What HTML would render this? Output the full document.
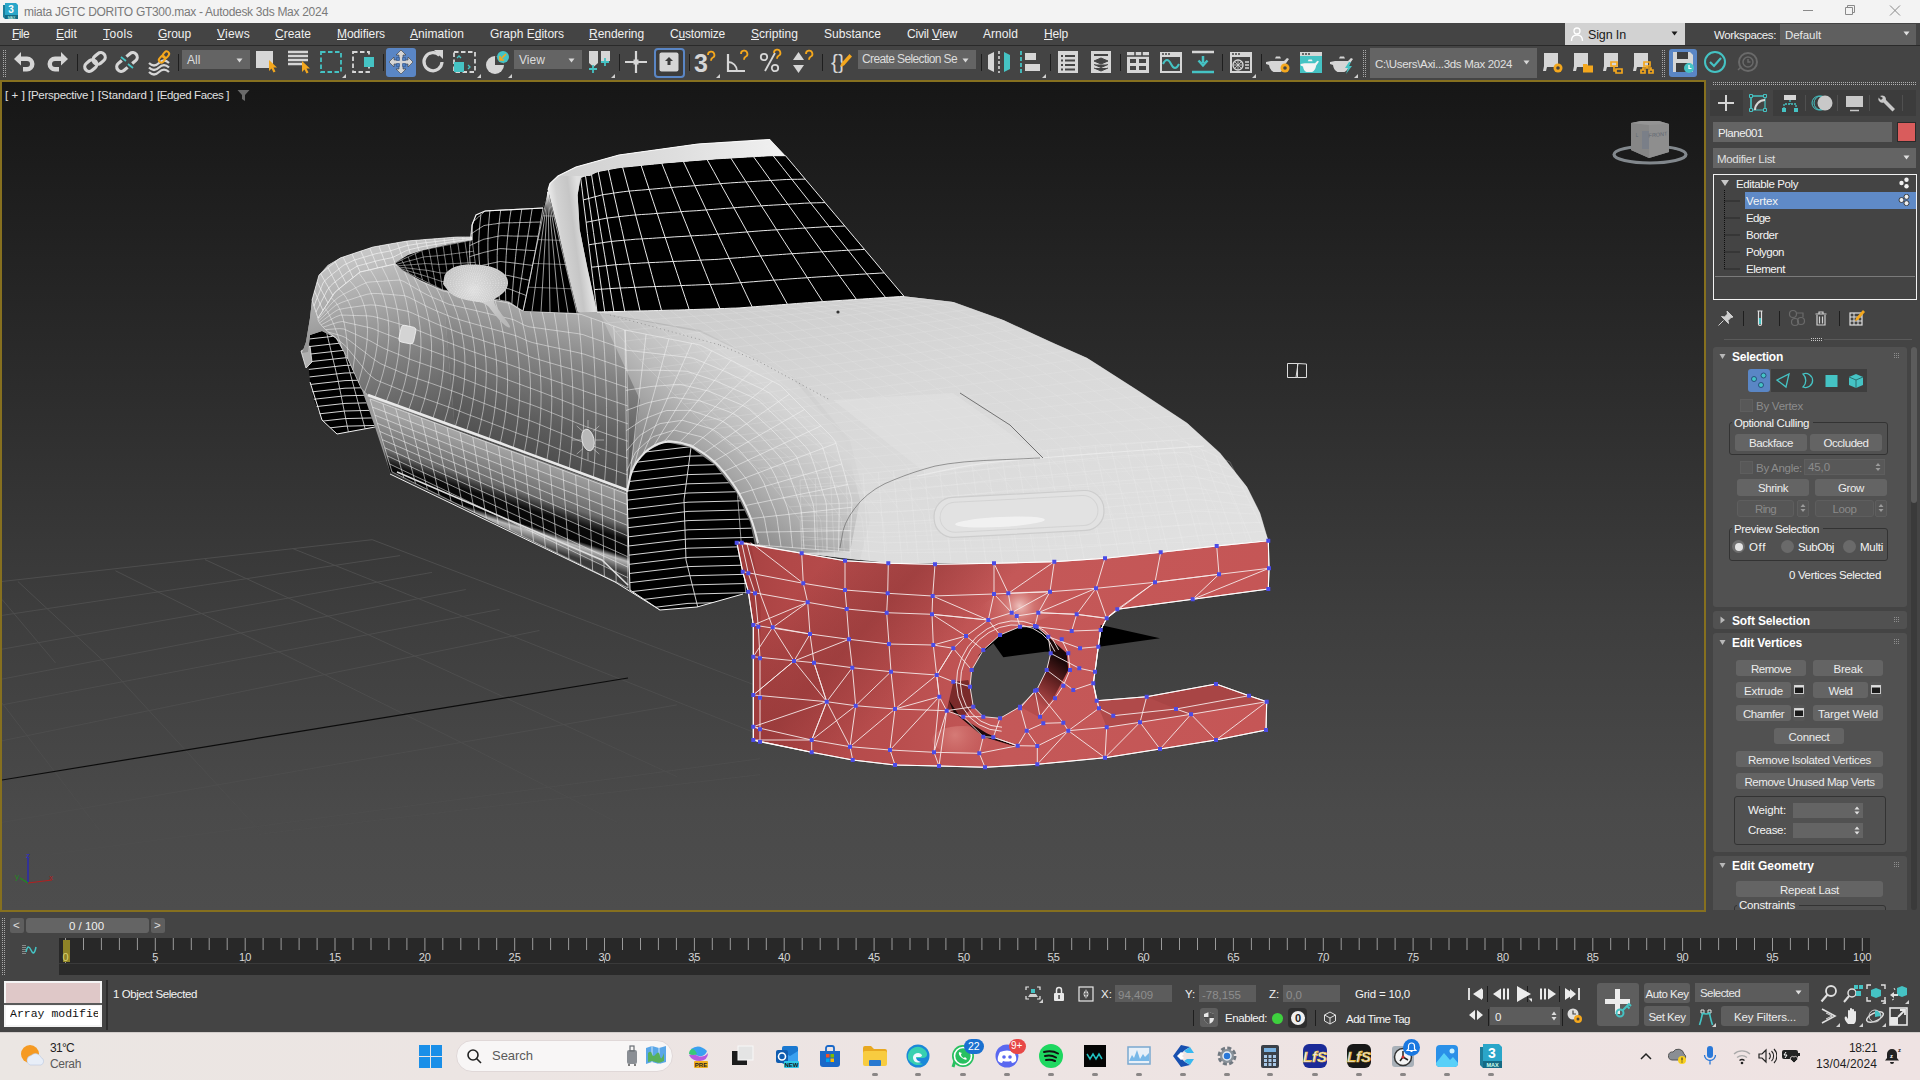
<!DOCTYPE html>
<html><head><meta charset="utf-8"><title>3ds Max</title>
<style>
html,body{margin:0;padding:0;}
body{width:1920px;height:1080px;overflow:hidden;position:relative;background:#444444;font-family:"Liberation Sans",sans-serif;font-size:12px;color:#e6e6e6;}
.abs{position:absolute;}
.t{position:absolute;white-space:nowrap;line-height:14px;}
#title{left:0;top:0;width:1920px;height:23px;background:#f3f3f3;}
#menubar{left:0;top:23px;width:1920px;height:22px;background:#444444;border-bottom:1px solid #2a2a2a;}
#toolbar{left:0;top:46px;width:1920px;height:34px;background:#444444;}
#vp{left:0;top:80px;width:1702px;height:828px;border:2px solid #86701f;background:linear-gradient(#161616 0%,#1f1f1f 15%,#2e2e2e 40%,#3e3e3e 65%,#4a4a4a 88%,#4d4d4d 100%);overflow:hidden;}
#panel{left:1706px;top:80px;width:214px;height:832px;background:#444444;}
#bottom{left:0;top:912px;width:1920px;height:120px;background:#444444;}
#taskbar{left:0;top:1032px;width:1920px;height:47px;border-top:1px solid #d2cdcb;background:linear-gradient(90deg,#ebe6e3,#ede4e3 50%,#efe3e3);}
u{text-decoration:underline;text-underline-offset:1px;}
</style>
</head>
<body>
<div id="title" class="abs"><svg class="abs" style="left:2px;top:3px" width="17" height="17" viewBox="0 0 17 17"><path d="M3 0h11l2 2v11H3z" fill="#2aa6c9"/><path d="M1 2h2v11h13v3H3l-2-2z" fill="#1d7d9a"/><rect x="3" y="12" width="13" height="4" fill="#156a84"/><text x="9" y="10" font-family="Liberation Sans" font-weight="bold" font-size="10" fill="#fff" text-anchor="middle">3</text><text x="9.5" y="15.5" font-family="Liberation Sans" font-size="3.5" fill="#cfe" text-anchor="middle">MAX</text></svg>
<span class="t" style="left:24px;top:5px;font-size:12px;color:#7a7a7a;letter-spacing:-0.29px;">miata JGTC DORITO GT300.max - Autodesk 3ds Max 2024</span>
<svg class="abs" style="left:1795px;top:0px" width="120" height="23" viewBox="0 0 120 23"><path d="M8 10.5h10" stroke="#8a8a8a" stroke-width="1"/><path d="M50.5 7.5h7v7h-7z M52.5 7.5v-2h7v7h-2" fill="none" stroke="#8a8a8a" stroke-width="1"/><path d="M95 5.5l10 10M105 5.5l-10 10" stroke="#8a8a8a" stroke-width="1"/></svg></div>
<div id="menubar" class="abs"><span class="t" style="left:12px;top:4px;font-size:12px;color:#f0f0f0;letter-spacing:-0.58px;"><u>F</u>ile</span>
<span class="t" style="left:56px;top:4px;font-size:12px;color:#f0f0f0;letter-spacing:0.08px;"><u>E</u>dit</span>
<span class="t" style="left:103px;top:4px;font-size:12px;color:#f0f0f0;letter-spacing:0.40px;"><u>T</u>ools</span>
<span class="t" style="left:158px;top:4px;font-size:12px;color:#f0f0f0;letter-spacing:-0.07px;"><u>G</u>roup</span>
<span class="t" style="left:217px;top:4px;font-size:12px;color:#f0f0f0;letter-spacing:0.24px;"><u>V</u>iews</span>
<span class="t" style="left:275px;top:4px;font-size:12px;color:#f0f0f0;letter-spacing:-0.00px;"><u>C</u>reate</span>
<span class="t" style="left:337px;top:4px;font-size:12px;color:#f0f0f0;letter-spacing:-0.08px;"><u>M</u>odifiers</span>
<span class="t" style="left:410px;top:4px;font-size:12px;color:#f0f0f0;letter-spacing:0.07px;"><u>A</u>nimation</span>
<span class="t" style="left:490px;top:4px;font-size:12px;color:#f0f0f0;letter-spacing:-0.00px;">Graph E<u>d</u>itors</span>
<span class="t" style="left:589px;top:4px;font-size:12px;color:#f0f0f0;letter-spacing:-0.04px;"><u>R</u>endering</span>
<span class="t" style="left:670px;top:4px;font-size:12px;color:#f0f0f0;letter-spacing:-0.19px;">C<u>u</u>stomize</span>
<span class="t" style="left:751px;top:4px;font-size:12px;color:#f0f0f0;letter-spacing:0.03px;"><u>S</u>cripting</span>
<span class="t" style="left:824px;top:4px;font-size:12px;color:#f0f0f0;letter-spacing:0.03px;">Substance</span>
<span class="t" style="left:907px;top:4px;font-size:12px;color:#f0f0f0;letter-spacing:-0.18px;">Civil <u>V</u>iew</span>
<span class="t" style="left:983px;top:4px;font-size:12px;color:#f0f0f0;letter-spacing:0.05px;">Arnold</span>
<span class="t" style="left:1044px;top:4px;font-size:12px;color:#f0f0f0;letter-spacing:-0.17px;"><u>H</u>elp</span>
<div class="abs" style="left:1565px;top:0px;width:120px;height:22px;background:#d2d2d2;"></div>
<svg class="abs" style="left:1569px;top:2px" width="16" height="18" viewBox="0 0 16 18"><circle cx="8" cy="6" r="3" fill="none" stroke="#fff" stroke-width="1.3"/><path d="M2.5 16c0-4 2.5-6 5.500-6s5.500 2 5.500 6" fill="none" stroke="#fff" stroke-width="1.3"/></svg>
<span class="t" style="left:1588px;top:5px;font-size:12.5px;color:#1a1a1a;letter-spacing:-0.13px;">Sign In</span>
<svg class="abs" style="left:1671px;top:8px" width="8" height="6" viewBox="0 0 8 6"><path d="M0.500 0.500h6l-3 4z" fill="#1a1a1a"/></svg>
<span class="t" style="left:1714px;top:5px;font-size:11.5px;color:#f0f0f0;letter-spacing:-0.39px;">Workspaces:</span>
<div class="abs" style="left:1780px;top:1px;width:136px;height:21px;background:#5f5f5f;"></div>
<span class="t" style="left:1785px;top:5px;font-size:11.5px;color:#e8e8e8;letter-spacing:-0.06px;">Default</span>
<svg class="abs" style="left:1903px;top:8px" width="8" height="6" viewBox="0 0 8 6"><path d="M0.500 0.500h6l-3 4z" fill="#e0e0e0"/></svg></div>
<div id="toolbar" class="abs"><svg class="abs" style="left:3px;top:4px" width="4" height="27" viewBox="0 0 4 27"><defs><pattern id="gp3" width="2" height="2" patternUnits="userSpaceOnUse"><rect width="1" height="1" fill="#a8a8a8"/></pattern></defs><rect width="4" height="27" fill="url(#gp3)"/></svg>
<svg class="abs" style="left:11.0px;top:2.0px" width="28" height="28" viewBox="-14.0 -14.0 28 28"><path d="M-11 -3l7-7v4.500h6a7.500 7.500 0 0 1 0 15h-4v-4.500h4a3 3 0 0 0 0-6h-6v4.500z" fill="#d6d6d6"/></svg>
<svg class="abs" style="left:43.0px;top:2.0px" width="28" height="28" viewBox="-14.0 -14.0 28 28"><path d="M11 -3l-7-7v4.500h-6a7.500 7.500 0 0 0 0 15h4v-4.500h-4a3 3 0 0 1 0-6h6v4.500z" fill="#d6d6d6"/></svg>
<div class="abs" style="left:77px;top:8px;width:1px;height:17px;background:#1e1e1e;"></div>
<svg class="abs" style="left:81.0px;top:2.0px" width="28" height="28" viewBox="-14.0 -14.0 28 28"><g transform="rotate(-40)" fill="none" stroke="#d6d6d6" stroke-width="3.2"><rect x="-12" y="-4.500" width="13" height="9" rx="4.500"/><rect x="-1" y="-4.500" width="13" height="9" rx="4.500"/></g></svg>
<svg class="abs" style="left:113.0px;top:2.0px" width="28" height="28" viewBox="-14.0 -14.0 28 28"><g transform="rotate(-40)" fill="none" stroke="#d6d6d6" stroke-width="3.2"><path d="M-3 -4.500h-4.500a4.500 4.500 0 0 0 0 9h4.500M3 -4.500h4.500a4.500 4.500 0 0 1 0 9h-4.500"/></g><path d="M-6 -5l5 4M1 2l5 4" stroke="#45c3c4" stroke-width="1.8"/></svg>
<svg class="abs" style="left:145.0px;top:2.0px" width="28" height="28" viewBox="-14.0 -14.0 28 28"><path d="M-10 1q5 5 10 0t10 0M-10 5.500q5 5 10 0t10 0M-10 10q5 5 10 0t10 0" fill="none" stroke="#d6d6d6" stroke-width="2.2"/><g transform="translate(5,-5) rotate(-50)" fill="none" stroke="#f4a71d" stroke-width="2"><rect x="-6.500" y="-2.500" width="7" height="5" rx="2.500"/><rect x="-0.500" y="-2.500" width="7" height="5" rx="2.500"/></g></svg>
<div class="abs" style="left:178px;top:8px;width:1px;height:17px;background:#1e1e1e;"></div>
<div class="abs" style="left:182px;top:4px;width:68px;height:19px;background:#646464;"></div>
<span class="t" style="left:187px;top:7px;font-size:12px;color:#dcdcdc;">All</span>
<svg class="abs" style="left:236px;top:12px" width="8" height="6" viewBox="0 0 8 6"><path d="M0.500 0.500h6l-3 4z" fill="#d8d8d8"/></svg>
<svg class="abs" style="left:252.0px;top:2.0px" width="28" height="28" viewBox="-14.0 -14.0 28 28"><rect x="-10" y="-11" width="17" height="17" fill="#d6d6d6"/><path d="M3 -2l0 11 2.500-2.500 2 4 2-1-2-4 3.500 0z" fill="#f4a71d"/></svg>
<svg class="abs" style="left:284.0px;top:2.0px" width="28" height="28" viewBox="-14.0 -14.0 28 28"><path d="M-10 -10h20M-10 -6h20M-10 -2h20M-10 2h14" stroke="#d6d6d6" stroke-width="2.400"/><path d="M4 -1l0 11 2.500-2.500 2 4 2-1-2-4 3.500 0z" fill="#f4a71d"/></svg>
<svg class="abs" style="left:317.0px;top:2.0px" width="28" height="28" viewBox="-14.0 -14.0 28 28"><rect x="-10" y="-10" width="20" height="20" fill="none" stroke="#45c3c4" stroke-width="1.800" stroke-dasharray="4.500 2.500"/></svg>
<svg class="abs" style="left:342px;top:28px" width="4" height="4" viewBox="0 0 4 4"><path d="M4 0v4h-4z" fill="#d0d0d0"/></svg>
<svg class="abs" style="left:349.0px;top:2.0px" width="28" height="28" viewBox="-14.0 -14.0 28 28"><rect x="-10" y="-10" width="16" height="20" fill="none" stroke="#d6d6d6" stroke-width="1.800" stroke-dasharray="4.500 2.500"/><rect x="1" y="-5" width="10" height="10" fill="#45c3c4"/></svg>
<div class="abs" style="left:383px;top:8px;width:1px;height:17px;background:#1e1e1e;"></div>
<div class="abs" style="left:386px;top:2px;width:30px;height:29px;background:#5a86c5;border-radius:3px;"></div>
<svg class="abs" style="left:387.0px;top:2.0px" width="28" height="28" viewBox="-14.0 -14.0 28 28"><path d="M0 -12l5 5h-3v5h5v-3l5 5-5 5v-3h-5v5h3l-5 5-5-5h3v-5h-5v3l-5-5 5-5v3h5v-5h-3z" fill="#d6d6d6" stroke="#3a3a3a" stroke-width="0.600"/><path d="M-4.500-4.500h3v3h-3zM1.500-4.500h3v3h-3zM-4.500 1.500h3v3h-3zM1.500 1.500h3v3h-3z" fill="#4f7fbf" stroke="#2d4f86" stroke-width="0.500"/></svg>
<svg class="abs" style="left:419.0px;top:2.0px" width="28" height="28" viewBox="-14.0 -14.0 28 28"><path d="M6.500 -6.500a9 9 0 1 0 2.500 6.500" fill="none" stroke="#d6d6d6" stroke-width="3.200"/><path d="M1 -12l9 0 0 9z" fill="#d6d6d6"/></svg>
<svg class="abs" style="left:451.0px;top:2.0px" width="28" height="28" viewBox="-14.0 -14.0 28 28"><rect x="-11" y="-10" width="21" height="20" fill="none" stroke="#d6d6d6" stroke-width="1.800" stroke-dasharray="4.500 2.500"/><rect x="-11" y="0" width="10" height="10" fill="#45c3c4"/><path d="M-8 -4l2-2 2 2M3 3l2 2-2 2" fill="none" stroke="#45c3c4" stroke-width="1.300"/></svg>
<svg class="abs" style="left:477px;top:28px" width="4" height="4" viewBox="0 0 4 4"><path d="M4 0v4h-4z" fill="#d0d0d0"/></svg>
<svg class="abs" style="left:483.0px;top:2.0px" width="28" height="28" viewBox="-14.0 -14.0 28 28"><circle cx="-2" cy="3" r="9" fill="#d6d6d6"/><path d="M-2 3l0-9a9 9 0 0 1 9 9z" fill="#444"/><circle cx="6" cy="-5" r="6" fill="#45c3c4"/><path d="M9 -8l-6 6m0-4v4h4" stroke="#f4a71d" stroke-width="1.600" fill="none"/></svg>
<svg class="abs" style="left:508px;top:28px" width="4" height="4" viewBox="0 0 4 4"><path d="M4 0v4h-4z" fill="#d0d0d0"/></svg>
<div class="abs" style="left:514px;top:4px;width:68px;height:19px;background:#646464;"></div>
<span class="t" style="left:519px;top:7px;font-size:12px;color:#dcdcdc;letter-spacing:0.05px;">View</span>
<svg class="abs" style="left:568px;top:12px" width="8" height="6" viewBox="0 0 8 6"><path d="M0.500 0.500h6l-3 4z" fill="#d8d8d8"/></svg>
<svg class="abs" style="left:586.0px;top:2.0px" width="28" height="28" viewBox="-14.0 -14.0 28 28"><path d="M-11 -11h9v12l-4.500 4-4.500-4z" fill="#d6d6d6"/><path d="M1 -11h9v10h-9z" fill="#d6d6d6"/><path d="M-7 3v8m-4-4h8M5 -4v8m-4-4h8" stroke="#45c3c4" stroke-width="1.800"/></svg>
<svg class="abs" style="left:611px;top:28px" width="4" height="4" viewBox="0 0 4 4"><path d="M4 0v4h-4z" fill="#d0d0d0"/></svg>
<div class="abs" style="left:619px;top:8px;width:1px;height:17px;background:#1e1e1e;"></div>
<svg class="abs" style="left:622.0px;top:2.0px" width="28" height="28" viewBox="-14.0 -14.0 28 28"><path d="M0 -11v22M-11 0h22" stroke="#d6d6d6" stroke-width="2.200"/><rect x="-2.500" y="-2.500" width="5" height="5" fill="#d6d6d6"/></svg>
<div class="abs" style="left:654px;top:2px;width:27px;height:26px;background:#3c3c3c;border:2px solid #5a86c5;border-radius:4px;"></div>
<svg class="abs" style="left:655.0px;top:2.0px" width="28" height="28" viewBox="-14.0 -14.0 28 28"><rect x="-9.500" y="-9.500" width="19" height="19" rx="2" fill="#d6d6d6"/><path d="M0 -5l4 4h-2.500v4h-3v-4h-2.500z" fill="#3a3a3a"/></svg>
<div class="abs" style="left:689px;top:8px;width:1px;height:17px;background:#1e1e1e;"></div>
<svg class="abs" style="left:691.0px;top:2.0px" width="28" height="28" viewBox="-14.0 -14.0 28 28"><text x="-4" y="9.500" font-family="Liberation Sans" font-weight="bold" font-size="25" fill="#d6d6d6" text-anchor="middle">3</text><path d="M3 -7a3.200 3.200 0 1 1 4.500 2.800q-1.500 1-1.500 3" fill="none" stroke="#f4a71d" stroke-width="1.800"/></svg>
<svg class="abs" style="left:716px;top:28px" width="4" height="4" viewBox="0 0 4 4"><path d="M4 0v4h-4z" fill="#d0d0d0"/></svg>
<svg class="abs" style="left:724.0px;top:2.0px" width="28" height="28" viewBox="-14.0 -14.0 28 28"><path d="M-10 -8v17h17" fill="none" stroke="#d6d6d6" stroke-width="2.200"/><path d="M-10 0a9 9 0 0 1 9 9" fill="none" stroke="#d6d6d6" stroke-width="1.800"/><path d="M3 -8a3.200 3.200 0 1 1 4.500 2.800q-1.500 1-1.500 3" fill="none" stroke="#f4a71d" stroke-width="1.800"/></svg>
<svg class="abs" style="left:757.0px;top:2.0px" width="28" height="28" viewBox="-14.0 -14.0 28 28"><circle cx="-7" cy="-5" r="3.200" fill="none" stroke="#d6d6d6" stroke-width="1.800"/><circle cx="4" cy="6" r="3.200" fill="none" stroke="#d6d6d6" stroke-width="1.800"/><path d="M4 -9l-10 18" stroke="#d6d6d6" stroke-width="1.800"/><path d="M3 -9a3.200 3.200 0 1 1 4.500 2.800q-1.500 1-1.500 3" fill="none" stroke="#f4a71d" stroke-width="1.800"/></svg>
<svg class="abs" style="left:789.0px;top:2.0px" width="28" height="28" viewBox="-14.0 -14.0 28 28"><path d="M-10 -2l5.500-8 5.500 8zM-10 3l5.500 8 5.500-8z" fill="#d6d6d6"/><path d="M3 -8a3.200 3.200 0 1 1 4.500 2.800q-1.500 1-1.500 3" fill="none" stroke="#f4a71d" stroke-width="1.800"/></svg>
<div class="abs" style="left:822px;top:8px;width:1px;height:17px;background:#1e1e1e;"></div>
<svg class="abs" style="left:827.0px;top:2.0px" width="28" height="28" viewBox="-14.0 -14.0 28 28"><text x="-3" y="7" font-family="Liberation Sans" font-size="21" fill="#d6d6d6" text-anchor="middle">{}</text><path d="M-1 5l1.500-4 8-9 2.500 2.500-8 9z" fill="#f4a71d"/></svg>
<div class="abs" style="left:858px;top:4px;width:118px;height:19px;background:#646464;"></div>
<span class="t" style="left:862px;top:6px;font-size:12px;color:#dcdcdc;letter-spacing:-0.62px;">Create Selection Se</span>
<svg class="abs" style="left:962px;top:12px" width="8" height="6" viewBox="0 0 8 6"><path d="M0.500 0.500h6l-3 4z" fill="#d8d8d8"/></svg>
<div class="abs" style="left:981px;top:8px;width:1px;height:17px;background:#1e1e1e;"></div>
<svg class="abs" style="left:985.0px;top:2.0px" width="28" height="28" viewBox="-14.0 -14.0 28 28"><path d="M-11 -7l6-3v20l-6-3z" fill="#d6d6d6"/><path d="M11 -7l-6-3v20l6-3z" fill="#45c3c4"/><path d="M0 -11v22" stroke="#d6d6d6" stroke-width="1.600" stroke-dasharray="3 2"/></svg>
<svg class="abs" style="left:1016.0px;top:2.0px" width="28" height="28" viewBox="-14.0 -14.0 28 28"><path d="M-9 -11v22" stroke="#45c3c4" stroke-width="1.800" stroke-dasharray="4 2"/><rect x="-5" y="-9" width="11" height="7" fill="#d6d6d6"/><rect x="-5" y="2" width="15" height="7" fill="#d6d6d6"/></svg>
<svg class="abs" style="left:1042px;top:28px" width="4" height="4" viewBox="0 0 4 4"><path d="M4 0v4h-4z" fill="#d0d0d0"/></svg>
<div class="abs" style="left:1050px;top:8px;width:1px;height:17px;background:#1e1e1e;"></div>
<svg class="abs" style="left:1054.0px;top:2.0px" width="28" height="28" viewBox="-14.0 -14.0 28 28"><rect x="-10" y="-11" width="20" height="22" fill="#d6d6d6"/><path d="M-7 -6h2M-3 -6h10M-7 -1.500h2M-3 -1.500h10M-7 3h2M-3 3h10M-7 7.500h2M-3 7.500h10" stroke="#444" stroke-width="2"/></svg>
<svg class="abs" style="left:1087.0px;top:2.0px" width="28" height="28" viewBox="-14.0 -14.0 28 28"><rect x="-10" y="-11" width="20" height="22" fill="#d6d6d6"/><path d="M-7 -7h14" stroke="#444" stroke-width="2"/><path d="M0 -4l7 3-7 3-7-3zM-7 2.500l7 3 7-3M-7 6l7 3 7-3" fill="#444" stroke="#444" stroke-width="1"/></svg>
<div class="abs" style="left:1120px;top:8px;width:1px;height:17px;background:#1e1e1e;"></div>
<svg class="abs" style="left:1124.0px;top:2.0px" width="28" height="28" viewBox="-14.0 -14.0 28 28"><rect x="-11" y="-10" width="22" height="21" fill="#d6d6d6"/><path d="M-11 -6h22M-3 -10v4M4 -10v4" stroke="#444" stroke-width="1.500"/><rect x="-8" y="-3" width="6" height="4" fill="#444"/><rect x="1" y="-3" width="7" height="4" fill="#444"/><rect x="-8" y="4" width="6" height="4" fill="#444"/><rect x="1" y="4" width="7" height="4" fill="#444"/></svg>
<svg class="abs" style="left:1157.0px;top:2.0px" width="28" height="28" viewBox="-14.0 -14.0 28 28"><rect x="-11" y="-10" width="22" height="21" fill="#d6d6d6"/><path d="M-9 -8h2m1 0h2m1 0h2" stroke="#444" stroke-width="1.600"/><rect x="-9" y="-5" width="18" height="14" fill="#444"/><path d="M-8 2q4-8 8 0t8 0" fill="none" stroke="#45c3c4" stroke-width="2"/></svg>
<svg class="abs" style="left:1189.0px;top:2.0px" width="28" height="28" viewBox="-14.0 -14.0 28 28"><path d="M-11 -10h22" stroke="#d6d6d6" stroke-width="2.500"/><path d="M-11 10h22" stroke="#45c3c4" stroke-width="2.500"/><path d="M0 -6v7m-4.500-2.500l4.500 5 4.500-5" stroke="#45c3c4" stroke-width="2.500" fill="none"/></svg>
<div class="abs" style="left:1222px;top:8px;width:1px;height:17px;background:#1e1e1e;"></div>
<svg class="abs" style="left:1227.0px;top:2.0px" width="28" height="28" viewBox="-14.0 -14.0 28 28"><rect x="-11" y="-10" width="22" height="21" fill="#d6d6d6"/><path d="M-9 -8h2m1 0h2m1 0h2" stroke="#444" stroke-width="1.600"/><rect x="-9" y="-5" width="18" height="14" fill="#444"/><circle cx="-3" cy="3" r="5" fill="none" stroke="#d6d6d6" stroke-width="1.400"/><path d="M-7 3h8M-3 -1v8M-6 0l6 6M0 0l-6 6" stroke="#d6d6d6" stroke-width="0.800"/><path d="M4 0h4M4 3h4M4 6h4" stroke="#d6d6d6" stroke-width="1.300"/></svg>
<svg class="abs" style="left:1252px;top:28px" width="4" height="4" viewBox="0 0 4 4"><path d="M4 0v4h-4z" fill="#d0d0d0"/></svg>
<div class="abs" style="left:1261px;top:8px;width:1px;height:17px;background:#1e1e1e;"></div>
<svg class="abs" style="left:1265.0px;top:2.0px" width="28" height="28" viewBox="-14.0 -14.0 28 28"><path d="M-8 -1h13l3-3 2 1-3.500 5q-1 6-5 8h-7q-4-2-4.500-7l-3-1 0-2z" fill="#d6d6d6"/><path d="M-4 -3.500h6l-1-2h-4z" fill="#d6d6d6"/><circle cx="6" cy="6" r="4.500" fill="#f4a71d"/><circle cx="6" cy="6" r="1.800" fill="#444"/></svg>
<svg class="abs" style="left:1297.0px;top:2.0px" width="28" height="28" viewBox="-14.0 -14.0 28 28"><rect x="-11" y="-10" width="22" height="21" fill="#45c3c4"/><rect x="-11" y="-10" width="22" height="4" fill="#d6d6d6"/><path d="M-9 -8h2m1 0h2m1 0h2" stroke="#444" stroke-width="1.600"/><g transform="translate(0,2) scale(0.800)"><path d="M-8 -1h13l3-3 2 1-3.500 5q-1 6-5 8h-7q-4-2-4.500-7l-3-1 0-2z" fill="#f4f4f4"/><path d="M-4 -3.500h6l-1-2h-4z" fill="#f4f4f4"/></g></svg>
<svg class="abs" style="left:1329.0px;top:2.0px" width="28" height="28" viewBox="-14.0 -14.0 28 28"><path d="M-8 -1h13l3-3 2 1-3.500 5q-1 6-5 8h-7q-4-2-4.500-7l-3-1 0-2z" fill="#d6d6d6"/><path d="M-4 -3.500h6l-1-2h-4z" fill="#d6d6d6"/><path d="M6 0l-4 6h3l-2 6 6-8h-3l2-4z" fill="#45c3c4"/></svg>
<svg class="abs" style="left:1354px;top:28px" width="4" height="4" viewBox="0 0 4 4"><path d="M4 0v4h-4z" fill="#d0d0d0"/></svg>
<svg class="abs" style="left:1363px;top:4px" width="4" height="27" viewBox="0 0 4 27"><defs><pattern id="gp1363" width="2" height="2" patternUnits="userSpaceOnUse"><rect width="1" height="1" fill="#a8a8a8"/></pattern></defs><rect width="4" height="27" fill="url(#gp1363)"/></svg>
<div class="abs" style="left:1370px;top:2px;width:167px;height:30px;background:#646464;"></div>
<span class="t" style="left:1375px;top:11px;font-size:11.5px;color:#e0e0e0;letter-spacing:-0.32px;">C:\Users\Axi...3ds Max 2024</span>
<svg class="abs" style="left:1523px;top:14px" width="8" height="6" viewBox="0 0 8 6"><path d="M0.500 0.500h6l-3 4z" fill="#d8d8d8"/></svg>
<svg class="abs" style="left:1539.0px;top:2.0px" width="28" height="28" viewBox="-14.0 -14.0 28 28"><path d="M-9 -9h14v14h-11l-1 4h-3l1-5h0z" fill="#d6d6d6"/><circle cx="5" cy="6" r="4.500" fill="#f4a71d"/><circle cx="5" cy="6" r="1.800" fill="#444"/></svg>
<svg class="abs" style="left:1569.0px;top:2.0px" width="28" height="28" viewBox="-14.0 -14.0 28 28"><path d="M-9 -9h14v14h-11l-1 4h-3l1-5h0z" fill="#d6d6d6"/><path d="M0 2h4l1 1.500h5v7h-10z" fill="#f4a71d"/></svg>
<svg class="abs" style="left:1599.0px;top:2.0px" width="28" height="28" viewBox="-14.0 -14.0 28 28"><path d="M-9 -9h14v14h-11l-1 4h-3l1-5h0z" fill="#d6d6d6"/><path d="M-2 0h6v4h-6zM3 7h6v4h-6zM1 4v5h2" fill="none" stroke="#f4a71d" stroke-width="1.700"/></svg>
<svg class="abs" style="left:1629.0px;top:2.0px" width="28" height="28" viewBox="-14.0 -14.0 28 28"><path d="M-9 -9h14v14h-11l-1 4h-3l1-5h0z" fill="#d6d6d6"/><path d="M1 0h6v4h-6zM-2 8h4v3h-4zM6 8h4v3h-4zM4 4v2m-4 2v-2h8v2" fill="none" stroke="#f4a71d" stroke-width="1.700"/></svg>
<svg class="abs" style="left:1662px;top:4px" width="4" height="27" viewBox="0 0 4 27"><defs><pattern id="gp1662" width="2" height="2" patternUnits="userSpaceOnUse"><rect width="1" height="1" fill="#a8a8a8"/></pattern></defs><rect width="4" height="27" fill="url(#gp1662)"/></svg>
<div class="abs" style="left:1669px;top:3px;width:28px;height:28px;background:#5a86c5;border-radius:3px;"></div>
<svg class="abs" style="left:1669.0px;top:2.0px" width="28" height="28" viewBox="-14.0 -14.0 28 28"><path d="M-10 -10h17l3 3v17h-20z" fill="#d6d6d6"/><rect x="-6" y="-10" width="11" height="7" fill="#3e3e3e"/><rect x="-7" y="1" width="14" height="9" fill="#3e3e3e"/><circle cx="6" cy="6" r="5" fill="#45c3c4"/><path d="M6 3v3.500h2.500" stroke="#fff" stroke-width="1.200" fill="none"/></svg>
<svg class="abs" style="left:1701.0px;top:2.0px" width="28" height="28" viewBox="-14.0 -14.0 28 28"><circle cx="0" cy="0" r="10" fill="none" stroke="#45c3c4" stroke-width="2"/><path d="M-5 0l4 4 7-8" fill="none" stroke="#45c3c4" stroke-width="2.200"/></svg>
<svg class="abs" style="left:1733.0px;top:2.0px" width="28" height="28" viewBox="-14.0 -14.0 28 28"><circle cx="1" cy="0" r="9" fill="none" stroke="#6a6a6a" stroke-width="2"/><circle cx="1" cy="0" r="5" fill="none" stroke="#6a6a6a" stroke-width="1.500"/><path d="M1 -3v3h2.500M-9 8l3-3" stroke="#6a6a6a" stroke-width="1.500" fill="none"/></svg></div>
<div id="vp" class="abs"><svg class="abs" style="left:0;top:0" width="1702" height="828" viewBox="2 82 1702 828">
<defs>
<linearGradient id="gSide" x1="0" y1="0" x2="0.35" y2="1"><stop offset="0" stop-color="#d2d2d2"/><stop offset="0.35" stop-color="#b4b4b4"/><stop offset="0.7" stop-color="#868686"/><stop offset="1" stop-color="#5a5a5a"/></linearGradient>
<linearGradient id="gHood" x1="0" y1="0" x2="1" y2="1"><stop offset="0" stop-color="#c9c9c9"/><stop offset="0.4" stop-color="#d8d8d8"/><stop offset="1" stop-color="#e2e2e2"/></linearGradient>
<linearGradient id="gFender" x1="0" y1="0" x2="1" y2="0"><stop offset="0" stop-color="#8c8c8c"/><stop offset="0.55" stop-color="#c4c4c4"/><stop offset="1" stop-color="#d8d8d8"/></linearGradient>
<linearGradient id="gRed" x1="0" y1="0" x2="1" y2="0"><stop offset="0" stop-color="#a84444"/><stop offset="0.18" stop-color="#b54a4a"/><stop offset="0.45" stop-color="#c25555"/><stop offset="1" stop-color="#c45656"/></linearGradient>
<radialGradient id="gMirror" cx="0.45" cy="0.4" r="0.7"><stop offset="0" stop-color="#dedede"/><stop offset="1" stop-color="#b8b8b8"/></radialGradient>
<linearGradient id="gPillar" x1="0" y1="0" x2="1" y2="0"><stop offset="0" stop-color="#c4c4c4"/><stop offset="0.5" stop-color="#e4e4e4"/><stop offset="1" stop-color="#cfcfcf"/></linearGradient>
</defs>
<g id="grid">
<line x1="2.0" y1="581.5" x2="372.2" y2="539.7" stroke="#4d4d4d" stroke-width="1" opacity="1"/>
<line x1="2.0" y1="615.4" x2="400.1" y2="555.6" stroke="#4d4d4d" stroke-width="1" opacity="1"/>
<line x1="2.0" y1="649.2" x2="432.0" y2="572.4" stroke="#4d4d4d" stroke-width="1" opacity="1"/>
<line x1="2.0" y1="679.1" x2="465.8" y2="589.5" stroke="#4d4d4d" stroke-width="1" opacity="1"/>
<line x1="2.0" y1="704.9" x2="499.6" y2="609.4" stroke="#4d4d4d" stroke-width="1" opacity="1"/>
<line x1="2.0" y1="740.8" x2="539.4" y2="630.5" stroke="#4d4d4d" stroke-width="1" opacity="1"/>
<line x1="2.0" y1="822.4" x2="676.8" y2="704.9" stroke="#4d4d4d" stroke-width="1" opacity="1"/>
<line x1="51.8" y1="854.2" x2="760.0" y2="758.7" stroke="#4d4d4d" stroke-width="1" opacity="1"/>
<line x1="258.8" y1="834.3" x2="760.0" y2="774.6" stroke="#4d4d4d" stroke-width="1" opacity="1"/>
<line x1="17.9" y1="581.5" x2="103.5" y2="661.1" stroke="#4d4d4d" stroke-width="1" opacity="1"/>
<line x1="115.5" y1="570.8" x2="461.8" y2="742.8" stroke="#4d4d4d" stroke-width="1" opacity="1"/>
<line x1="205.0" y1="559.6" x2="676.8" y2="776.6" stroke="#4d4d4d" stroke-width="1" opacity="1"/>
<line x1="292.6" y1="548.5" x2="760.0" y2="734.8" stroke="#4d4d4d" stroke-width="1" opacity="1"/>
<line x1="372.2" y1="539.7" x2="760.0" y2="687.0" stroke="#4d4d4d" stroke-width="1" opacity="1"/>
<line x1="2.0" y1="599.4" x2="55.7" y2="663.1" stroke="#4d4d4d" stroke-width="1" opacity="1"/>
<line x1="2.0" y1="702.9" x2="99.5" y2="830.3" stroke="#4d4d4d" stroke-width="1" opacity="1"/>
<line x1="103.5" y1="661.1" x2="262.8" y2="834.3" stroke="#4d4d4d" stroke-width="1" opacity="1"/>
<line x1="461.8" y1="742.8" x2="617.1" y2="822.4" stroke="#4d4d4d" stroke-width="1" opacity="1"/>
</g>
<line x1="2.0" y1="780.0" x2="628.0" y2="678.0" stroke="#0c0c0c" stroke-width="1.2" opacity="1"/>
<polygon points="310.0,335.0 322.0,331.0 336.0,338.0 347.0,357.0 362.0,390.0 375.0,427.0 337.0,434.0 322.0,420.0 314.0,400.0 310.0,382.0 308.0,360.0" fill="#000" />
<clipPath id="cRW"><polygon points="310.0,335.0 322.0,331.0 336.0,338.0 347.0,357.0 362.0,390.0 375.0,427.0 337.0,434.0 322.0,420.0 314.0,400.0 310.0,382.0 308.0,360.0"/></clipPath>
<g clip-path="url(#cRW)">
<polyline points="300.0,340.0 345.0,335.0 385.0,334.0" fill="none" stroke="#ececec" stroke-width="0.9" />
<polyline points="300.0,347.6 345.0,342.6 385.0,341.6" fill="none" stroke="#ececec" stroke-width="0.9" />
<polyline points="300.0,355.2 345.0,350.2 385.0,349.2" fill="none" stroke="#ececec" stroke-width="0.9" />
<polyline points="300.0,362.8 345.0,357.8 385.0,356.8" fill="none" stroke="#ececec" stroke-width="0.9" />
<polyline points="300.0,370.4 345.0,365.4 385.0,364.4" fill="none" stroke="#ececec" stroke-width="0.9" />
<polyline points="300.0,378.0 345.0,373.0 385.0,372.0" fill="none" stroke="#ececec" stroke-width="0.9" />
<polyline points="300.0,385.6 345.0,380.6 385.0,379.6" fill="none" stroke="#ececec" stroke-width="0.9" />
<polyline points="300.0,393.2 345.0,388.2 385.0,387.2" fill="none" stroke="#ececec" stroke-width="0.9" />
<polyline points="300.0,400.8 345.0,395.8 385.0,394.8" fill="none" stroke="#ececec" stroke-width="0.9" />
<polyline points="300.0,408.4 345.0,403.4 385.0,402.4" fill="none" stroke="#ececec" stroke-width="0.9" />
<polyline points="300.0,416.0 345.0,411.0 385.0,410.0" fill="none" stroke="#ececec" stroke-width="0.9" />
<polyline points="300.0,423.6 345.0,418.6 385.0,417.6" fill="none" stroke="#ececec" stroke-width="0.9" />
<polyline points="300.0,431.2 345.0,426.2 385.0,425.2" fill="none" stroke="#ececec" stroke-width="0.9" />
<polyline points="300.0,438.8 345.0,433.8 385.0,432.8" fill="none" stroke="#ececec" stroke-width="0.9" />
<polyline points="326.0,330.0 338.0,380.0 350.0,440.0" fill="none" stroke="#e0e0e0" stroke-width="0.8" />
<polyline points="340.0,336.0 352.0,380.0 366.0,432.0" fill="none" stroke="#e0e0e0" stroke-width="0.8" />
</g>
<polyline points="310.0,382.0 322.0,420.0 337.0,434.0 375.0,427.0" fill="none" stroke="#f2f2f2" stroke-width="1" />
<polygon points="301.0,351.0 310.0,346.0 312.0,362.0 306.0,368.0" fill="#b0b0b0" stroke="#eee" stroke-width="0.8"/>
<polygon points="302.0,353.0 306.0,342.0 310.0,318.0 312.0,300.0 319.0,275.0 328.0,265.0 340.0,258.0 373.0,247.0 407.0,241.0 457.0,237.0 472.0,237.0 472.0,225.0 476.0,215.0 485.0,211.0 543.0,208.0 548.0,190.0 550.0,183.5 558.0,176.0 576.0,167.0 619.0,155.0 698.0,144.0 770.0,139.5 785.5,156.0 904.0,296.3 953.0,302.0 1003.0,320.0 1053.0,343.0 1087.0,358.0 1137.0,390.0 1187.0,423.0 1220.0,453.0 1247.0,487.0 1260.0,513.0 1268.0,540.0 1217.0,546.0 1160.0,552.0 1105.0,558.0 1053.0,562.0 993.0,563.0 888.0,563.0 802.0,553.0 737.0,543.0 747.0,593.0 743.0,594.0 697.0,607.0 660.0,610.0 630.0,590.0 615.0,580.0 390.0,472.0 375.0,427.0 362.0,390.0 347.0,357.0 336.0,338.0 322.0,331.0 310.0,335.0 308.0,352.0" fill="url(#gSide)" />
<polygon points="597.0,312.0 678.6,310.0 738.0,308.0 817.0,302.0 904.0,296.3 953.0,302.0 1003.0,320.0 1053.0,343.0 1087.0,358.0 1137.0,390.0 1187.0,423.0 1220.0,453.0 1247.0,487.0 1260.0,513.0 1268.0,540.0 1217.0,546.0 1160.0,552.0 1105.0,558.0 1053.0,562.0 993.0,563.0 888.0,563.0 802.0,553.0 760.0,546.0 752.0,520.0 738.0,490.0 715.0,462.0 690.0,445.0 665.0,437.0 640.0,440.0 620.0,400.0 590.0,350.0" fill="url(#gHood)" />
<polygon points="523.0,311.0 600.0,313.0 700.0,330.0 800.0,380.0 850.0,440.0 870.0,520.0 860.0,560.0 802.0,553.0 760.0,546.0 752.0,520.0 738.0,490.0 715.0,462.0 690.0,445.0 665.0,437.0 640.0,442.0 627.0,470.0 600.0,440.0 560.0,380.0" fill="url(#gFender)" opacity="0.9"/>
<defs><linearGradient id="gQ" gradientUnits="userSpaceOnUse" x1="380" y1="250" x2="420" y2="420"><stop offset="0" stop-color="#c6c6c6"/><stop offset="0.3" stop-color="#a6a6a6"/><stop offset="0.65" stop-color="#7c7c7c"/><stop offset="1" stop-color="#5c5c5c"/></linearGradient><linearGradient id="gDoor" gradientUnits="userSpaceOnUse" x1="540" y1="300" x2="500" y2="450"><stop offset="0" stop-color="#b0b0b0"/><stop offset="0.35" stop-color="#848484"/><stop offset="0.75" stop-color="#5e5e5e"/><stop offset="1" stop-color="#4e4e4e"/></linearGradient><linearGradient id="gFen" gradientUnits="userSpaceOnUse" x1="760" y1="380" x2="680" y2="470"><stop offset="0" stop-color="#d6d6d6"/><stop offset="0.5" stop-color="#bcbcbc"/><stop offset="1" stop-color="#8e8e8e"/></linearGradient></defs>
<polygon points="302.0,353.0 306.0,342.0 310.0,318.0 312.0,300.0 319.0,275.0 328.0,265.0 340.0,258.0 373.0,247.0 407.0,241.0 457.0,237.0 472.0,237.0 472.0,262.0 443.0,291.0 455.0,430.0 370.0,397.0 362.0,390.0 347.0,357.0 336.0,338.0 322.0,331.0 310.0,335.0 308.0,352.0" fill="url(#gQ)" />
<polygon points="443.0,291.0 509.0,303.0 523.0,311.0 600.0,313.0 640.0,330.0 660.0,400.0 640.0,442.0 627.0,492.0 455.0,430.0" fill="url(#gDoor)" />
<polygon points="600.0,313.0 700.0,332.0 790.0,375.0 845.0,440.0 860.0,500.0 850.0,552.0 802.0,553.0 760.0,546.0 752.0,520.0 738.0,490.0 717.0,463.0 692.0,445.0 666.0,440.0 646.0,450.0 632.0,468.0 627.0,492.0 640.0,400.0" fill="url(#gFen)" />
<path d="M312.0 300.0 L312.8 297.3 L313.8 293.7 L314.5 291.0 L315.3 288.3 L316.3 284.7 L317.1 281.9 L317.8 279.2 L318.8 275.6 L320.7 273.6 L322.9 271.9 L325.8 269.5 L328.0 267.7 L330.1 266.0 L333.1 263.6 L335.2 261.8 L337.4 260.1 L340.4 257.9 L343.1 257.0 L345.8 256.1 L349.3 254.9 L352.0 254.0 L354.6 253.1 L358.2 251.9 L360.9 251.0 L363.5 250.2 L367.1 249.0 L369.8 248.1 L372.4 247.2 L376.1 246.5 L378.9 246.0 L381.6 245.5 L385.3 244.8 L388.1 244.3 L390.9 243.8 L394.6 243.2 L397.3 242.7 L400.1 242.2 L403.8 241.6 L406.6 241.1 L409.4 240.8 L413.1 240.5 L415.9 240.3 L418.7 240.1 L422.4 239.8 L425.2 239.5 L428.0 239.3 L431.8 239.0 L434.6 238.8 L437.4 238.6 L441.1 238.3 L443.9 238.0 L446.7 237.8 L450.5 237.5 L453.3 237.3 L456.1 237.1 L459.8 237.0 L462.6 237.0 L465.4 237.0 L469.2 237.0 L472.0 237.0 M314.0 306.0 L315.0 303.4 L316.3 300.0 L317.3 297.5 L318.3 294.9 L319.7 291.5 L320.7 288.9 L321.7 286.4 L323.0 283.0 L324.7 280.9 L326.7 278.9 L329.5 276.5 L331.6 274.8 L333.8 273.0 L336.7 270.7 L338.8 269.0 L341.0 267.2 L343.9 265.0 L346.4 263.8 L348.9 262.7 L352.2 261.1 L354.7 260.0 L357.4 259.2 L360.9 258.1 L363.6 257.3 L366.2 256.6 L369.8 255.5 L372.4 254.7 L375.1 253.9 L378.7 253.1 L381.4 252.6 L384.2 252.1 L387.8 251.4 L390.5 250.8 L393.1 250.0 L396.5 248.9 L399.1 248.0 L401.7 247.2 L405.2 246.1 L407.9 245.4 L410.6 245.0 L414.2 244.4 L416.9 244.0 L419.7 243.5 L423.3 243.0 L426.1 242.7 L428.8 242.4 L432.5 241.9 L435.3 241.6 L438.0 241.3 L441.7 240.8 L444.4 240.5 L447.2 240.2 L450.9 239.7 L453.6 239.4 L456.4 239.1 L460.0 238.8 L462.8 238.6 L465.6 238.4 L469.2 238.2 L472.0 238.0 M316.0 312.0 L317.2 309.6 L318.9 306.4 L320.1 304.0 L321.4 301.5 L323.0 298.3 L324.3 295.9 L325.5 293.5 L327.2 290.3 L328.8 288.1 L330.5 286.0 L333.1 283.5 L335.3 281.8 L337.4 280.1 L340.3 277.8 L342.4 276.1 L344.6 274.4 L347.4 272.1 L349.7 270.7 L352.0 269.3 L355.1 267.4 L357.4 266.0 L360.1 265.3 L363.6 264.4 L366.2 263.7 L368.9 263.0 L372.4 262.0 L375.1 261.3 L377.7 260.6 L381.3 259.8 L384.0 259.3 L386.7 258.7 L390.2 258.0 L392.9 257.3 L395.3 256.1 L398.5 254.5 L400.9 253.3 L403.3 252.1 L406.5 250.6 L409.2 249.8 L411.8 249.1 L415.3 248.3 L418.0 247.6 L420.6 247.0 L424.2 246.3 L426.9 245.9 L429.6 245.4 L433.2 244.8 L435.9 244.4 L438.6 244.0 L442.2 243.4 L444.9 243.0 L447.6 242.5 L451.3 241.9 L454.0 241.5 L456.7 241.1 L460.3 240.6 L463.0 240.2 L465.7 239.8 L469.3 239.4 L472.0 239.0 M318.0 318.0 L319.5 315.7 L321.5 312.7 L322.9 310.4 L324.4 308.2 L326.4 305.2 L327.9 302.9 L329.4 300.6 L331.3 297.6 L332.8 295.3 L334.3 293.1 L336.8 290.5 L339.0 288.8 L341.1 287.1 L343.9 284.9 L346.0 283.2 L348.1 281.5 L350.9 279.2 L353.1 277.6 L355.2 275.9 L358.0 273.6 L360.1 272.0 L362.8 271.4 L366.3 270.6 L368.9 270.0 L371.6 269.4 L375.1 268.5 L377.7 267.9 L380.4 267.3 L383.9 266.5 L386.5 265.9 L389.2 265.3 L392.7 264.5 L395.3 263.8 L397.5 262.3 L400.5 260.2 L402.7 258.7 L404.9 257.1 L407.9 255.1 L410.5 254.2 L413.0 253.3 L416.5 252.2 L419.0 251.3 L421.6 250.5 L425.1 249.6 L427.8 249.0 L430.4 248.5 L434.0 247.8 L436.6 247.2 L439.3 246.7 L442.8 246.0 L445.5 245.4 L448.1 244.9 L451.6 244.2 L454.3 243.6 L457.0 243.1 L460.5 242.3 L463.2 241.8 L465.8 241.3 L469.3 240.5 L472.0 240.0 M312.0 300.0 L312.5 301.5 L313.0 303.0 L313.5 304.5 L314.0 306.0 L314.5 307.5 L315.0 309.0 L315.5 310.5 L316.0 312.0 L316.5 313.5 L317.0 315.0 L317.5 316.5 L318.0 318.0 M314.5 291.0 L315.2 292.6 L315.9 294.2 L316.6 295.8 L317.3 297.5 L318.0 299.1 L318.7 300.7 L319.4 302.3 L320.1 304.0 L320.8 305.6 L321.5 307.2 L322.2 308.8 L322.9 310.4 M317.1 281.9 L318.0 283.7 L318.9 285.4 L319.8 287.2 L320.7 288.9 L321.6 290.7 L322.5 292.4 L323.4 294.2 L324.3 295.9 L325.2 297.6 L326.1 299.4 L327.0 301.1 L327.9 302.9 M320.7 273.6 L321.7 275.5 L322.7 277.3 L323.7 279.1 L324.7 280.9 L325.7 282.7 L326.8 284.5 L327.8 286.3 L328.8 288.1 L329.8 289.9 L330.8 291.7 L331.8 293.5 L332.8 295.3 M328.0 267.7 L328.9 269.5 L329.8 271.3 L330.7 273.0 L331.6 274.8 L332.5 276.5 L333.5 278.3 L334.4 280.1 L335.3 281.8 L336.2 283.6 L337.1 285.3 L338.0 287.1 L339.0 288.8 M335.2 261.8 L336.1 263.6 L337.0 265.4 L337.9 267.2 L338.8 269.0 L339.7 270.7 L340.6 272.5 L341.5 274.3 L342.4 276.1 L343.3 277.9 L344.2 279.6 L345.1 281.4 L346.0 283.2 M343.1 257.0 L343.9 258.7 L344.7 260.4 L345.6 262.1 L346.4 263.8 L347.2 265.5 L348.1 267.3 L348.9 269.0 L349.7 270.7 L350.6 272.4 L351.4 274.1 L352.2 275.8 L353.1 277.6 M352.0 254.0 L352.7 255.5 L353.3 257.0 L354.0 258.5 L354.7 260.0 L355.4 261.5 L356.1 263.0 L356.7 264.5 L357.4 266.0 L358.1 267.5 L358.8 269.0 L359.5 270.5 L360.1 272.0 M360.9 251.0 L361.5 252.6 L362.2 254.2 L362.9 255.8 L363.6 257.3 L364.2 258.9 L364.9 260.5 L365.6 262.1 L366.2 263.7 L366.9 265.2 L367.6 266.8 L368.3 268.4 L368.9 270.0 M369.8 248.1 L370.4 249.7 L371.1 251.4 L371.8 253.0 L372.4 254.7 L373.1 256.4 L373.8 258.0 L374.4 259.7 L375.1 261.3 L375.7 263.0 L376.4 264.6 L377.1 266.3 L377.7 267.9 M378.9 246.0 L379.5 247.6 L380.1 249.3 L380.8 251.0 L381.4 252.6 L382.1 254.3 L382.7 255.9 L383.3 257.6 L384.0 259.3 L384.6 260.9 L385.3 262.6 L385.9 264.3 L386.5 265.9 M388.1 244.3 L388.7 246.0 L389.3 247.6 L389.9 249.2 L390.5 250.8 L391.1 252.4 L391.7 254.1 L392.3 255.7 L392.9 257.3 L393.5 258.9 L394.1 260.6 L394.7 262.2 L395.3 263.8 M397.3 242.7 L397.8 244.0 L398.2 245.4 L398.7 246.7 L399.1 248.0 L399.6 249.4 L400.0 250.7 L400.5 252.0 L400.9 253.3 L401.4 254.7 L401.8 256.0 L402.3 257.3 L402.7 258.7 M406.6 241.1 L406.9 242.2 L407.2 243.3 L407.5 244.4 L407.9 245.4 L408.2 246.5 L408.5 247.6 L408.8 248.7 L409.2 249.8 L409.5 250.9 L409.8 252.0 L410.1 253.1 L410.5 254.2 M415.9 240.3 L416.2 241.2 L416.4 242.1 L416.7 243.0 L416.9 244.0 L417.2 244.9 L417.5 245.8 L417.7 246.7 L418.0 247.6 L418.3 248.6 L418.5 249.5 L418.8 250.4 L419.0 251.3 M425.2 239.5 L425.4 240.3 L425.7 241.1 L425.9 241.9 L426.1 242.7 L426.3 243.5 L426.5 244.3 L426.7 245.1 L426.9 245.9 L427.1 246.7 L427.3 247.4 L427.5 248.2 L427.8 249.0 M434.6 238.8 L434.8 239.5 L434.9 240.2 L435.1 240.9 L435.3 241.6 L435.4 242.3 L435.6 243.0 L435.8 243.7 L435.9 244.4 L436.1 245.1 L436.3 245.8 L436.4 246.5 L436.6 247.2 M443.9 238.0 L444.1 238.7 L444.2 239.3 L444.3 239.9 L444.4 240.5 L444.6 241.1 L444.7 241.7 L444.8 242.3 L444.9 243.0 L445.1 243.6 L445.2 244.2 L445.3 244.8 L445.5 245.4 M453.3 237.3 L453.4 237.8 L453.4 238.4 L453.5 238.9 L453.6 239.4 L453.7 239.9 L453.8 240.5 L453.9 241.0 L454.0 241.5 L454.0 242.0 L454.1 242.6 L454.2 243.1 L454.3 243.6 M462.6 237.0 L462.7 237.4 L462.7 237.8 L462.8 238.2 L462.8 238.6 L462.8 239.0 L462.9 239.4 L462.9 239.8 L463.0 240.2 L463.0 240.6 L463.1 241.0 L463.1 241.4 L463.2 241.8 M472.0 237.0 L472.0 237.2 L472.0 237.5 L472.0 237.8 L472.0 238.0 L472.0 238.2 L472.0 238.5 L472.0 238.8 L472.0 239.0 L472.0 239.2 L472.0 239.5 L472.0 239.8 L472.0 240.0" fill="none" stroke="#f4f4f4" stroke-width="0.7" opacity="1"/>
<path d="M318.0 318.0 L320.8 313.7 L324.6 308.0 L327.4 303.7 L330.2 299.4 L333.9 293.6 L337.5 290.0 L341.5 286.8 L346.8 282.5 L350.8 279.3 L354.9 276.1 L360.2 271.9 L365.3 270.8 L370.3 269.7 L376.9 268.1 L381.9 267.0 L386.9 265.8 L393.6 264.3 L398.1 266.1 L402.3 269.0 L408.0 272.8 L412.2 275.7 L416.5 278.6 L422.4 282.0 L427.1 284.1 L431.8 286.1 L438.1 288.9 L442.8 290.9 L447.8 291.9 L454.6 293.1 L459.6 294.0 L464.7 294.9 L471.4 296.2 L476.4 297.1 L481.5 298.0 L488.2 299.2 L493.3 300.1 L498.3 301.1 L505.1 302.3 L510.0 303.6 L514.5 306.1 L520.4 309.5 L525.1 311.1 L530.3 311.4 L537.1 311.7 L542.2 312.0 L547.4 312.3 L554.2 312.6 L559.3 312.9 L564.4 313.2 L571.3 313.5 L576.4 313.8 L581.5 314.5 L587.9 316.8 L592.7 318.5 L597.6 320.3 L604.0 322.5 L608.9 324.3 L613.7 326.0 L620.2 328.3 L625.0 330.0 M318.0 319.4 L321.5 315.3 L326.1 309.8 L329.6 305.6 L333.1 301.8 L338.0 297.6 L342.2 294.9 L346.7 292.6 L352.7 289.4 L357.2 287.0 L361.7 284.7 L367.4 282.3 L372.4 281.8 L377.2 281.5 L383.7 281.0 L388.6 280.7 L393.4 280.4 L399.9 280.0 L404.4 281.7 L408.7 284.3 L414.4 287.7 L418.7 290.2 L423.1 292.7 L429.0 295.8 L433.6 297.8 L438.2 299.7 L444.4 302.3 L449.0 304.3 L453.9 305.5 L460.4 307.0 L465.3 308.2 L470.2 309.3 L476.7 310.8 L481.6 312.0 L486.4 313.1 L492.9 314.7 L497.8 315.8 L502.7 317.0 L509.2 318.5 L514.0 319.9 L518.5 322.1 L524.4 325.2 L529.1 326.8 L534.0 327.5 L540.6 328.4 L545.5 329.1 L550.5 329.8 L557.0 330.7 L562.0 331.4 L566.9 332.1 L573.5 333.0 L578.4 333.7 L583.3 334.7 L589.6 337.0 L594.4 338.6 L599.1 340.3 L605.4 342.5 L610.2 344.1 L614.9 345.8 L621.3 348.0 L626.0 349.7 M318.5 321.1 L322.5 317.3 L327.8 312.3 L331.8 308.5 L335.8 305.2 L341.5 302.5 L346.2 300.8 L351.0 299.3 L357.4 297.2 L362.2 295.7 L366.9 294.3 L372.9 293.4 L377.8 293.5 L382.6 293.9 L388.9 294.4 L393.7 294.8 L398.4 295.2 L404.7 295.7 L409.2 297.4 L413.6 299.7 L419.4 302.6 L423.8 304.9 L428.2 307.1 L434.1 309.9 L438.7 311.8 L443.3 313.7 L449.4 316.2 L454.0 318.0 L458.7 319.4 L465.0 321.3 L469.7 322.6 L474.5 324.0 L480.8 325.7 L485.5 327.1 L490.3 328.4 L496.6 330.2 L501.4 331.5 L506.1 332.9 L512.4 334.7 L517.1 336.2 L521.6 338.2 L527.6 340.9 L532.2 342.5 L537.0 343.6 L543.4 345.0 L548.1 346.1 L552.9 347.1 L559.3 348.5 L564.1 349.6 L568.8 350.6 L575.2 352.0 L580.0 353.1 L584.7 354.3 L591.0 356.5 L595.6 358.1 L600.3 359.8 L606.6 361.9 L611.2 363.5 L615.9 365.1 L622.1 367.3 L626.8 368.9 M319.6 322.9 L323.8 319.7 L329.6 315.4 L333.9 312.2 L338.2 309.6 L344.5 308.4 L349.3 307.6 L354.3 306.9 L360.9 306.0 L365.8 305.3 L370.7 304.9 L376.8 305.3 L381.6 306.0 L386.3 307.0 L392.5 308.2 L397.2 309.2 L401.9 310.1 L408.1 311.4 L412.6 313.2 L417.0 315.2 L422.9 317.8 L427.4 319.8 L431.8 321.8 L437.8 324.4 L442.3 326.2 L446.9 328.0 L453.0 330.4 L457.5 332.2 L462.1 333.8 L468.3 335.9 L472.9 337.4 L477.6 338.9 L483.8 340.9 L488.4 342.4 L493.1 343.9 L499.3 345.8 L503.9 347.3 L508.6 348.8 L514.8 350.8 L519.4 352.4 L523.9 354.3 L529.9 356.7 L534.5 358.4 L539.2 359.7 L545.4 361.5 L550.0 362.9 L554.7 364.2 L560.9 366.0 L565.6 367.4 L570.3 368.7 L576.5 370.5 L581.1 371.9 L585.8 373.3 L591.9 375.5 L596.6 377.1 L601.2 378.7 L607.4 380.8 L612.0 382.4 L616.6 384.0 L622.8 386.1 L627.4 387.7 M321.1 324.9 L325.5 322.5 L331.4 319.2 L335.9 316.8 L340.4 315.1 L346.8 315.2 L351.7 315.4 L356.6 315.5 L363.2 315.7 L368.1 315.9 L372.9 316.4 L379.1 318.0 L383.8 319.3 L388.4 320.7 L394.5 322.5 L399.2 323.9 L403.8 325.3 L409.9 327.2 L414.5 329.0 L419.0 330.8 L425.0 333.2 L429.5 335.0 L434.0 336.8 L440.0 339.2 L444.6 341.0 L449.1 342.7 L455.2 345.1 L459.7 346.8 L464.3 348.5 L470.3 350.8 L474.9 352.4 L479.5 354.0 L485.6 356.2 L490.2 357.8 L494.8 359.4 L500.9 361.6 L505.5 363.2 L510.1 364.8 L516.2 367.0 L520.8 368.6 L525.3 370.4 L531.4 372.7 L535.9 374.3 L540.5 375.9 L546.7 378.0 L551.2 379.6 L555.8 381.2 L562.0 383.3 L566.5 384.9 L571.1 386.5 L577.3 388.6 L581.8 390.2 L586.4 391.8 L592.5 393.9 L597.2 395.5 L601.8 397.1 L607.9 399.2 L612.5 400.8 L617.1 402.3 L623.3 404.4 L627.9 406.0 M323.1 327.1 L327.5 325.7 L333.4 323.7 L337.8 322.3 L342.3 321.5 L348.6 323.0 L353.4 324.0 L358.1 325.1 L364.3 326.5 L369.0 327.5 L373.7 328.9 L379.7 331.5 L384.3 333.3 L388.9 335.0 L395.0 337.3 L399.6 339.0 L404.2 340.7 L410.3 343.0 L414.9 344.8 L419.5 346.5 L425.6 348.7 L430.1 350.4 L434.7 352.1 L440.8 354.3 L445.3 356.1 L449.9 357.8 L456.0 360.1 L460.5 361.8 L465.1 363.6 L471.1 366.0 L475.7 367.7 L480.2 369.4 L486.3 371.7 L490.9 373.4 L495.4 375.1 L501.5 377.4 L506.1 379.1 L510.6 380.9 L516.7 383.1 L521.3 384.8 L525.9 386.5 L532.0 388.7 L536.6 390.4 L541.1 392.1 L547.2 394.4 L551.7 396.2 L556.3 397.9 L562.4 400.3 L566.9 402.0 L571.5 403.8 L577.6 406.1 L582.1 407.9 L586.7 409.6 L592.8 411.8 L597.4 413.4 L602.0 414.9 L608.1 417.0 L612.7 418.6 L617.3 420.2 L623.5 422.3 L628.1 423.9 M325.6 329.6 L329.8 329.3 L335.4 328.9 L339.6 328.6 L343.9 329.0 L349.8 331.7 L354.2 333.7 L358.5 335.6 L364.3 338.2 L368.6 340.1 L372.8 342.3 L378.7 345.7 L383.1 348.0 L387.7 350.0 L393.9 352.5 L398.5 354.4 L403.1 356.3 L409.2 358.9 L413.8 360.6 L418.5 362.3 L424.7 364.4 L429.3 366.0 L433.9 367.6 L440.1 369.8 L444.7 371.6 L449.3 373.3 L455.4 375.5 L460.0 377.3 L464.5 379.1 L470.6 381.5 L475.2 383.3 L479.8 385.1 L485.8 387.4 L490.4 389.2 L495.0 391.0 L501.1 393.3 L505.7 395.1 L510.2 396.9 L516.3 399.3 L520.9 401.0 L525.5 402.6 L531.7 404.8 L536.3 406.5 L540.9 408.3 L547.0 410.8 L551.5 412.7 L556.1 414.5 L562.2 417.0 L566.7 418.8 L571.3 420.7 L577.4 423.2 L581.9 425.0 L586.5 426.8 L592.7 429.0 L597.3 430.6 L601.9 432.2 L608.1 434.4 L612.7 436.0 L617.3 437.6 L623.5 439.7 L628.1 441.3 M328.5 332.2 L332.4 333.3 L337.5 334.7 L341.3 335.8 L345.2 337.4 L350.5 341.3 L354.3 344.2 L358.0 347.1 L363.0 350.8 L366.8 353.7 L370.5 356.7 L376.1 360.8 L380.3 363.5 L384.9 365.6 L391.1 368.2 L395.8 370.2 L400.4 372.2 L406.6 374.8 L411.3 376.6 L416.0 378.2 L422.3 380.3 L427.0 381.9 L431.7 383.5 L437.9 385.7 L442.6 387.4 L447.2 389.1 L453.4 391.4 L458.1 393.1 L462.7 394.9 L468.8 397.4 L473.5 399.2 L478.1 401.0 L484.2 403.4 L488.9 405.2 L493.5 407.0 L499.6 409.4 L504.3 411.2 L508.9 413.0 L515.0 415.4 L519.7 417.2 L524.4 418.8 L530.6 420.9 L535.3 422.7 L539.9 424.6 L546.0 427.1 L550.6 429.0 L555.2 430.9 L561.4 433.4 L566.0 435.3 L570.6 437.2 L576.7 439.7 L581.3 441.6 L586.0 443.5 L592.2 445.7 L596.8 447.4 L601.5 449.0 L607.7 451.2 L612.4 452.8 L617.0 454.5 L623.3 456.7 L627.9 458.3 M332.0 335.0 L335.3 337.7 L339.7 341.2 L343.0 343.9 L346.3 346.8 L350.5 352.0 L353.6 355.7 L356.6 359.5 L360.6 364.5 L363.7 368.2 L366.7 372.1 L371.8 376.7 L375.9 379.8 L380.5 381.8 L386.8 384.3 L391.6 386.3 L396.3 388.2 L402.6 390.8 L407.3 392.5 L412.1 394.2 L418.5 396.4 L423.2 398.0 L428.0 399.7 L434.3 401.9 L439.1 403.6 L443.8 405.3 L450.1 407.6 L454.8 409.3 L459.5 411.1 L465.8 413.6 L470.5 415.4 L475.2 417.1 L481.5 419.5 L486.2 421.3 L490.9 423.1 L497.2 425.5 L501.9 427.3 L506.6 429.1 L512.9 431.5 L517.6 433.3 L522.3 435.0 L528.6 437.2 L533.4 439.0 L538.1 440.8 L544.3 443.3 L549.0 445.2 L553.7 447.1 L560.0 449.6 L564.7 451.4 L569.3 453.3 L575.6 455.8 L580.3 457.7 L585.0 459.5 L591.3 461.8 L596.0 463.5 L600.8 465.2 L607.1 467.5 L611.8 469.2 L616.5 470.9 L622.8 473.2 L627.6 474.9 M336.0 338.0 L338.6 342.4 L342.0 348.4 L344.6 352.8 L347.1 357.3 L350.0 363.5 L352.1 368.2 L354.2 372.9 L357.0 379.1 L359.2 383.8 L361.3 388.5 L365.9 393.4 L369.7 396.8 L374.5 398.6 L381.0 401.0 L385.8 402.7 L390.6 404.5 L397.1 406.8 L401.9 408.5 L406.7 410.3 L413.2 412.6 L418.0 414.4 L422.8 416.1 L429.3 418.4 L434.1 420.2 L438.9 421.9 L445.4 424.3 L450.2 426.0 L455.0 427.7 L461.5 430.1 L466.3 431.8 L471.1 433.6 L477.6 435.9 L482.4 437.6 L487.2 439.4 L493.7 441.7 L498.5 443.5 L503.3 445.2 L509.8 447.6 L514.6 449.4 L519.4 451.2 L525.8 453.6 L530.6 455.3 L535.5 457.1 L541.9 459.5 L546.7 461.3 L551.5 463.1 L557.9 465.4 L562.8 467.2 L567.6 469.0 L574.0 471.4 L578.8 473.2 L583.6 475.0 L590.1 477.3 L594.9 479.1 L599.7 480.9 L606.1 483.3 L610.9 485.1 L615.8 486.8 L622.2 489.2 L627.0 491.0 M318.0 318.0 L318.0 319.1 L318.2 320.2 L318.8 321.5 L319.6 322.9 L320.6 324.4 L322.0 326.0 L323.6 327.7 L325.6 329.6 L327.8 331.5 L330.2 333.6 L333.0 335.7 L336.0 338.0 M324.6 308.0 L325.7 309.3 L327.0 310.9 L328.2 313.0 L329.6 315.4 L330.9 318.2 L332.4 321.4 L333.9 324.9 L335.4 328.9 L337.0 333.2 L338.6 337.9 L340.3 342.9 L342.0 348.4 M331.1 297.9 L333.6 300.0 L335.8 302.5 L337.9 305.7 L339.8 309.3 L341.5 313.6 L343.0 318.4 L344.3 323.7 L345.4 329.6 L346.3 336.1 L347.0 343.1 L347.5 350.7 L347.8 358.8 M338.8 289.0 L342.6 292.8 L345.8 297.1 L348.6 302.0 L351.0 307.4 L352.8 313.3 L354.2 319.8 L355.2 326.8 L355.6 334.3 L355.6 342.4 L355.2 351.0 L354.2 360.1 L352.8 369.8 M349.5 280.4 L354.3 285.9 L358.3 291.9 L361.6 298.4 L364.2 305.5 L366.0 313.2 L367.1 321.4 L367.5 330.2 L367.2 339.5 L366.1 349.3 L364.3 359.7 L361.7 370.7 L358.5 382.2 M358.9 272.9 L364.3 280.3 L368.9 288.1 L372.6 296.4 L375.3 305.1 L377.2 314.4 L378.1 324.1 L378.1 334.3 L377.2 344.9 L375.4 356.0 L372.7 367.6 L369.1 379.7 L364.6 392.3 M370.3 269.7 L375.6 278.5 L380.1 287.6 L383.7 297.1 L386.3 307.0 L388.0 317.2 L388.8 327.8 L388.7 338.7 L387.7 350.0 L385.8 361.6 L382.9 373.6 L379.2 385.9 L374.5 398.6 M381.9 267.0 L387.1 277.3 L391.3 287.7 L394.7 298.4 L397.2 309.2 L398.8 320.2 L399.6 331.4 L399.5 342.8 L398.5 354.4 L396.6 366.2 L393.9 378.2 L390.3 390.4 L385.8 402.7 M393.6 264.3 L398.5 276.1 L402.5 287.8 L405.7 299.6 L408.1 311.4 L409.6 323.3 L410.3 335.1 L410.2 347.0 L409.2 358.9 L407.4 370.8 L404.8 382.8 L401.3 394.8 L397.1 406.8 M403.7 269.9 L408.7 281.3 L412.8 292.8 L416.0 304.3 L418.5 315.8 L420.1 327.5 L420.9 339.2 L420.9 351.0 L420.0 362.8 L418.3 374.7 L415.8 386.7 L412.5 398.7 L408.3 410.9 M413.6 276.7 L418.7 287.4 L422.9 298.3 L426.3 309.3 L428.9 320.5 L430.6 331.8 L431.5 343.2 L431.6 354.8 L430.8 366.6 L429.3 378.4 L426.9 390.5 L423.7 402.6 L419.6 414.9 M425.5 283.4 L430.6 293.6 L434.8 304.1 L438.2 314.7 L440.8 325.6 L442.6 336.6 L443.6 347.9 L443.8 359.3 L443.2 371.0 L441.7 382.8 L439.4 394.9 L436.4 407.1 L432.5 419.6 M436.5 288.2 L441.4 298.3 L445.5 308.6 L448.9 319.1 L451.4 329.8 L453.2 340.8 L454.2 352.0 L454.4 363.4 L453.9 375.0 L452.5 386.8 L450.4 398.9 L447.5 411.2 L443.8 423.7 M447.8 291.9 L452.5 302.0 L456.5 312.4 L459.7 323.0 L462.1 333.8 L463.8 344.8 L464.8 356.0 L465.0 367.4 L464.5 379.1 L463.3 390.9 L461.3 403.0 L458.5 415.3 L455.0 427.7 M459.6 294.0 L464.0 304.6 L467.7 315.4 L470.6 326.3 L472.9 337.4 L474.5 348.6 L475.4 360.0 L475.7 371.6 L475.2 383.3 L474.0 395.2 L472.1 407.2 L469.6 419.4 L466.3 431.8 M471.4 296.2 L475.5 307.2 L478.9 318.3 L481.7 329.5 L483.8 340.9 L485.3 352.3 L486.1 363.9 L486.3 375.6 L485.8 387.4 L484.7 399.4 L483.0 411.4 L480.6 423.6 L477.6 435.9 M483.2 298.3 L486.9 309.7 L490.1 321.2 L492.7 332.7 L494.6 344.4 L496.0 356.0 L496.8 367.8 L496.9 379.7 L496.5 391.6 L495.5 403.6 L493.9 415.6 L491.7 427.8 L488.9 440.0 M495.0 300.4 L498.4 312.3 L501.3 324.1 L503.7 336.0 L505.5 347.8 L506.7 359.8 L507.4 371.7 L507.6 383.7 L507.2 395.7 L506.2 407.8 L504.8 419.8 L502.7 431.9 L500.1 444.0 M508.4 302.9 L511.5 315.2 L514.1 327.4 L516.2 339.6 L517.9 351.8 L519.0 364.0 L519.6 376.2 L519.7 388.3 L519.4 400.5 L518.5 412.6 L517.2 424.7 L515.3 436.7 L513.0 448.8 M518.9 308.7 L522.0 320.5 L524.6 332.3 L526.8 344.2 L528.4 356.1 L529.6 368.1 L530.3 380.1 L530.5 392.1 L530.2 404.2 L529.4 416.4 L528.2 428.5 L526.4 440.7 L524.2 453.0 M530.3 311.4 L533.2 323.5 L535.6 335.5 L537.6 347.6 L539.2 359.7 L540.3 371.9 L540.9 384.0 L541.1 396.2 L540.9 408.3 L540.2 420.5 L539.1 432.7 L537.5 444.9 L535.5 457.1 M542.2 312.0 L544.8 324.8 L546.9 337.6 L548.7 350.3 L550.0 362.9 L551.0 375.4 L551.6 387.9 L551.8 400.3 L551.5 412.7 L550.9 424.9 L549.9 437.1 L548.5 449.2 L546.7 461.3 M554.2 312.6 L556.4 326.2 L558.2 339.7 L559.8 352.9 L560.9 366.0 L561.8 379.0 L562.2 391.8 L562.4 404.5 L562.2 417.0 L561.6 429.3 L560.7 441.5 L559.5 453.6 L557.9 465.4 M566.2 313.3 L568.0 327.6 L569.6 341.7 L570.8 355.6 L571.8 369.2 L572.5 382.6 L572.9 395.7 L573.0 408.6 L572.8 421.3 L572.3 433.7 L571.6 445.9 L570.5 457.9 L569.2 469.6 M578.1 313.9 L579.6 329.0 L580.9 343.8 L581.9 358.2 L582.7 372.3 L583.2 386.2 L583.6 399.6 L583.6 412.8 L583.5 425.6 L583.1 438.2 L582.4 450.3 L581.5 462.2 L580.4 473.8 M591.1 318.0 L592.4 333.1 L593.5 347.9 L594.3 362.4 L595.0 376.6 L595.5 390.4 L595.8 404.0 L595.9 417.2 L595.7 430.1 L595.4 442.7 L594.9 454.9 L594.2 466.9 L593.3 478.5 M602.4 322.0 L603.5 337.0 L604.5 351.7 L605.2 366.1 L605.8 380.3 L606.3 394.1 L606.5 407.7 L606.6 420.9 L606.5 433.8 L606.3 446.5 L605.9 458.9 L605.3 470.9 L604.5 482.7 M613.7 326.0 L614.7 340.9 L615.5 355.5 L616.1 369.9 L616.6 384.0 L617.0 397.8 L617.3 411.3 L617.4 424.6 L617.3 437.6 L617.1 450.3 L616.8 462.8 L616.4 474.9 L615.8 486.8 M625.0 330.0 L625.8 344.8 L626.4 359.3 L627.0 373.6 L627.4 387.7 L627.8 401.5 L628.0 415.0 L628.1 428.3 L628.1 441.3 L628.0 454.1 L627.8 466.7 L627.4 479.0 L627.0 491.0" fill="none" stroke="#f2f2f2" stroke-width="0.6" opacity="0.85"/>
<path d="M625.0 330.0 L630.3 331.1 L637.3 332.5 L642.6 333.5 L647.8 334.6 L654.8 336.0 L660.1 337.0 L665.4 338.1 L672.4 339.5 L677.7 340.5 L682.9 341.6 L690.0 343.0 L695.2 344.0 L700.5 345.2 L706.9 348.4 L711.7 350.8 L716.5 353.2 L722.9 356.4 L727.7 358.8 L732.5 361.2 L738.9 364.4 L743.7 366.8 L748.5 369.3 L754.9 372.5 L759.7 374.9 L764.5 377.3 L770.9 380.5 L775.7 382.9 L780.4 385.4 L785.5 390.5 L789.3 394.3 L793.1 398.1 L798.1 403.1 L801.9 406.9 L805.7 410.7 L810.8 415.8 L814.6 419.6 L818.4 423.4 L823.5 428.5 L827.3 432.3 L831.1 436.1 L835.4 441.5 L836.9 446.7 L838.4 451.9 L840.3 458.8 L841.8 463.9 L843.2 469.1 L845.2 476.0 L846.7 481.2 L848.1 486.3 L850.1 493.2 L851.5 498.4 L851.9 503.7 L851.6 510.8 L851.4 516.2 L851.2 521.6 L850.9 528.7 L850.7 534.1 L850.5 539.5 L850.2 546.6 L850.0 552.0 M625.2 350.1 L629.9 350.6 L636.2 351.3 L640.9 351.9 L645.6 352.4 L651.9 353.1 L656.6 353.6 L661.3 354.2 L667.8 355.0 L672.7 355.5 L677.5 356.1 L684.0 356.9 L688.9 357.5 L693.7 358.3 L699.8 360.8 L704.4 362.8 L709.0 364.7 L715.1 367.2 L719.6 369.2 L724.2 371.1 L730.4 374.0 L735.0 376.2 L739.6 378.4 L745.7 381.3 L750.3 383.4 L754.9 385.6 L761.1 388.5 L765.6 390.9 L770.0 393.4 L774.9 398.1 L778.6 401.7 L782.2 405.2 L787.1 410.0 L790.8 413.5 L794.4 417.1 L799.2 421.9 L802.8 425.6 L806.4 429.2 L811.2 434.1 L814.7 437.7 L818.3 441.4 L822.5 446.6 L824.0 451.4 L825.5 456.3 L827.6 462.8 L829.0 467.6 L830.5 472.5 L832.4 479.1 L833.9 484.0 L835.3 488.9 L837.3 495.4 L838.7 500.3 L839.2 505.3 L839.2 512.1 L839.1 517.2 L839.0 522.2 L838.9 529.0 L838.8 534.1 L838.7 539.2 L838.6 546.0 L838.5 551.1 M625.5 370.2 L629.6 370.2 L635.1 370.2 L639.2 370.2 L643.4 370.2 L648.9 370.2 L653.0 370.2 L657.3 370.2 L663.2 370.4 L667.7 370.6 L672.1 370.7 L678.1 370.9 L682.5 371.0 L687.0 371.3 L692.8 373.2 L697.1 374.7 L701.5 376.1 L707.3 378.0 L711.6 379.5 L715.9 380.9 L721.8 383.6 L726.2 385.5 L730.6 387.5 L736.5 390.1 L740.9 392.0 L745.3 394.0 L751.2 396.6 L755.5 398.9 L759.7 401.3 L764.4 405.7 L767.9 409.1 L771.4 412.4 L776.1 416.8 L779.6 420.1 L783.1 423.5 L787.7 428.0 L791.0 431.5 L794.4 435.0 L798.9 439.7 L802.2 443.2 L805.6 446.7 L809.5 451.6 L811.1 456.2 L812.7 460.7 L814.8 466.7 L816.3 471.4 L817.7 476.0 L819.6 482.1 L821.1 486.8 L822.5 491.4 L824.5 497.6 L825.9 502.2 L826.5 506.9 L826.7 513.3 L826.8 518.1 L826.8 522.9 L826.8 529.3 L826.9 534.2 L826.9 539.0 L827.0 545.4 L827.0 550.2 M625.8 390.4 L629.3 389.8 L634.0 389.1 L637.6 388.6 L641.1 388.0 L645.9 387.3 L649.4 386.7 L653.2 386.3 L658.6 385.9 L662.7 385.6 L666.7 385.3 L672.1 384.8 L676.2 384.5 L680.3 384.4 L685.8 385.7 L689.9 386.6 L694.0 387.6 L699.4 388.8 L703.5 389.8 L707.7 390.8 L713.3 393.1 L717.5 394.8 L721.7 396.6 L727.3 398.9 L731.5 400.6 L735.7 402.4 L741.4 404.7 L745.4 406.9 L749.3 409.2 L753.8 413.3 L757.2 416.4 L760.5 419.5 L765.0 423.7 L768.4 426.8 L771.8 429.8 L776.1 434.1 L779.3 437.5 L782.4 440.8 L786.6 445.3 L789.7 448.6 L792.8 452.0 L796.6 456.7 L798.2 460.9 L799.9 465.1 L802.1 470.7 L803.5 475.1 L804.9 479.4 L806.9 485.2 L808.3 489.6 L809.7 493.9 L811.6 499.7 L813.1 504.1 L813.8 508.5 L814.3 514.5 L814.4 519.0 L814.6 523.6 L814.8 529.6 L815.0 534.2 L815.1 538.8 L815.3 544.8 L815.5 549.4 M626.0 410.5 L629.0 409.4 L633.0 408.0 L635.9 406.9 L638.9 405.8 L642.9 404.4 L645.9 403.3 L649.2 402.4 L654.1 401.4 L657.7 400.6 L661.3 399.8 L666.2 398.8 L669.8 398.0 L673.6 397.4 L678.7 398.1 L682.6 398.5 L686.5 399.0 L691.6 399.6 L695.5 400.1 L699.4 400.6 L704.7 402.7 L708.8 404.2 L712.8 405.7 L718.1 407.7 L722.1 409.2 L726.2 410.7 L731.5 412.8 L735.2 414.9 L738.9 417.2 L743.2 421.0 L746.5 423.8 L749.7 426.7 L754.0 430.5 L757.2 433.4 L760.5 436.2 L764.6 440.2 L767.5 443.4 L770.4 446.6 L774.3 450.9 L777.2 454.1 L780.1 457.3 L783.6 461.8 L785.3 465.6 L787.1 469.5 L789.3 474.7 L790.7 478.8 L792.2 482.9 L794.1 488.3 L795.5 492.4 L796.9 496.5 L798.8 501.9 L800.3 506.0 L801.1 510.1 L801.9 515.7 L802.1 520.0 L802.4 524.2 L802.8 529.9 L803.1 534.2 L803.3 538.5 L803.7 544.2 L804.0 548.5 M626.2 430.6 L628.7 429.0 L631.9 426.9 L634.3 425.3 L636.7 423.6 L639.9 421.5 L642.3 419.9 L645.2 418.5 L649.5 416.8 L652.7 415.6 L655.9 414.4 L660.3 412.7 L663.5 411.5 L666.8 410.5 L671.7 410.5 L675.3 410.5 L679.0 410.4 L683.8 410.4 L687.5 410.4 L691.1 410.5 L696.2 412.2 L700.0 413.5 L703.8 414.8 L708.9 416.5 L712.7 417.8 L716.6 419.1 L721.6 420.8 L725.1 422.9 L728.5 425.1 L732.7 428.6 L735.7 431.2 L738.8 433.8 L743.0 437.3 L746.0 440.0 L749.1 442.6 L753.0 446.4 L755.7 449.4 L758.4 452.4 L761.9 456.5 L764.6 459.6 L767.3 462.6 L770.6 466.8 L772.4 470.4 L774.3 473.9 L776.6 478.7 L778.0 482.5 L779.4 486.3 L781.3 491.4 L782.7 495.2 L784.1 499.0 L786.0 504.1 L787.4 507.9 L788.4 511.7 L789.4 516.9 L789.8 520.9 L790.2 524.9 L790.8 530.3 L791.2 534.3 L791.6 538.3 L792.1 543.6 L792.5 547.6 M626.5 450.8 L628.3 448.6 L630.8 445.7 L632.6 443.6 L634.5 441.5 L636.9 438.6 L638.8 436.5 L641.1 434.5 L644.9 432.3 L647.7 430.6 L650.5 428.9 L654.3 426.7 L657.1 425.0 L660.1 423.6 L664.7 422.9 L668.1 422.4 L671.5 421.9 L676.0 421.2 L679.4 420.7 L682.8 420.4 L687.7 421.8 L691.3 422.8 L694.9 423.9 L699.7 425.3 L703.3 426.4 L707.0 427.5 L711.8 428.9 L715.0 430.9 L718.2 433.0 L722.1 436.2 L725.0 438.6 L728.0 441.0 L731.9 444.2 L734.9 446.6 L737.8 449.0 L741.4 452.5 L743.9 455.4 L746.4 458.3 L749.6 462.1 L752.1 465.0 L754.6 467.9 L757.7 471.9 L759.6 475.1 L761.4 478.3 L763.8 482.7 L765.2 486.2 L766.6 489.8 L768.5 494.5 L769.9 498.0 L771.3 501.5 L773.2 506.2 L774.6 509.7 L775.7 513.3 L777.0 518.1 L777.5 521.8 L778.0 525.6 L778.7 530.6 L779.3 534.3 L779.8 538.0 L780.5 543.0 L781.0 546.8 M626.8 470.9 L628.0 468.2 L629.7 464.6 L631.0 462.0 L632.2 459.3 L633.9 455.7 L635.2 453.0 L637.1 450.6 L640.3 447.8 L642.7 445.6 L645.1 443.5 L648.4 440.6 L650.8 438.5 L653.4 436.6 L657.6 435.3 L660.8 434.3 L664.0 433.3 L668.2 432.0 L671.4 431.0 L674.6 430.2 L679.1 431.3 L682.5 432.2 L686.0 433.0 L690.5 434.1 L694.0 435.0 L697.4 435.8 L701.9 437.0 L704.9 439.0 L707.8 441.0 L711.5 443.8 L714.3 446.0 L717.1 448.1 L720.9 451.0 L723.7 453.2 L726.5 455.3 L729.9 458.6 L732.1 461.3 L734.4 464.1 L737.3 467.7 L739.6 470.5 L741.8 473.2 L744.7 476.9 L746.7 479.8 L748.6 482.7 L751.1 486.7 L752.5 490.0 L753.9 493.2 L755.7 497.5 L757.1 500.8 L758.5 504.1 L760.4 508.4 L761.8 511.6 L763.1 514.9 L764.6 519.3 L765.2 522.8 L765.8 526.2 L766.7 530.9 L767.3 534.3 L768.0 537.8 L768.9 542.4 L769.5 545.9 M627.0 491.0 L627.7 487.8 L628.6 483.5 L629.3 480.3 L630.0 477.1 L631.0 472.8 L631.7 469.6 L633.0 466.7 L635.7 463.2 L637.7 460.6 L639.7 458.1 L642.4 454.6 L644.4 452.0 L646.7 449.7 L650.6 447.7 L653.5 446.2 L656.5 444.8 L660.4 442.8 L663.3 441.3 L666.3 440.1 L670.6 440.9 L673.8 441.5 L677.0 442.1 L681.3 442.9 L684.6 443.6 L687.8 444.2 L692.1 445.1 L694.7 447.0 L697.4 448.9 L701.0 451.5 L703.6 453.4 L706.3 455.3 L709.8 457.8 L712.5 459.8 L715.2 461.7 L718.3 464.7 L720.3 467.3 L722.3 469.9 L725.0 473.3 L727.0 475.9 L729.1 478.5 L731.8 482.0 L733.8 484.6 L735.8 487.2 L738.3 490.7 L739.7 493.7 L741.1 496.7 L743.0 500.6 L744.3 503.6 L745.7 506.6 L747.6 510.6 L749.0 513.5 L750.4 516.5 L752.1 520.5 L752.9 523.7 L753.7 526.9 L754.7 531.2 L755.4 534.4 L756.2 537.5 L757.2 541.8 L758.0 545.0 M625.0 330.0 L625.2 343.4 L625.3 356.8 L625.5 370.2 L625.7 383.7 L625.8 397.1 L626.0 410.5 L626.2 423.9 L626.3 437.3 L626.5 450.8 L626.7 464.2 L626.8 477.6 L627.0 491.0 M646.1 334.2 L644.7 346.2 L643.4 358.2 L642.0 370.2 L640.6 382.2 L639.3 394.2 L637.9 406.2 L636.6 418.2 L635.2 430.2 L633.9 442.2 L632.5 454.2 L631.1 466.2 L629.8 478.2 M668.9 338.8 L666.0 349.3 L663.1 359.8 L660.3 370.3 L657.4 380.8 L654.5 391.4 L651.6 401.9 L648.7 412.4 L645.9 422.9 L643.0 433.4 L640.1 443.9 L637.2 454.5 L634.4 465.0 M691.7 343.3 L687.7 352.5 L683.6 361.7 L679.6 370.9 L675.5 380.1 L671.5 389.3 L667.4 398.5 L663.4 407.7 L659.3 416.9 L655.3 426.1 L651.2 435.3 L647.1 444.5 L643.1 453.7 M711.7 350.8 L706.8 358.8 L702.0 366.7 L697.1 374.7 L692.3 382.6 L687.4 390.6 L682.6 398.5 L677.7 406.5 L672.9 414.4 L668.1 422.4 L663.2 430.3 L658.4 438.3 L653.5 446.2 M730.9 360.4 L725.4 367.1 L719.9 373.8 L714.5 380.4 L709.0 387.1 L703.5 393.7 L698.1 400.4 L692.6 407.1 L687.1 413.7 L681.7 420.4 L676.2 427.0 L670.7 433.7 L665.3 440.4 M751.7 370.9 L745.7 376.8 L739.6 382.8 L733.6 388.8 L727.5 394.7 L721.5 400.7 L715.4 406.7 L709.4 412.7 L703.4 418.6 L697.3 424.6 L691.3 430.6 L685.2 436.6 L679.2 442.5 M772.5 381.3 L765.9 386.6 L759.3 392.0 L752.6 397.4 L746.0 402.7 L739.4 408.1 L732.7 413.5 L726.1 418.8 L719.5 424.2 L712.9 429.6 L706.2 435.0 L699.6 440.3 L693.0 445.7 M789.3 394.3 L782.1 399.2 L775.0 404.1 L767.9 409.1 L760.7 414.0 L753.6 418.9 L746.5 423.8 L739.3 428.8 L732.2 433.7 L725.0 438.6 L717.9 443.5 L710.8 448.4 L703.6 453.4 M804.5 409.5 L797.0 413.8 L789.4 418.1 L781.9 422.4 L774.4 426.7 L766.9 431.0 L759.4 435.3 L751.9 439.6 L744.4 443.9 L736.8 448.2 L729.3 452.5 L721.8 456.8 L714.3 461.0 M820.9 425.9 L812.8 429.7 L804.7 433.5 L796.6 437.4 L788.5 441.2 L780.4 445.0 L772.3 448.8 L764.2 452.6 L756.1 456.4 L748.0 460.2 L739.9 464.0 L731.8 467.8 L723.7 471.6 M835.9 443.3 L827.3 446.6 L818.7 449.9 L810.0 453.2 L801.4 456.5 L792.8 459.7 L784.2 463.0 L775.6 466.3 L766.9 469.6 L758.3 472.9 L749.7 476.2 L741.1 479.5 L732.4 482.8 M841.8 463.9 L833.3 466.4 L824.8 468.9 L816.3 471.4 L807.8 473.8 L799.3 476.3 L790.7 478.8 L782.2 481.3 L773.7 483.8 L765.2 486.2 L756.7 488.7 L748.2 491.2 L739.7 493.7 M847.6 484.6 L839.1 486.4 L830.6 488.1 L822.0 489.9 L813.5 491.6 L805.0 493.3 L796.5 495.1 L787.9 496.8 L779.4 498.6 L770.9 500.3 L762.3 502.1 L753.8 503.8 L745.3 505.6 M851.7 507.3 L843.4 508.2 L835.0 509.1 L826.6 510.1 L818.2 511.0 L809.9 511.9 L801.5 512.9 L793.1 513.8 L784.8 514.8 L776.4 515.7 L768.0 516.6 L759.7 517.6 L751.3 518.5 M850.8 530.5 L842.8 530.7 L834.8 530.8 L826.9 531.0 L818.9 531.1 L810.9 531.2 L802.9 531.4 L794.9 531.5 L786.9 531.7 L778.9 531.8 L770.9 531.9 L762.9 532.1 L754.9 532.2 M850.0 552.0 L842.3 551.4 L834.7 550.8 L827.0 550.2 L819.3 549.7 L811.7 549.1 L804.0 548.5 L796.3 547.9 L788.7 547.3 L781.0 546.8 L773.3 546.2 L765.7 545.6 L758.0 545.0" fill="none" stroke="#f4f4f4" stroke-width="0.65" opacity="0.85"/>
<polyline points="368.0,395.0 500.0,443.0 627.0,490.0" fill="none" stroke="#e9e9e9" stroke-width="2.4" />
<polyline points="369.0,399.0 500.0,447.0 627.0,494.0" fill="none" stroke="#9a9a9a" stroke-width="1" />
<polygon points="370.0,399.0 627.0,494.0 630.0,590.0 615.0,580.0 390.0,472.0" fill="url(#gLower)" />
<defs><linearGradient id="gLower" gradientUnits="userSpaceOnUse" x1="480" y1="440" x2="455" y2="520"><stop offset="0" stop-color="#a6a6a6"/><stop offset="0.45" stop-color="#6a6a6a"/><stop offset="0.62" stop-color="#0a0a0a"/><stop offset="0.8" stop-color="#050505"/><stop offset="0.86" stop-color="#b8b8b8"/><stop offset="1" stop-color="#3a3a3a"/></linearGradient></defs>
<path d="M370.0 399.0 L373.9 400.4 L379.0 402.3 L382.9 403.7 L386.7 405.2 L391.8 407.1 L395.7 408.5 L399.6 409.9 L404.7 411.8 L408.6 413.2 L412.4 414.7 L417.6 416.6 L421.4 418.0 L425.3 419.4 L430.4 421.3 L434.3 422.7 L438.1 424.1 L443.3 426.0 L447.1 427.5 L451.0 428.9 L456.1 430.8 L460.0 432.2 L463.8 433.6 L469.0 435.5 L472.8 437.0 L476.7 438.4 L481.8 440.3 L485.7 441.7 L489.5 443.1 L494.7 445.0 L498.5 446.5 L502.4 447.9 L507.5 449.8 L511.4 451.2 L515.2 452.6 L520.4 454.5 L524.2 456.0 L528.1 457.4 L533.2 459.3 L537.1 460.7 L540.9 462.1 L546.1 464.0 L549.9 465.5 L553.8 466.9 L558.9 468.8 L562.8 470.2 L566.6 471.7 L571.8 473.6 L575.6 475.0 L579.5 476.4 L584.6 478.3 L588.5 479.7 L592.3 481.2 L597.4 483.1 L601.3 484.5 L605.2 485.9 L610.3 487.8 L614.2 489.2 L618.0 490.7 L623.1 492.6 L627.0 494.0 M372.4 407.1 L376.3 408.6 L381.4 410.5 L385.2 412.0 L389.0 413.4 L394.1 415.4 L397.9 416.8 L401.7 418.3 L406.8 420.2 L410.6 421.7 L414.5 423.2 L419.6 425.1 L423.4 426.6 L427.2 428.0 L432.3 430.0 L436.1 431.4 L439.9 432.9 L445.0 434.8 L448.9 436.3 L452.7 437.7 L457.8 439.7 L461.6 441.1 L465.4 442.6 L470.5 444.6 L474.3 446.0 L478.1 447.5 L483.2 449.4 L487.1 450.9 L490.9 452.3 L496.0 454.3 L499.8 455.7 L503.6 457.2 L508.7 459.1 L512.5 460.6 L516.3 462.1 L521.4 464.0 L525.3 465.5 L529.1 466.9 L534.2 468.9 L538.0 470.3 L541.8 471.8 L546.9 473.8 L550.7 475.2 L554.5 476.7 L559.6 478.6 L563.5 480.1 L567.3 481.6 L572.4 483.5 L576.2 485.0 L580.0 486.4 L585.1 488.4 L588.9 489.8 L592.7 491.3 L597.8 493.2 L601.6 494.7 L605.5 496.2 L610.6 498.1 L614.4 499.6 L618.2 501.0 L623.3 503.0 L627.1 504.4 M374.9 415.2 L378.7 416.7 L383.7 418.7 L387.5 420.2 L391.3 421.7 L396.3 423.7 L400.1 425.2 L403.9 426.7 L409.0 428.7 L412.7 430.2 L416.5 431.7 L421.6 433.6 L425.4 435.1 L429.1 436.6 L434.2 438.6 L438.0 440.1 L441.8 441.6 L446.8 443.6 L450.6 445.1 L454.4 446.6 L459.4 448.6 L463.2 450.1 L467.0 451.6 L472.0 453.6 L475.8 455.1 L479.6 456.6 L484.7 458.5 L488.5 460.0 L492.2 461.5 L497.3 463.5 L501.1 465.0 L504.9 466.5 L509.9 468.5 L513.7 470.0 L517.5 471.5 L522.5 473.5 L526.3 475.0 L530.1 476.5 L535.1 478.5 L538.9 480.0 L542.7 481.5 L547.7 483.5 L551.5 485.0 L555.3 486.5 L560.4 488.5 L564.1 490.0 L567.9 491.4 L573.0 493.4 L576.8 494.9 L580.5 496.4 L585.6 498.4 L589.4 499.9 L593.2 501.4 L598.2 503.4 L602.0 504.9 L605.8 506.4 L610.8 508.4 L614.6 509.9 L618.4 511.4 L623.4 513.4 L627.2 514.9 M377.3 423.3 L381.1 424.9 L386.1 426.9 L389.8 428.4 L393.6 430.0 L398.6 432.0 L402.3 433.5 L406.1 435.1 L411.1 437.1 L414.8 438.6 L418.6 440.2 L423.6 442.2 L427.3 443.7 L431.1 445.2 L436.1 447.3 L439.8 448.8 L443.6 450.3 L448.6 452.4 L452.3 453.9 L456.1 455.4 L461.1 457.5 L464.8 459.0 L468.6 460.5 L473.6 462.6 L477.3 464.1 L481.1 465.6 L486.1 467.7 L489.8 469.2 L493.6 470.7 L498.6 472.8 L502.3 474.3 L506.1 475.8 L511.1 477.9 L514.8 479.4 L518.6 480.9 L523.6 483.0 L527.3 484.5 L531.1 486.0 L536.1 488.1 L539.8 489.6 L543.6 491.1 L548.6 493.2 L552.3 494.7 L556.1 496.2 L561.1 498.3 L564.8 499.8 L568.6 501.3 L573.6 503.4 L577.3 504.9 L581.1 506.5 L586.1 508.5 L589.8 510.0 L593.6 511.6 L598.6 513.6 L602.3 515.1 L606.1 516.7 L611.1 518.7 L614.8 520.2 L618.6 521.8 L623.6 523.8 L627.3 525.3 M379.8 431.4 L383.5 433.0 L388.4 435.1 L392.2 436.7 L395.9 438.2 L400.8 440.3 L404.5 441.9 L408.3 443.4 L413.2 445.5 L416.9 447.1 L420.6 448.7 L425.6 450.7 L429.3 452.3 L433.0 453.9 L438.0 456.0 L441.7 457.5 L445.4 459.1 L450.4 461.2 L454.1 462.7 L457.8 464.3 L462.8 466.4 L466.5 467.9 L470.2 469.5 L475.1 471.6 L478.9 473.2 L482.6 474.7 L487.5 476.8 L491.2 478.4 L495.0 479.9 L499.9 482.0 L503.6 483.6 L507.3 485.1 L512.3 487.2 L516.0 488.8 L519.7 490.4 L524.7 492.5 L528.4 494.0 L532.1 495.6 L537.1 497.7 L540.8 499.2 L544.5 500.8 L549.4 502.9 L553.2 504.5 L556.9 506.0 L561.8 508.1 L565.5 509.7 L569.2 511.2 L574.2 513.3 L577.9 514.9 L581.6 516.5 L586.6 518.6 L590.3 520.1 L594.0 521.7 L599.0 523.8 L602.7 525.3 L606.4 526.9 L611.3 529.0 L615.1 530.6 L618.8 532.1 L623.7 534.2 L627.4 535.8 M382.2 439.6 L385.9 441.2 L390.8 443.3 L394.5 444.9 L398.2 446.5 L403.1 448.6 L406.8 450.2 L410.4 451.8 L415.3 453.9 L419.0 455.5 L422.7 457.1 L427.6 459.3 L431.3 460.9 L435.0 462.5 L439.9 464.6 L443.6 466.2 L447.2 467.8 L452.1 469.9 L455.8 471.5 L459.5 473.1 L464.4 475.3 L468.1 476.9 L471.8 478.5 L476.7 480.6 L480.4 482.2 L484.0 483.8 L488.9 485.9 L492.6 487.5 L496.3 489.1 L501.2 491.3 L504.9 492.9 L508.6 494.5 L513.5 496.6 L517.2 498.2 L520.8 499.8 L525.7 501.9 L529.4 503.5 L533.1 505.1 L538.0 507.3 L541.7 508.9 L545.4 510.5 L550.3 512.6 L554.0 514.2 L557.6 515.8 L562.5 517.9 L566.2 519.5 L569.9 521.1 L574.8 523.3 L578.5 524.9 L582.2 526.5 L587.1 528.6 L590.8 530.2 L594.4 531.8 L599.3 534.0 L603.0 535.6 L606.7 537.2 L611.6 539.3 L615.3 540.9 L619.0 542.5 L623.9 544.6 L627.6 546.2 M384.7 447.7 L388.3 449.3 L393.2 451.5 L396.8 453.1 L400.5 454.7 L405.3 456.9 L409.0 458.6 L412.6 460.2 L417.5 462.4 L421.1 464.0 L424.8 465.6 L429.6 467.8 L433.3 469.5 L436.9 471.1 L441.8 473.3 L445.4 474.9 L449.1 476.5 L453.9 478.7 L457.6 480.4 L461.2 482.0 L466.1 484.2 L469.7 485.8 L473.4 487.4 L478.2 489.6 L481.9 491.3 L485.5 492.9 L490.4 495.1 L494.0 496.7 L497.7 498.3 L502.5 500.5 L506.2 502.2 L509.8 503.8 L514.7 506.0 L518.3 507.6 L522.0 509.2 L526.8 511.4 L530.5 513.1 L534.1 514.7 L539.0 516.9 L542.6 518.5 L546.3 520.1 L551.1 522.3 L554.8 524.0 L558.4 525.6 L563.3 527.8 L566.9 529.4 L570.6 531.0 L575.4 533.2 L579.1 534.9 L582.7 536.5 L587.6 538.7 L591.2 540.3 L594.9 541.9 L599.7 544.1 L603.4 545.8 L607.0 547.4 L611.9 549.6 L615.5 551.2 L619.2 552.9 L624.0 555.0 L627.7 556.7 M387.1 455.8 L390.7 457.4 L395.5 459.7 L399.1 461.3 L402.8 463.0 L407.6 465.2 L411.2 466.9 L414.8 468.6 L419.6 470.8 L423.2 472.5 L426.8 474.1 L431.6 476.4 L435.2 478.0 L438.9 479.7 L443.7 481.9 L447.3 483.6 L450.9 485.3 L455.7 487.5 L459.3 489.2 L462.9 490.8 L467.7 493.1 L471.3 494.7 L475.0 496.4 L479.8 498.6 L483.4 500.3 L487.0 502.0 L491.8 504.2 L495.4 505.9 L499.0 507.5 L503.8 509.8 L507.4 511.4 L511.1 513.1 L515.9 515.3 L519.5 517.0 L523.1 518.7 L527.9 520.9 L531.5 522.6 L535.1 524.2 L539.9 526.5 L543.5 528.1 L547.2 529.8 L552.0 532.0 L555.6 533.7 L559.2 535.4 L564.0 537.6 L567.6 539.3 L571.2 540.9 L576.0 543.2 L579.6 544.8 L583.3 546.5 L588.1 548.7 L591.7 550.4 L595.3 552.1 L600.1 554.3 L603.7 556.0 L607.3 557.6 L612.1 559.9 L615.7 561.5 L619.4 563.2 L624.2 565.4 L627.8 567.1 M389.6 463.9 L393.1 465.6 L397.9 467.9 L401.5 469.6 L405.0 471.3 L409.8 473.5 L413.4 475.3 L417.0 477.0 L421.7 479.2 L425.3 480.9 L428.9 482.6 L433.6 484.9 L437.2 486.6 L440.8 488.3 L445.6 490.6 L449.1 492.3 L452.7 494.0 L457.5 496.3 L461.1 498.0 L464.6 499.7 L469.4 502.0 L473.0 503.7 L476.5 505.4 L481.3 507.6 L484.9 509.4 L488.5 511.1 L493.2 513.3 L496.8 515.0 L500.4 516.7 L505.1 519.0 L508.7 520.7 L512.3 522.4 L517.1 524.7 L520.6 526.4 L524.2 528.1 L529.0 530.4 L532.6 532.1 L536.1 533.8 L540.9 536.1 L544.5 537.8 L548.0 539.5 L552.8 541.7 L556.4 543.5 L560.0 545.2 L564.7 547.4 L568.3 549.1 L571.9 550.8 L576.6 553.1 L580.2 554.8 L583.8 556.5 L588.6 558.8 L592.1 560.5 L595.7 562.2 L600.5 564.5 L604.1 566.2 L607.6 567.9 L612.4 570.2 L616.0 571.9 L619.5 573.6 L624.3 575.9 L627.9 577.6 M392.0 472.0 L395.5 473.7 L400.3 476.1 L403.8 477.8 L407.3 479.5 L412.1 481.9 L415.6 483.6 L419.1 485.3 L423.9 487.7 L427.4 489.4 L430.9 491.1 L435.7 493.5 L439.2 495.2 L442.7 496.9 L447.5 499.3 L451.0 501.0 L454.5 502.7 L459.3 505.1 L462.8 506.8 L466.3 508.5 L471.1 510.9 L474.6 512.6 L478.1 514.3 L482.9 516.7 L486.4 518.4 L489.9 520.1 L494.7 522.5 L498.2 524.2 L501.7 525.9 L506.5 528.3 L510.0 530.0 L513.5 531.7 L518.3 534.1 L521.8 535.8 L525.3 537.5 L530.1 539.9 L533.6 541.6 L537.1 543.3 L541.9 545.7 L545.4 547.4 L548.9 549.1 L553.7 551.5 L557.2 553.2 L560.7 554.9 L565.5 557.3 L569.0 559.0 L572.5 560.7 L577.3 563.1 L580.8 564.8 L584.3 566.5 L589.1 568.9 L592.6 570.6 L596.1 572.3 L600.9 574.7 L604.4 576.4 L607.9 578.1 L612.7 580.5 L616.2 582.2 L619.7 583.9 L624.5 586.3 L628.0 588.0 M370.0 399.0 L371.8 405.1 L373.7 411.2 L375.5 417.2 L377.3 423.3 L379.2 429.4 L381.0 435.5 L382.8 441.6 L384.7 447.7 L386.5 453.8 L388.3 459.8 L390.2 465.9 L392.0 472.0 M382.9 403.7 L384.6 409.9 L386.3 416.1 L388.1 422.3 L389.8 428.4 L391.6 434.6 L393.3 440.8 L395.1 446.9 L396.8 453.1 L398.6 459.3 L400.3 465.5 L402.1 471.6 L403.8 477.8 M395.7 408.5 L397.4 414.7 L399.0 421.0 L400.7 427.3 L402.3 433.5 L404.0 439.8 L405.7 446.0 L407.3 452.3 L409.0 458.6 L410.6 464.8 L412.3 471.1 L413.9 477.3 L415.6 483.6 M408.6 413.2 L410.1 419.6 L411.7 425.9 L413.3 432.3 L414.8 438.6 L416.4 445.0 L418.0 451.3 L419.5 457.7 L421.1 464.0 L422.7 470.4 L424.3 476.7 L425.8 483.1 L427.4 489.4 M421.4 418.0 L422.9 424.4 L424.4 430.9 L425.9 437.3 L427.3 443.7 L428.8 450.2 L430.3 456.6 L431.8 463.0 L433.3 469.5 L434.8 475.9 L436.2 482.3 L437.7 488.8 L439.2 495.2 M434.3 422.7 L435.7 429.2 L437.0 435.8 L438.4 442.3 L439.8 448.8 L441.2 455.3 L442.6 461.9 L444.0 468.4 L445.4 474.9 L446.8 481.4 L448.2 488.0 L449.6 494.5 L451.0 501.0 M447.1 427.5 L448.4 434.1 L449.7 440.7 L451.0 447.3 L452.3 453.9 L453.6 460.5 L455.0 467.1 L456.3 473.7 L457.6 480.4 L458.9 487.0 L460.2 493.6 L461.5 500.2 L462.8 506.8 M460.0 432.2 L461.2 438.9 L462.4 445.6 L463.6 452.3 L464.8 459.0 L466.1 465.7 L467.3 472.4 L468.5 479.1 L469.7 485.8 L470.9 492.5 L472.2 499.2 L473.4 505.9 L474.6 512.6 M472.8 437.0 L473.9 443.7 L475.1 450.5 L476.2 457.3 L477.3 464.1 L478.5 470.9 L479.6 477.7 L480.7 484.5 L481.9 491.3 L483.0 498.0 L484.1 504.8 L485.3 511.6 L486.4 518.4 M485.7 441.7 L486.7 448.6 L487.8 455.5 L488.8 462.3 L489.8 469.2 L490.9 476.1 L491.9 483.0 L493.0 489.8 L494.0 496.7 L495.1 503.6 L496.1 510.5 L497.2 517.3 L498.2 524.2 M498.5 446.5 L499.5 453.4 L500.4 460.4 L501.4 467.3 L502.3 474.3 L503.3 481.3 L504.3 488.2 L505.2 495.2 L506.2 502.2 L507.1 509.1 L508.1 516.1 L509.0 523.0 L510.0 530.0 M511.4 451.2 L512.2 458.3 L513.1 465.3 L514.0 472.4 L514.8 479.4 L515.7 486.5 L516.6 493.5 L517.5 500.6 L518.3 507.6 L519.2 514.7 L520.1 521.7 L520.9 528.8 L521.8 535.8 M524.2 456.0 L525.0 463.1 L525.8 470.2 L526.6 477.4 L527.3 484.5 L528.1 491.6 L528.9 498.8 L529.7 505.9 L530.5 513.1 L531.3 520.2 L532.0 527.3 L532.8 534.5 L533.6 541.6 M537.1 460.7 L537.8 467.9 L538.5 475.2 L539.1 482.4 L539.8 489.6 L540.5 496.8 L541.2 504.1 L541.9 511.3 L542.6 518.5 L543.3 525.7 L544.0 533.0 L544.7 540.2 L545.4 547.4 M549.9 465.5 L550.5 472.8 L551.1 480.1 L551.7 487.4 L552.3 494.7 L552.9 502.0 L553.6 509.3 L554.2 516.6 L554.8 524.0 L555.4 531.3 L556.0 538.6 L556.6 545.9 L557.2 553.2 M562.8 470.2 L563.3 477.6 L563.8 485.0 L564.3 492.4 L564.8 499.8 L565.4 507.2 L565.9 514.6 L566.4 522.0 L566.9 529.4 L567.4 536.8 L568.0 544.2 L568.5 551.6 L569.0 559.0 M575.6 475.0 L576.0 482.5 L576.5 490.0 L576.9 497.4 L577.3 504.9 L577.8 512.4 L578.2 519.9 L578.6 527.4 L579.1 534.9 L579.5 542.3 L579.9 549.8 L580.4 557.3 L580.8 564.8 M588.5 479.7 L588.8 487.3 L589.1 494.9 L589.5 502.5 L589.8 510.0 L590.2 517.6 L590.5 525.2 L590.9 532.7 L591.2 540.3 L591.6 547.9 L591.9 555.5 L592.3 563.0 L592.6 570.6 M601.3 484.5 L601.6 492.1 L601.8 499.8 L602.1 507.5 L602.3 515.1 L602.6 522.8 L602.9 530.4 L603.1 538.1 L603.4 545.8 L603.6 553.4 L603.9 561.1 L604.1 568.7 L604.4 576.4 M614.2 489.2 L614.3 497.0 L614.5 504.7 L614.7 512.5 L614.8 520.2 L615.0 528.0 L615.2 535.7 L615.3 543.5 L615.5 551.2 L615.7 559.0 L615.9 566.7 L616.0 574.5 L616.2 582.2 M627.0 494.0 L627.1 501.8 L627.2 509.7 L627.2 517.5 L627.3 525.3 L627.4 533.2 L627.5 541.0 L627.6 548.8 L627.7 556.7 L627.8 564.5 L627.8 572.3 L627.9 580.2 L628.0 588.0" fill="none" stroke="#ececec" stroke-width="0.6" opacity="1"/>
<polyline points="397.0,472.0 602.0,560.0 628.0,585.0" fill="none" stroke="#dcdcdc" stroke-width="1.6" />
<polyline points="390.0,474.0 615.0,582.0 660.0,610.0" fill="none" stroke="#f0f0f0" stroke-width="1" />
<polygon points="395.0,263.0 408.0,255.0 423.0,250.0 450.0,244.0 472.0,240.0 472.0,225.0 476.0,215.0 485.0,211.0 543.0,208.0 547.0,192.0 556.0,200.0 580.0,312.0 577.0,313.0 523.0,311.0 509.0,302.0 470.0,296.0 443.0,290.0 420.0,280.0 402.0,270.0" fill="#000" />
<path d="M395.0 263.0 L396.1 262.5 L397.6 261.8 L398.7 261.3 L399.8 260.8 L401.2 260.1 L402.3 259.6 L403.4 259.1 L404.9 258.4 L406.0 257.9 L407.1 257.4 L408.6 256.7 L409.7 256.2 L410.8 255.7 L412.2 255.0 L413.3 254.5 L414.4 254.0 L415.9 253.3 L417.0 252.8 L418.1 252.3 L419.6 251.6 L420.7 251.1 L421.8 250.6 L423.3 249.9 L424.5 249.7 L425.6 249.5 L427.2 249.1 L428.4 248.9 L429.6 248.7 L431.2 248.3 L432.4 248.1 L433.6 247.8 L435.2 247.5 L436.3 247.3 L437.5 247.0 L439.1 246.7 L440.3 246.5 L441.5 246.2 L443.1 245.9 L444.3 245.7 L445.5 245.4 L447.0 245.1 L448.2 244.9 L449.4 244.6 L451.0 244.3 L452.2 244.0 L453.4 243.8 L455.0 243.5 L456.2 243.2 L457.3 243.0 L458.9 242.7 L460.1 242.4 L461.3 242.2 L462.9 241.9 L464.1 241.6 L465.3 241.4 L466.8 241.1 L468.0 240.8 L469.2 240.6 L470.8 240.2 L472.0 240.0 M396.4 264.4 L397.5 264.1 L399.0 263.7 L400.1 263.4 L401.2 263.1 L402.7 262.7 L403.8 262.4 L404.9 262.1 L406.3 261.7 L407.4 261.4 L408.5 261.1 L410.0 260.7 L411.1 260.4 L412.2 260.1 L413.7 259.7 L414.8 259.4 L415.9 259.1 L417.4 258.7 L418.5 258.4 L419.6 258.1 L421.1 257.7 L422.2 257.4 L423.3 257.1 L424.8 256.8 L425.9 256.7 L427.1 256.6 L428.7 256.5 L429.9 256.4 L431.0 256.3 L432.6 256.2 L433.8 256.1 L434.9 256.0 L436.5 255.9 L437.7 255.8 L438.9 255.7 L440.5 255.5 L441.7 255.3 L442.9 255.2 L444.5 255.0 L445.7 254.8 L446.9 254.6 L448.5 254.4 L449.7 254.3 L450.9 254.1 L452.5 253.9 L453.6 253.8 L454.8 253.6 L456.4 253.4 L457.6 253.3 L458.8 253.1 L460.4 252.9 L461.6 252.7 L462.8 252.6 L464.4 252.4 L465.6 252.2 L466.8 252.1 L468.4 251.9 L469.6 251.7 L470.8 251.6 L472.4 251.4 L473.6 251.2 M397.8 265.8 L398.9 265.7 L400.4 265.6 L401.5 265.5 L402.6 265.4 L404.1 265.3 L405.2 265.2 L406.3 265.1 L407.8 265.0 L408.9 264.9 L410.0 264.8 L411.5 264.7 L412.6 264.6 L413.7 264.5 L415.2 264.4 L416.3 264.3 L417.4 264.2 L418.9 264.1 L420.0 264.0 L421.1 264.0 L422.6 263.8 L423.7 263.7 L424.8 263.7 L426.3 263.6 L427.4 263.7 L428.6 263.7 L430.1 263.8 L431.3 263.9 L432.5 264.0 L434.0 264.1 L435.2 264.1 L436.3 264.2 L437.9 264.3 L439.0 264.4 L440.2 264.3 L441.9 264.2 L443.1 264.2 L444.3 264.1 L445.9 264.0 L447.1 263.9 L448.3 263.9 L449.9 263.8 L451.1 263.7 L452.3 263.6 L453.9 263.6 L455.1 263.5 L456.3 263.4 L457.9 263.3 L459.1 263.3 L460.3 263.2 L461.9 263.1 L463.1 263.1 L464.4 263.0 L466.0 262.9 L467.2 262.8 L468.4 262.8 L470.0 262.7 L471.2 262.6 L472.4 262.6 L474.0 262.5 L475.2 262.4 M399.2 267.2 L400.3 267.3 L401.8 267.5 L402.9 267.6 L404.0 267.7 L405.5 267.9 L406.6 268.0 L407.7 268.1 L409.2 268.3 L410.3 268.4 L411.4 268.6 L412.9 268.7 L414.0 268.8 L415.1 269.0 L416.6 269.1 L417.7 269.3 L418.9 269.4 L420.3 269.5 L421.4 269.7 L422.6 269.8 L424.0 270.0 L425.2 270.1 L426.3 270.2 L427.8 270.4 L428.9 270.6 L430.1 270.9 L431.6 271.2 L432.7 271.4 L433.9 271.6 L435.4 271.9 L436.6 272.2 L437.7 272.4 L439.2 272.7 L440.4 272.9 L441.6 272.9 L443.2 273.0 L444.4 273.0 L445.6 273.0 L447.3 273.0 L448.5 273.1 L449.7 273.1 L451.3 273.1 L452.5 273.1 L453.7 273.2 L455.4 273.2 L456.6 273.2 L457.8 273.2 L459.4 273.3 L460.6 273.3 L461.8 273.3 L463.4 273.4 L464.7 273.4 L465.9 273.4 L467.5 273.4 L468.7 273.4 L469.9 273.5 L471.5 273.5 L472.8 273.5 L474.0 273.5 L475.6 273.6 L476.8 273.6 M400.6 268.6 L401.7 268.9 L403.2 269.4 L404.3 269.7 L405.4 270.1 L406.9 270.5 L408.0 270.8 L409.2 271.2 L410.6 271.6 L411.8 272.0 L412.9 272.3 L414.4 272.7 L415.5 273.1 L416.6 273.4 L418.1 273.8 L419.2 274.2 L420.3 274.5 L421.8 275.0 L422.9 275.3 L424.0 275.6 L425.5 276.1 L426.6 276.4 L427.8 276.8 L429.3 277.2 L430.4 277.6 L431.5 278.0 L433.0 278.5 L434.2 278.9 L435.3 279.3 L436.8 279.8 L438.0 280.2 L439.1 280.6 L440.6 281.1 L441.7 281.5 L443.0 281.6 L444.6 281.7 L445.8 281.8 L447.0 281.9 L448.7 282.1 L449.9 282.2 L451.1 282.3 L452.7 282.5 L454.0 282.6 L455.2 282.7 L456.8 282.8 L458.0 282.9 L459.3 283.1 L460.9 283.2 L462.1 283.3 L463.3 283.4 L465.0 283.6 L466.2 283.7 L467.4 283.8 L469.0 283.9 L470.3 284.1 L471.5 284.2 L473.1 284.3 L474.3 284.4 L475.5 284.5 L477.2 284.7 L478.4 284.8 M402.0 270.0 L403.1 270.5 L404.6 271.3 L405.7 271.8 L406.9 272.4 L408.3 273.1 L409.5 273.6 L410.6 274.2 L412.1 274.9 L413.2 275.5 L414.3 276.0 L415.8 276.7 L416.9 277.3 L418.1 277.8 L419.6 278.6 L420.7 279.1 L421.8 279.7 L423.3 280.4 L424.4 280.9 L425.5 281.5 L427.0 282.2 L428.1 282.8 L429.3 283.3 L430.8 284.0 L431.9 284.6 L433.0 285.1 L434.5 285.8 L435.6 286.4 L436.7 286.9 L438.2 287.7 L439.3 288.2 L440.5 288.8 L442.0 289.5 L443.1 290.0 L444.3 290.2 L446.0 290.5 L447.2 290.7 L448.4 290.9 L450.1 291.1 L451.3 291.3 L452.5 291.5 L454.2 291.8 L455.4 292.0 L456.6 292.2 L458.3 292.5 L459.5 292.7 L460.7 292.9 L462.4 293.1 L463.6 293.3 L464.8 293.5 L466.5 293.8 L467.7 294.0 L468.9 294.2 L470.6 294.5 L471.8 294.7 L473.0 294.9 L474.7 295.1 L475.9 295.3 L477.1 295.5 L478.8 295.8 L480.0 296.0 M395.0 263.0 L395.6 263.6 L396.2 264.2 L396.8 264.8 L397.3 265.3 L397.9 265.9 L398.5 266.5 L399.1 267.1 L399.7 267.7 L400.2 268.2 L400.8 268.8 L401.4 269.4 L402.0 270.0 M401.6 259.9 L402.2 261.0 L402.8 262.2 L403.4 263.3 L404.0 264.4 L404.6 265.5 L405.2 266.6 L405.8 267.7 L406.3 268.8 L406.9 269.9 L407.5 271.1 L408.1 272.2 L408.7 273.3 M408.2 256.9 L408.8 258.5 L409.4 260.2 L410.0 261.8 L410.6 263.4 L411.2 265.1 L411.8 266.7 L412.4 268.4 L413.0 270.0 L413.6 271.6 L414.2 273.3 L414.8 274.9 L415.4 276.6 M415.2 253.6 L415.8 255.8 L416.4 258.0 L417.0 260.2 L417.6 262.4 L418.2 264.6 L418.9 266.8 L419.5 269.0 L420.1 271.2 L420.7 273.4 L421.3 275.6 L421.9 277.8 L422.5 280.0 M421.8 250.6 L422.4 253.3 L423.0 256.0 L423.6 258.8 L424.3 261.5 L424.9 264.2 L425.5 266.9 L426.1 269.7 L426.8 272.4 L427.4 275.1 L428.0 277.8 L428.6 280.6 L429.3 283.3 M428.8 248.8 L429.4 252.0 L430.0 255.1 L430.6 258.3 L431.2 261.4 L431.8 264.5 L432.4 267.7 L433.0 270.8 L433.6 274.0 L434.2 277.1 L434.8 280.3 L435.4 283.4 L436.0 286.6 M435.9 247.4 L436.5 250.9 L437.1 254.4 L437.6 258.0 L438.2 261.5 L438.8 265.1 L439.3 268.6 L439.9 272.1 L440.5 275.7 L441.0 279.2 L441.6 282.8 L442.1 286.3 L442.7 289.9 M443.1 245.9 L443.7 249.7 L444.2 253.4 L444.8 257.2 L445.4 261.0 L446.0 264.8 L446.6 268.5 L447.1 272.3 L447.7 276.1 L448.3 279.8 L448.9 283.6 L449.5 287.4 L450.1 291.1 M450.2 244.4 L450.8 248.4 L451.4 252.4 L452.0 256.4 L452.6 260.4 L453.2 264.4 L453.8 268.4 L454.4 272.4 L455.0 276.4 L455.6 280.4 L456.2 284.4 L456.8 288.4 L457.4 292.3 M457.7 242.9 L458.4 247.1 L459.0 251.4 L459.6 255.6 L460.2 259.8 L460.9 264.0 L461.5 268.3 L462.1 272.5 L462.7 276.7 L463.4 280.9 L464.0 285.2 L464.6 289.4 L465.2 293.6 M464.9 241.5 L465.5 245.9 L466.2 250.3 L466.8 254.8 L467.5 259.2 L468.1 263.7 L468.7 268.1 L469.4 272.6 L470.0 277.0 L470.7 281.5 L471.3 285.9 L472.0 290.4 L472.6 294.8 M472.0 240.0 L472.7 244.7 L473.3 249.3 L474.0 254.0 L474.7 258.7 L475.3 263.3 L476.0 268.0 L476.7 272.7 L477.3 277.3 L478.0 282.0 L478.7 286.7 L479.3 291.3 L480.0 296.0" fill="none" stroke="#e0e0e0" stroke-width="0.55" opacity="1"/>
<path d="M473.0 222.0 L473.8 221.2 L474.9 220.2 L475.7 219.5 L476.6 218.7 L477.7 217.7 L478.5 217.0 L479.3 216.2 L480.4 215.2 L481.2 214.5 L482.0 213.7 L483.1 212.7 L484.0 212.0 L484.8 211.2 L486.2 210.9 L487.3 210.9 L488.4 210.8 L489.9 210.7 L491.0 210.7 L492.1 210.6 L493.6 210.6 L494.7 210.5 L495.8 210.4 L497.3 210.4 L498.4 210.3 L499.6 210.2 L501.0 210.2 L502.2 210.1 L503.3 210.1 L504.8 210.0 L505.9 209.9 L507.0 209.9 L508.5 209.8 L509.6 209.7 L510.7 209.7 L512.2 209.6 L513.3 209.5 L514.4 209.5 L515.9 209.4 L517.0 209.3 L518.1 209.3 L519.6 209.2 L520.7 209.2 L521.8 209.1 L523.3 209.0 L524.4 209.0 L525.5 208.9 L527.0 208.8 L528.1 208.8 L529.3 208.7 L530.7 208.6 L531.9 208.6 L533.0 208.5 L534.5 208.4 L535.6 208.4 L536.7 208.3 L538.2 208.2 L539.3 208.2 L540.4 208.1 L541.9 208.1 L543.0 208.0 M470.8 234.0 L471.7 233.5 L472.9 232.7 L473.8 232.1 L474.7 231.5 L475.9 230.7 L476.8 230.1 L477.7 229.6 L478.9 228.8 L479.8 228.2 L480.7 227.6 L481.9 226.8 L482.8 226.3 L483.7 225.7 L485.1 225.3 L486.2 225.2 L487.2 225.0 L488.7 224.8 L489.8 224.7 L490.8 224.5 L492.3 224.3 L493.3 224.1 L494.4 224.0 L495.9 223.8 L496.9 223.6 L498.0 223.4 L499.4 223.2 L500.5 223.1 L501.6 222.9 L503.0 222.8 L504.1 222.8 L505.2 222.8 L506.7 222.8 L507.8 222.8 L508.8 222.8 L510.3 222.8 L511.4 222.8 L512.5 222.8 L513.9 222.7 L515.0 222.7 L516.1 222.7 L517.6 222.6 L518.7 222.6 L519.8 222.6 L521.2 222.5 L522.3 222.5 L523.4 222.5 L524.9 222.4 L526.0 222.4 L527.1 222.4 L528.6 222.3 L529.7 222.3 L530.8 222.3 L532.2 222.2 L533.3 222.2 L534.4 222.2 L535.9 222.1 L537.0 222.1 L538.1 222.1 L539.5 222.0 L540.6 222.0 M469.7 245.6 L470.6 245.2 L471.9 244.6 L472.8 244.2 L473.8 243.7 L475.0 243.2 L476.0 242.7 L476.9 242.3 L478.2 241.7 L479.1 241.3 L480.1 240.9 L481.3 240.3 L482.3 239.9 L483.2 239.4 L484.6 239.1 L485.6 238.9 L486.6 238.7 L488.0 238.4 L489.0 238.2 L490.1 238.0 L491.4 237.7 L492.5 237.5 L493.5 237.2 L494.9 236.9 L495.9 236.7 L496.9 236.5 L498.3 236.2 L499.4 236.0 L500.4 235.8 L501.8 235.7 L502.8 235.7 L503.9 235.8 L505.3 235.8 L506.3 235.8 L507.4 235.9 L508.8 235.9 L509.8 236.0 L510.9 236.0 L512.3 236.0 L513.3 236.1 L514.4 236.1 L515.8 236.1 L516.9 236.1 L517.9 236.1 L519.3 236.1 L520.4 236.1 L521.5 236.1 L522.9 236.1 L523.9 236.1 L525.0 236.1 L526.4 236.1 L527.5 236.1 L528.5 236.1 L530.0 236.2 L531.0 236.2 L532.1 236.2 L533.5 236.2 L534.6 236.2 L535.6 236.2 L537.0 236.2 L538.1 236.2 M469.6 256.7 L470.6 256.4 L471.9 256.0 L472.8 255.7 L473.8 255.4 L475.0 255.0 L476.0 254.7 L477.0 254.5 L478.2 254.1 L479.2 253.8 L480.1 253.5 L481.4 253.1 L482.4 252.8 L483.3 252.5 L484.6 252.2 L485.6 252.0 L486.6 251.8 L487.9 251.5 L488.9 251.2 L489.8 251.0 L491.1 250.7 L492.1 250.5 L493.1 250.2 L494.4 249.9 L495.4 249.7 L496.4 249.5 L497.7 249.1 L498.6 248.9 L499.6 248.7 L500.9 248.6 L501.9 248.7 L502.9 248.7 L504.3 248.8 L505.3 248.9 L506.3 249.0 L507.6 249.1 L508.6 249.1 L509.6 249.2 L510.9 249.3 L511.9 249.4 L512.9 249.4 L514.3 249.5 L515.3 249.5 L516.3 249.6 L517.6 249.7 L518.6 249.7 L519.7 249.8 L521.0 249.9 L522.0 249.9 L523.0 250.0 L524.3 250.1 L525.4 250.1 L526.4 250.2 L527.7 250.2 L528.7 250.3 L529.7 250.4 L531.1 250.4 L532.1 250.5 L533.1 250.5 L534.4 250.6 L535.4 250.7 M470.6 267.2 L471.6 267.1 L472.8 266.9 L473.7 266.7 L474.7 266.5 L475.9 266.3 L476.9 266.2 L477.8 266.0 L479.0 265.8 L480.0 265.6 L480.9 265.5 L482.2 265.3 L483.1 265.1 L484.0 264.9 L485.3 264.7 L486.2 264.5 L487.1 264.3 L488.3 264.0 L489.2 263.8 L490.1 263.6 L491.4 263.3 L492.3 263.1 L493.2 262.9 L494.4 262.7 L495.3 262.5 L496.2 262.3 L497.5 262.0 L498.4 261.8 L499.3 261.6 L500.5 261.5 L501.5 261.6 L502.4 261.7 L503.7 261.9 L504.6 262.0 L505.5 262.1 L506.8 262.2 L507.7 262.3 L508.7 262.4 L509.9 262.5 L510.9 262.6 L511.8 262.8 L513.0 262.9 L514.0 263.0 L514.9 263.1 L516.1 263.3 L517.1 263.4 L518.0 263.5 L519.2 263.7 L520.2 263.8 L521.1 263.9 L522.3 264.1 L523.3 264.2 L524.2 264.3 L525.4 264.5 L526.4 264.6 L527.3 264.7 L528.5 264.9 L529.5 265.0 L530.4 265.1 L531.6 265.3 L532.6 265.4 M472.7 277.3 L473.6 277.3 L474.8 277.2 L475.6 277.2 L476.5 277.1 L477.7 277.0 L478.6 277.0 L479.5 277.0 L480.6 276.9 L481.5 276.9 L482.4 276.8 L483.6 276.7 L484.4 276.7 L485.3 276.7 L486.5 276.5 L487.3 276.4 L488.2 276.2 L489.3 276.1 L490.1 275.9 L491.0 275.8 L492.1 275.6 L493.0 275.5 L493.8 275.4 L494.9 275.2 L495.8 275.1 L496.6 274.9 L497.7 274.8 L498.6 274.6 L499.4 274.5 L500.6 274.5 L501.4 274.6 L502.3 274.7 L503.5 274.9 L504.3 275.0 L505.2 275.1 L506.3 275.3 L507.2 275.4 L508.1 275.5 L509.2 275.7 L510.1 275.9 L510.9 276.1 L512.0 276.3 L512.8 276.5 L513.7 276.7 L514.8 277.0 L515.6 277.2 L516.5 277.3 L517.6 277.6 L518.4 277.8 L519.2 278.0 L520.4 278.2 L521.2 278.4 L522.0 278.6 L523.1 278.9 L524.0 279.1 L524.8 279.3 L525.9 279.5 L526.7 279.7 L527.6 279.9 L528.7 280.2 L529.5 280.3 M475.8 286.9 L476.6 287.0 L477.7 287.0 L478.5 287.1 L479.3 287.1 L480.3 287.2 L481.1 287.3 L481.9 287.3 L483.0 287.4 L483.8 287.4 L484.6 287.5 L485.6 287.6 L486.4 287.6 L487.2 287.7 L488.3 287.7 L489.0 287.7 L489.8 287.6 L490.8 287.6 L491.6 287.6 L492.4 287.6 L493.4 287.6 L494.1 287.6 L494.9 287.5 L495.9 287.5 L496.7 287.5 L497.5 287.5 L498.5 287.5 L499.3 287.4 L500.0 287.4 L501.1 287.5 L501.8 287.6 L502.6 287.8 L503.6 288.0 L504.4 288.1 L505.2 288.2 L506.2 288.4 L507.0 288.5 L507.8 288.7 L508.8 288.8 L509.6 289.1 L510.3 289.4 L511.2 289.7 L512.0 290.0 L512.7 290.3 L513.6 290.6 L514.4 290.9 L515.1 291.2 L516.0 291.6 L516.8 291.9 L517.5 292.1 L518.4 292.5 L519.2 292.8 L519.9 293.1 L520.8 293.4 L521.6 293.7 L522.3 294.0 L523.2 294.3 L524.0 294.6 L524.7 294.9 L525.6 295.3 L526.3 295.6 M480.0 296.0 L480.7 296.1 L481.6 296.3 L482.3 296.5 L482.9 296.6 L483.9 296.8 L484.5 296.9 L485.2 297.1 L486.1 297.3 L486.8 297.4 L487.5 297.5 L488.4 297.7 L489.1 297.9 L489.7 298.0 L490.6 298.2 L491.3 298.3 L492.0 298.5 L492.9 298.7 L493.6 298.8 L494.3 299.0 L495.2 299.1 L495.9 299.3 L496.5 299.4 L497.4 299.6 L498.1 299.7 L498.8 299.9 L499.7 300.1 L500.4 300.2 L501.1 300.4 L502.0 300.5 L502.6 300.7 L503.3 300.8 L504.2 301.0 L504.9 301.2 L505.6 301.3 L506.5 301.5 L507.2 301.6 L507.9 301.8 L508.8 302.0 L509.4 302.2 L510.0 302.6 L510.7 303.1 L511.3 303.5 L511.9 303.9 L512.7 304.4 L513.3 304.7 L513.9 305.1 L514.6 305.6 L515.2 306.0 L515.8 306.4 L516.6 306.9 L517.2 307.2 L517.7 307.6 L518.5 308.1 L519.1 308.5 L519.7 308.9 L520.5 309.4 L521.1 309.7 L521.6 310.1 L522.4 310.6 L523.0 311.0 M473.0 222.0 L471.6 229.1 L470.6 236.0 L469.9 242.8 L469.6 249.3 L469.6 255.7 L470.0 262.0 L470.8 268.1 L471.9 274.0 L473.4 279.8 L475.2 285.3 L477.4 290.8 L480.0 296.0 M480.9 214.7 L480.0 222.8 L479.3 230.6 L478.9 238.2 L478.7 245.7 L478.8 252.9 L479.2 259.9 L479.8 266.6 L480.6 273.2 L481.7 279.6 L483.1 285.7 L484.7 291.6 L486.6 297.4 M489.9 210.7 L489.1 219.0 L488.5 227.1 L488.1 235.0 L487.9 242.8 L487.9 250.4 L488.0 257.8 L488.4 265.0 L488.9 272.1 L489.6 279.0 L490.5 285.7 L491.6 292.3 L492.9 298.7 M500.7 210.2 L499.7 217.8 L498.9 225.5 L498.2 233.1 L497.7 240.6 L497.4 248.2 L497.2 255.7 L497.2 263.1 L497.3 270.6 L497.6 278.0 L498.1 285.4 L498.7 292.7 L499.5 300.0 M511.1 209.7 L509.9 217.3 L508.9 225.0 L508.1 232.6 L507.3 240.3 L506.7 247.9 L506.2 255.5 L505.8 263.2 L505.6 270.8 L505.4 278.5 L505.4 286.1 L505.6 293.7 L505.8 301.3 M521.8 209.1 L520.6 217.0 L519.5 224.8 L518.4 232.7 L517.4 240.6 L516.4 248.5 L515.6 256.4 L514.8 264.3 L514.1 272.2 L513.4 280.1 L512.8 288.0 L512.3 295.9 L511.9 303.9 M532.2 208.6 L530.9 216.5 L529.7 224.6 L528.4 232.7 L527.1 240.8 L525.9 249.0 L524.6 257.2 L523.4 265.4 L522.2 273.7 L520.9 282.1 L519.7 290.5 L518.5 298.9 L517.4 307.4 M543.0 208.0 L541.6 216.1 L540.2 224.3 L538.8 232.6 L537.2 241.0 L535.6 249.5 L534.0 258.0 L532.3 266.6 L530.6 275.3 L528.8 284.1 L526.9 293.0 L525.0 302.0 L523.0 311.0" fill="none" stroke="#f0f0f0" stroke-width="0.7" opacity="1"/>
<polyline points="472.0,240.0 472.0,225.0 476.0,215.0 485.0,211.0 543.0,208.0" fill="none" stroke="#f4f4f4" stroke-width="1.2" />
<polyline points="548.0,192.0 523.0,311.0" fill="none" stroke="#f0f0f0" stroke-width="0.65" />
<polyline points="548.0,192.0 532.0,311.3" fill="none" stroke="#f0f0f0" stroke-width="0.65" />
<polyline points="548.0,192.0 541.0,311.7" fill="none" stroke="#f0f0f0" stroke-width="0.65" />
<polyline points="548.0,192.0 550.0,312.0" fill="none" stroke="#f0f0f0" stroke-width="0.65" />
<polyline points="548.0,192.0 559.0,312.3" fill="none" stroke="#f0f0f0" stroke-width="0.65" />
<polyline points="548.0,192.0 568.0,312.7" fill="none" stroke="#f0f0f0" stroke-width="0.65" />
<polyline points="548.0,192.0 577.0,313.0" fill="none" stroke="#f0f0f0" stroke-width="0.65" />
<polyline points="543.0,215.8 557.0,216.2" fill="none" stroke="#d8d8d8" stroke-width="0.5" />
<polyline points="538.0,239.6 562.0,240.4" fill="none" stroke="#d8d8d8" stroke-width="0.5" />
<polyline points="533.0,263.4 567.0,264.6" fill="none" stroke="#d8d8d8" stroke-width="0.5" />
<polyline points="528.0,287.2 572.0,288.8" fill="none" stroke="#d8d8d8" stroke-width="0.5" />
<polygon points="627.0,492.0 632.0,470.0 645.0,452.0 665.0,442.0 690.0,447.0 715.0,465.0 736.0,492.0 750.0,522.0 755.0,545.0 748.0,560.0 747.0,593.0 743.0,594.0 697.0,607.0 660.0,610.0 630.0,590.0" fill="#000" />
<clipPath id="cFW"><polygon points="627.0,492.0 632.0,470.0 645.0,452.0 665.0,442.0 690.0,447.0 715.0,465.0 736.0,492.0 750.0,522.0 755.0,545.0 748.0,560.0 747.0,593.0 743.0,594.0 697.0,607.0 660.0,610.0 630.0,590.0"/></clipPath>
<g clip-path="url(#cFW)">
<polyline points="620.0,455.0 688.0,447.0 765.0,445.0" fill="none" stroke="#ececec" stroke-width="0.9" />
<polyline points="620.0,464.2 688.0,456.2 765.0,454.2" fill="none" stroke="#ececec" stroke-width="0.9" />
<polyline points="620.0,473.4 688.0,465.4 765.0,463.4" fill="none" stroke="#ececec" stroke-width="0.9" />
<polyline points="620.0,482.6 688.0,474.6 765.0,472.6" fill="none" stroke="#ececec" stroke-width="0.9" />
<polyline points="620.0,491.8 688.0,483.8 765.0,481.8" fill="none" stroke="#ececec" stroke-width="0.9" />
<polyline points="620.0,501.0 688.0,493.0 765.0,491.0" fill="none" stroke="#ececec" stroke-width="0.9" />
<polyline points="620.0,510.2 688.0,502.2 765.0,500.2" fill="none" stroke="#ececec" stroke-width="0.9" />
<polyline points="620.0,519.4 688.0,511.4 765.0,509.4" fill="none" stroke="#ececec" stroke-width="0.9" />
<polyline points="620.0,528.6 688.0,520.6 765.0,518.6" fill="none" stroke="#ececec" stroke-width="0.9" />
<polyline points="620.0,537.8 688.0,529.8 765.0,527.8" fill="none" stroke="#ececec" stroke-width="0.9" />
<polyline points="620.0,547.0 688.0,539.0 765.0,537.0" fill="none" stroke="#ececec" stroke-width="0.9" />
<polyline points="620.0,556.2 688.0,548.2 765.0,546.2" fill="none" stroke="#ececec" stroke-width="0.9" />
<polyline points="620.0,565.4 688.0,557.4 765.0,555.4" fill="none" stroke="#ececec" stroke-width="0.9" />
<polyline points="620.0,574.6 688.0,566.6 765.0,564.6" fill="none" stroke="#ececec" stroke-width="0.9" />
<polyline points="620.0,583.8 688.0,575.8 765.0,573.8" fill="none" stroke="#ececec" stroke-width="0.9" />
<polyline points="620.0,593.0 688.0,585.0 765.0,583.0" fill="none" stroke="#ececec" stroke-width="0.9" />
<polyline points="620.0,602.2 688.0,594.2 765.0,592.2" fill="none" stroke="#ececec" stroke-width="0.9" />
<polyline points="620.0,611.4 688.0,603.4 765.0,601.4" fill="none" stroke="#ececec" stroke-width="0.9" />
<polyline points="692.0,440.0 684.0,500.0 686.0,560.0 699.0,612.0" fill="none" stroke="#e4e4e4" stroke-width="0.9" />
<polyline points="737.0,488.0 741.0,540.0 746.0,596.0" fill="none" stroke="#cfcfcf" stroke-width="0.7" />
</g>
<polyline points="627.0,492.0 630.0,590.0 660.0,610.0 697.0,607.0 743.0,594.0" fill="none" stroke="#f4f4f4" stroke-width="1" />
<polyline points="627.0,492.0 627.3,490.5 627.9,487.5 628.9,483.0 630.1,477.0 631.9,471.4 634.3,466.1 637.2,461.2 640.8,456.8 644.6,452.8 648.9,449.2 653.5,446.2 658.5,443.8 663.9,442.2 669.6,441.6 675.8,441.9 682.2,443.1 688.7,445.2 695.1,448.1 701.4,451.8 707.6,456.2 713.6,461.3 719.4,466.9 724.9,473.1 730.1,479.9 734.9,486.8 739.3,493.9 743.2,501.2 746.8,508.8 749.8,515.8 752.2,522.4 754.2,528.6 755.8,534.4 756.9,538.7 757.6,541.6 758.0,543.0" fill="none" stroke="#e4e4e4" stroke-width="2" />
<path d="M903.0 297.0 L909.9 297.7 L919.0 298.6 L925.9 299.3 L932.8 300.0 L941.9 300.9 L948.8 301.6 L955.5 302.9 L964.2 306.0 L970.7 308.4 L977.2 310.7 L985.8 313.8 L992.3 316.1 L998.8 318.5 L1007.3 322.0 L1013.6 324.9 L1019.8 327.7 L1028.2 331.6 L1034.5 334.5 L1040.7 337.4 L1049.1 341.2 L1055.4 344.1 L1061.7 346.8 L1070.1 350.6 L1076.4 353.3 L1082.7 356.1 L1090.8 360.5 L1096.7 364.2 L1102.5 367.9 L1110.2 372.9 L1116.0 376.6 L1121.8 380.3 L1129.6 385.3 L1135.4 389.0 L1141.2 392.8 L1148.9 397.8 L1154.6 401.6 L1160.4 405.4 L1168.1 410.5 L1173.8 414.3 L1179.6 418.1 L1187.2 423.2 L1192.3 427.9 L1197.4 432.5 L1204.3 438.7 L1209.4 443.3 L1214.5 448.0 L1221.1 454.3 L1225.4 459.8 L1229.7 465.2 L1235.4 472.4 L1239.7 477.8 L1244.0 483.2 L1248.9 490.9 L1252.0 497.0 L1255.1 503.2 L1259.2 511.4 L1261.5 517.9 L1263.4 524.6 L1266.0 533.4 L1268.0 540.0 M889.2 297.7 L895.9 298.5 L904.9 299.6 L911.6 300.5 L918.2 301.3 L927.2 302.4 L933.9 303.2 L940.4 304.6 L948.9 307.8 L955.2 310.2 L961.6 312.6 L970.0 315.8 L976.4 318.2 L982.7 320.6 L991.1 324.2 L997.2 327.1 L1003.3 330.0 L1011.5 333.8 L1017.7 336.8 L1023.8 339.7 L1032.0 343.5 L1038.1 346.4 L1044.3 349.2 L1052.6 353.0 L1058.8 355.8 L1064.9 358.6 L1072.9 363.0 L1078.6 366.7 L1084.3 370.4 L1091.9 375.3 L1097.6 379.0 L1103.3 382.7 L1111.0 387.6 L1116.7 391.3 L1122.4 395.0 L1129.9 400.0 L1135.6 403.8 L1141.2 407.6 L1148.8 412.6 L1154.5 416.4 L1160.1 420.2 L1167.7 425.2 L1172.7 429.8 L1177.7 434.4 L1184.4 440.5 L1189.4 445.1 L1194.4 449.7 L1200.9 456.1 L1205.1 461.4 L1209.4 466.7 L1215.0 473.8 L1219.3 479.1 L1223.5 484.5 L1228.4 492.0 L1231.5 498.1 L1234.4 504.2 L1238.4 512.4 L1240.5 518.8 L1242.4 525.3 L1244.9 534.1 L1246.8 540.6 M875.5 298.5 L882.0 299.4 L890.7 300.7 L897.2 301.6 L903.7 302.6 L912.4 303.9 L919.0 304.8 L925.4 306.4 L933.6 309.7 L939.8 312.1 L946.0 314.6 L954.2 317.9 L960.4 320.3 L966.7 322.7 L974.8 326.3 L980.8 329.3 L986.8 332.2 L994.8 336.1 L1000.8 339.0 L1006.9 342.0 L1014.9 345.9 L1020.9 348.8 L1026.9 351.6 L1035.0 355.4 L1041.1 358.3 L1047.1 361.1 L1054.9 365.4 L1060.5 369.1 L1066.1 372.8 L1073.6 377.7 L1079.2 381.4 L1084.8 385.0 L1092.3 389.9 L1097.9 393.6 L1103.5 397.3 L1111.0 402.3 L1116.5 406.0 L1122.1 409.7 L1129.5 414.7 L1135.1 418.5 L1140.7 422.2 L1148.1 427.2 L1153.1 431.7 L1158.0 436.3 L1164.5 442.4 L1169.5 446.9 L1174.4 451.5 L1180.7 457.8 L1184.9 463.0 L1189.1 468.3 L1194.7 475.3 L1198.8 480.5 L1203.0 485.8 L1207.9 493.2 L1210.9 499.2 L1213.8 505.3 L1217.5 513.3 L1219.6 519.7 L1221.4 526.1 L1223.8 534.7 L1225.6 541.2 M861.7 299.2 L868.0 300.3 L876.5 301.7 L882.9 302.8 L889.2 303.9 L897.7 305.4 L904.1 306.5 L910.3 308.1 L918.3 311.5 L924.4 314.0 L930.4 316.5 L938.5 319.9 L944.5 322.4 L950.6 324.9 L958.6 328.5 L964.4 331.5 L970.3 334.4 L978.2 338.4 L984.0 341.3 L989.9 344.3 L997.8 348.2 L1003.7 351.1 L1009.6 354.0 L1017.5 357.8 L1023.4 360.7 L1029.3 363.6 L1036.9 367.9 L1042.4 371.6 L1047.9 375.3 L1055.3 380.1 L1060.8 383.7 L1066.3 387.4 L1073.7 392.2 L1079.2 395.9 L1084.7 399.5 L1092.0 404.5 L1097.5 408.2 L1103.0 411.9 L1110.3 416.8 L1115.8 420.5 L1121.2 424.2 L1128.5 429.2 L1133.4 433.7 L1138.3 438.2 L1144.7 444.2 L1149.5 448.7 L1154.3 453.3 L1160.6 459.5 L1164.7 464.6 L1168.8 469.8 L1174.3 476.7 L1178.4 481.9 L1182.5 487.1 L1187.4 494.4 L1190.4 500.3 L1193.1 506.3 L1196.7 514.3 L1198.7 520.5 L1200.4 526.9 L1202.7 535.4 L1204.5 541.8 M847.9 299.9 L854.1 301.1 L862.3 302.8 L868.5 304.0 L874.7 305.2 L883.0 306.9 L889.2 308.1 L895.2 309.9 L903.1 313.3 L909.0 315.9 L914.8 318.5 L922.7 321.9 L928.6 324.5 L934.5 327.0 L942.3 330.7 L948.1 333.7 L953.8 336.6 L961.5 340.6 L967.2 343.6 L973.0 346.6 L980.6 350.5 L986.4 353.5 L992.2 356.4 L999.9 360.3 L1005.7 363.2 L1011.5 366.1 L1018.9 370.4 L1024.3 374.1 L1029.7 377.7 L1037.0 382.5 L1042.4 386.1 L1047.8 389.7 L1055.1 394.6 L1060.5 398.2 L1065.9 401.8 L1073.1 406.7 L1078.5 410.4 L1083.8 414.1 L1091.0 418.9 L1096.4 422.6 L1101.8 426.3 L1109.0 431.2 L1113.8 435.6 L1118.5 440.1 L1124.8 446.1 L1129.5 450.5 L1134.3 455.0 L1140.4 461.2 L1144.5 466.3 L1148.5 471.4 L1153.9 478.2 L1158.0 483.3 L1162.1 488.4 L1166.9 495.6 L1169.8 501.4 L1172.4 507.3 L1175.9 515.2 L1177.7 521.4 L1179.4 527.7 L1181.6 536.1 L1183.3 542.4 M834.1 300.6 L840.2 302.0 L848.2 303.8 L854.2 305.2 L860.2 306.6 L868.2 308.4 L874.3 309.7 L880.2 311.6 L887.8 315.1 L893.5 317.8 L899.3 320.4 L906.9 323.9 L912.7 326.5 L918.5 329.1 L926.1 332.9 L931.7 335.9 L937.3 338.9 L944.8 342.9 L950.4 345.9 L956.0 348.9 L963.5 352.9 L969.2 355.9 L974.8 358.8 L982.4 362.7 L988.0 365.6 L993.7 368.5 L1000.9 372.9 L1006.2 376.6 L1011.5 380.2 L1018.6 385.0 L1024.0 388.5 L1029.3 392.1 L1036.4 396.9 L1041.8 400.5 L1047.1 404.1 L1054.1 408.9 L1059.4 412.6 L1064.7 416.2 L1071.8 421.1 L1077.1 424.7 L1082.4 428.3 L1089.4 433.2 L1094.2 437.5 L1098.8 442.0 L1105.0 447.9 L1109.6 452.3 L1114.2 456.8 L1120.2 462.9 L1124.2 467.9 L1128.2 472.9 L1133.6 479.6 L1137.6 484.7 L1141.6 489.7 L1146.3 496.8 L1149.3 502.5 L1151.7 508.3 L1155.0 516.1 L1156.8 522.3 L1158.4 528.5 L1160.5 536.7 L1162.1 543.0 M820.4 301.4 L826.2 302.9 L834.0 304.9 L839.9 306.4 L845.7 307.9 L853.5 309.9 L859.3 311.4 L865.1 313.3 L872.5 316.9 L878.1 319.6 L883.7 322.3 L891.1 326.0 L896.7 328.6 L902.4 331.2 L909.8 335.0 L915.3 338.1 L920.8 341.1 L928.1 345.1 L933.6 348.2 L939.1 351.2 L946.4 355.2 L951.9 358.2 L957.4 361.2 L964.8 365.1 L970.3 368.1 L975.8 371.0 L983.0 375.4 L988.1 379.1 L993.3 382.6 L1000.3 387.4 L1005.6 390.9 L1010.8 394.5 L1017.8 399.2 L1023.0 402.7 L1028.2 406.3 L1035.2 411.1 L1040.4 414.8 L1045.6 418.4 L1052.5 423.2 L1057.7 426.8 L1062.9 430.4 L1069.8 435.2 L1074.5 439.5 L1079.1 443.9 L1085.1 449.7 L1089.6 454.1 L1094.2 458.6 L1100.1 464.6 L1104.0 469.5 L1108.0 474.5 L1113.2 481.1 L1117.2 486.0 L1121.1 491.0 L1125.8 498.0 L1128.8 503.5 L1131.1 509.3 L1134.2 517.1 L1135.9 523.1 L1137.4 529.3 L1139.4 537.4 L1140.9 543.5 M806.6 302.1 L812.3 303.7 L819.8 305.9 L825.5 307.5 L831.2 309.2 L838.8 311.4 L844.4 313.0 L850.0 315.1 L857.3 318.8 L862.7 321.5 L868.1 324.3 L875.3 328.0 L880.8 330.7 L886.3 333.4 L893.6 337.2 L898.9 340.3 L904.3 343.3 L911.4 347.4 L916.8 350.4 L922.2 353.5 L929.3 357.6 L934.7 360.6 L940.1 363.6 L947.3 367.5 L952.6 370.5 L958.0 373.5 L965.0 377.9 L970.0 381.5 L975.2 385.1 L982.0 389.8 L987.2 393.3 L992.3 396.8 L999.2 401.5 L1004.3 405.0 L1009.4 408.6 L1016.2 413.4 L1021.3 416.9 L1026.4 420.5 L1033.2 425.3 L1038.4 428.9 L1043.5 432.4 L1050.3 437.2 L1054.9 441.4 L1059.3 445.8 L1065.2 451.6 L1069.7 456.0 L1074.1 460.3 L1079.9 466.3 L1083.8 471.1 L1087.7 476.0 L1092.9 482.5 L1096.8 487.4 L1100.6 492.3 L1105.3 499.2 L1108.2 504.6 L1110.4 510.4 L1113.3 518.0 L1115.0 524.0 L1116.4 530.0 L1118.3 538.1 L1119.7 544.1 M792.8 302.8 L798.3 304.6 L805.7 307.0 L811.2 308.7 L816.7 310.5 L824.0 312.9 L829.5 314.6 L835.0 316.8 L842.0 320.6 L847.2 323.4 L852.5 326.2 L859.5 330.0 L864.9 332.8 L870.2 335.5 L877.3 339.4 L882.5 342.5 L887.8 345.5 L894.7 349.6 L900.0 352.7 L905.2 355.8 L912.2 359.9 L917.4 362.9 L922.7 366.0 L929.7 370.0 L935.0 373.0 L940.2 376.0 L947.0 380.4 L952.0 384.0 L957.0 387.6 L963.7 392.2 L968.7 395.7 L973.8 399.2 L980.5 403.8 L985.6 407.3 L990.6 410.9 L997.3 415.6 L1002.3 419.1 L1007.3 422.7 L1014.0 427.4 L1019.0 430.9 L1024.0 434.5 L1030.7 439.2 L1035.3 443.3 L1039.6 447.7 L1045.4 453.4 L1049.7 457.8 L1054.1 462.1 L1059.7 468.0 L1063.6 472.8 L1067.4 477.6 L1072.5 484.0 L1076.3 488.8 L1080.2 493.6 L1084.8 500.3 L1087.7 505.7 L1089.7 511.4 L1092.5 519.0 L1094.0 524.9 L1095.4 530.8 L1097.2 538.8 L1098.5 544.7 M779.0 303.5 L784.4 305.5 L791.5 308.0 L796.8 309.9 L802.2 311.8 L809.3 314.4 L814.6 316.3 L819.9 318.6 L826.7 322.4 L831.8 325.3 L836.9 328.2 L843.8 332.0 L848.9 334.9 L854.2 337.6 L861.1 341.6 L866.2 344.7 L871.3 347.8 L878.1 351.9 L883.2 355.0 L888.3 358.1 L895.1 362.2 L900.2 365.3 L905.3 368.3 L912.1 372.4 L917.3 375.4 L922.4 378.5 L929.0 382.9 L933.9 386.5 L938.8 390.0 L945.4 394.6 L950.3 398.1 L955.3 401.6 L961.9 406.2 L966.8 409.6 L971.8 413.1 L978.3 417.8 L983.2 421.3 L988.2 424.8 L994.7 429.5 L999.7 433.0 L1004.6 436.5 L1011.1 441.2 L1015.6 445.3 L1019.9 449.6 L1025.5 455.3 L1029.8 459.6 L1034.0 463.8 L1039.6 469.7 L1043.4 474.4 L1047.1 479.1 L1052.2 485.5 L1055.9 490.2 L1059.7 494.9 L1064.3 501.5 L1067.1 506.8 L1069.1 512.4 L1071.7 519.9 L1073.1 525.7 L1074.4 531.6 L1076.1 539.4 L1077.4 545.3 M765.3 304.3 L770.4 306.3 L777.3 309.0 L782.5 311.1 L787.7 313.1 L794.6 315.9 L799.7 317.9 L804.8 320.3 L811.4 324.2 L816.4 327.2 L821.4 330.1 L828.0 334.0 L833.0 336.9 L838.1 339.8 L844.8 343.7 L849.8 346.9 L854.8 350.0 L861.4 354.1 L866.4 357.3 L871.3 360.4 L878.0 364.6 L882.9 367.7 L887.9 370.7 L894.6 374.8 L899.6 377.9 L904.6 381.0 L911.1 385.4 L915.8 389.0 L920.6 392.5 L927.1 397.0 L931.9 400.5 L936.8 403.9 L943.3 408.5 L948.1 411.9 L952.9 415.4 L959.4 420.0 L964.2 423.5 L969.0 427.0 L975.5 431.6 L980.3 435.1 L985.1 438.6 L991.5 443.2 L996.0 447.2 L1000.1 451.5 L1005.7 457.1 L1009.8 461.4 L1014.0 465.6 L1019.4 471.4 L1023.1 476.0 L1026.8 480.7 L1031.8 486.9 L1035.5 491.6 L1039.2 496.2 L1043.8 502.7 L1046.6 507.9 L1048.4 513.4 L1050.8 520.8 L1052.2 526.6 L1053.4 532.4 L1055.0 540.1 L1056.2 545.9 M751.5 305.0 L756.5 307.2 L763.2 310.1 L768.2 312.3 L773.2 314.5 L779.8 317.4 L784.8 319.5 L789.7 322.0 L796.2 326.0 L801.0 329.1 L805.8 332.1 L812.2 336.1 L817.1 339.0 L822.0 341.9 L828.6 345.9 L833.4 349.1 L838.2 352.2 L844.7 356.4 L849.5 359.5 L854.4 362.7 L860.8 366.9 L865.7 370.0 L870.6 373.1 L877.0 377.3 L881.9 380.4 L886.8 383.5 L893.1 387.9 L897.7 391.5 L902.4 394.9 L908.8 399.5 L913.5 402.9 L918.3 406.3 L924.6 410.8 L929.4 414.2 L934.1 417.7 L940.4 422.2 L945.2 425.7 L949.9 429.1 L956.2 433.7 L960.9 437.2 L965.7 440.6 L972.0 445.2 L976.3 449.1 L980.4 453.4 L985.8 459.0 L989.9 463.2 L993.9 467.4 L999.3 473.1 L1002.9 477.7 L1006.6 482.2 L1011.4 488.4 L1015.1 492.9 L1018.7 497.5 L1023.2 503.9 L1026.0 509.0 L1027.7 514.5 L1030.0 521.8 L1031.2 527.4 L1032.4 533.2 L1033.9 540.8 L1035.0 546.5 M737.7 305.7 L742.6 308.0 L749.0 311.1 L753.8 313.5 L758.6 315.8 L765.1 318.9 L769.9 321.2 L774.7 323.8 L780.9 327.9 L785.5 330.9 L790.2 334.0 L796.4 338.1 L801.2 341.1 L806.0 344.0 L812.3 348.1 L817.0 351.3 L821.7 354.4 L828.0 358.7 L832.7 361.8 L837.4 365.0 L843.7 369.2 L848.4 372.4 L853.2 375.5 L859.5 379.7 L864.2 382.8 L868.9 385.9 L875.1 390.4 L879.6 393.9 L884.2 397.4 L890.4 401.9 L895.1 405.3 L899.8 408.6 L906.0 413.1 L910.6 416.5 L915.3 419.9 L921.5 424.5 L926.1 427.9 L930.8 431.3 L937.0 435.8 L941.6 439.3 L946.2 442.7 L952.4 447.2 L956.7 451.1 L960.7 455.2 L966.0 460.8 L969.9 465.0 L973.9 469.1 L979.1 474.8 L982.7 479.3 L986.3 483.8 L991.1 489.8 L994.7 494.3 L998.3 498.8 L1002.7 505.1 L1005.5 510.0 L1007.1 515.5 L1009.1 522.7 L1010.3 528.3 L1011.4 533.9 L1012.8 541.5 L1013.8 547.1 M724.0 306.5 L728.6 308.9 L734.8 312.2 L739.5 314.6 L744.1 317.1 L750.3 320.4 L755.0 322.8 L759.6 325.5 L765.6 329.7 L770.1 332.8 L774.6 335.9 L780.6 340.1 L785.2 343.2 L789.9 346.1 L796.1 350.3 L800.6 353.4 L805.2 356.6 L811.3 360.9 L815.9 364.1 L820.5 367.3 L826.6 371.6 L831.2 374.7 L835.8 377.9 L841.9 382.1 L846.5 385.3 L851.1 388.4 L857.1 392.9 L861.5 396.4 L866.0 399.8 L872.1 404.3 L876.7 407.7 L881.3 411.0 L887.4 415.5 L891.9 418.8 L896.5 422.2 L902.5 426.7 L907.1 430.1 L911.6 433.5 L917.7 438.0 L922.2 441.3 L926.8 444.7 L932.8 449.2 L937.1 453.0 L940.9 457.1 L946.1 462.6 L950.0 466.8 L953.8 470.9 L958.9 476.5 L962.5 480.9 L966.0 485.4 L970.7 491.3 L974.3 495.7 L977.8 500.1 L982.2 506.3 L984.9 511.1 L986.4 516.5 L988.3 523.7 L989.4 529.2 L990.4 534.7 L991.7 542.1 L992.6 547.7 M710.2 307.2 L714.7 309.8 L720.7 313.2 L725.1 315.8 L729.6 318.4 L735.6 321.9 L740.1 324.4 L744.5 327.3 L750.3 331.5 L754.7 334.7 L759.0 337.9 L764.8 342.1 L769.3 345.2 L773.8 348.3 L779.8 352.4 L784.3 355.6 L788.7 358.9 L794.7 363.2 L799.1 366.4 L803.6 369.6 L809.5 373.9 L814.0 377.1 L818.4 380.3 L824.4 384.5 L828.8 387.7 L833.3 390.9 L839.2 395.4 L843.4 398.9 L847.8 402.3 L853.8 406.7 L858.3 410.0 L862.8 413.4 L868.7 417.8 L873.2 421.1 L877.6 424.4 L883.6 428.9 L888.0 432.3 L892.5 435.6 L898.4 440.1 L902.9 443.4 L907.3 446.8 L913.3 451.2 L917.4 455.0 L921.2 459.0 L926.2 464.5 L930.0 468.6 L933.8 472.7 L938.8 478.2 L942.2 482.5 L945.7 486.9 L950.4 492.7 L953.8 497.1 L957.3 501.5 L961.7 507.4 L964.4 512.2 L965.7 517.5 L967.5 524.6 L968.5 530.0 L969.4 535.5 L970.6 542.8 L971.5 548.3 M696.4 307.9 L700.7 310.6 L706.5 314.3 L710.8 317.0 L715.1 319.7 L720.9 323.3 L725.2 326.1 L729.5 329.0 L735.1 333.3 L739.3 336.6 L743.5 339.8 L749.1 344.2 L753.4 347.3 L757.8 350.4 L763.6 354.6 L767.9 357.8 L772.2 361.1 L778.0 365.4 L782.3 368.7 L786.6 371.9 L792.4 376.2 L796.7 379.5 L801.0 382.7 L806.8 387.0 L811.2 390.2 L815.5 393.4 L821.2 397.9 L825.4 401.4 L829.7 404.8 L835.5 409.1 L839.9 412.4 L844.2 415.7 L850.1 420.1 L854.5 423.4 L858.8 426.7 L864.6 431.1 L869.0 434.4 L873.4 437.8 L879.2 442.2 L883.5 445.5 L887.9 448.8 L893.7 453.3 L897.8 456.9 L901.5 460.9 L906.4 466.3 L910.1 470.4 L913.8 474.4 L918.6 479.9 L922.0 484.2 L925.4 488.5 L930.0 494.2 L933.4 498.5 L936.8 502.8 L941.2 508.6 L943.9 513.3 L945.0 518.5 L946.6 525.5 L947.5 530.9 L948.4 536.3 L949.4 543.5 L950.3 548.9 M682.6 308.6 L686.8 311.5 L692.3 315.3 L696.5 318.2 L700.6 321.0 L706.1 324.8 L710.3 327.7 L714.4 330.7 L719.8 335.2 L723.8 338.5 L727.9 341.8 L733.3 346.2 L737.4 349.4 L741.7 352.5 L747.3 356.8 L751.5 360.0 L755.7 363.3 L761.3 367.7 L765.5 370.9 L769.7 374.2 L775.3 378.6 L779.5 381.8 L783.7 385.1 L789.3 389.4 L793.5 392.6 L797.7 395.9 L803.2 400.4 L807.3 403.9 L811.5 407.2 L817.2 411.6 L821.5 414.8 L825.7 418.1 L831.4 422.4 L835.7 425.7 L840.0 429.0 L845.7 433.4 L850.0 436.6 L854.2 439.9 L859.9 444.3 L864.2 447.6 L868.5 450.9 L874.1 455.3 L878.2 458.8 L881.8 462.8 L886.5 468.2 L890.1 472.2 L893.7 476.2 L898.4 481.6 L901.8 485.8 L905.2 490.0 L909.6 495.6 L913.0 499.8 L916.4 504.1 L920.6 509.8 L923.3 514.4 L924.4 519.6 L925.8 526.5 L926.6 531.8 L927.3 537.1 L928.3 544.1 L929.1 549.5 M668.9 309.4 L672.8 312.4 L678.1 316.4 L682.1 319.4 L686.1 322.3 L691.4 326.3 L695.4 329.3 L699.3 332.5 L704.5 337.0 L708.4 340.3 L712.3 343.7 L717.5 348.2 L721.5 351.5 L725.6 354.6 L731.1 359.0 L735.1 362.2 L739.2 365.5 L744.6 369.9 L748.7 373.2 L752.7 376.5 L758.2 380.9 L762.2 384.2 L766.3 387.5 L771.7 391.8 L775.8 395.1 L779.9 398.4 L785.2 402.9 L789.2 406.3 L793.3 409.7 L798.9 414.0 L803.0 417.2 L807.2 420.4 L812.8 424.8 L817.0 428.0 L821.2 431.2 L826.7 435.6 L830.9 438.8 L835.1 442.1 L840.7 446.4 L844.8 449.7 L849.0 452.9 L854.6 457.3 L858.5 460.8 L862.0 464.7 L866.7 470.0 L870.2 474.0 L873.7 478.0 L878.3 483.3 L881.6 487.4 L884.9 491.6 L889.3 497.1 L892.6 501.2 L895.9 505.4 L900.1 511.0 L902.8 515.5 L903.7 520.6 L904.9 527.4 L905.7 532.6 L906.3 537.9 L907.2 544.8 L907.9 550.0 M655.1 310.1 L658.9 313.2 L664.0 317.4 L667.8 320.5 L671.6 323.7 L676.7 327.8 L680.5 331.0 L684.3 334.2 L689.2 338.8 L693.0 342.2 L696.7 345.7 L701.7 350.2 L705.6 353.6 L709.6 356.8 L714.8 361.1 L718.8 364.4 L722.7 367.8 L727.9 372.2 L731.9 375.5 L735.8 378.8 L741.0 383.2 L745.0 386.5 L748.9 389.8 L754.2 394.2 L758.1 397.5 L762.0 400.8 L767.2 405.4 L771.1 408.8 L775.1 412.1 L780.5 416.4 L784.6 419.6 L788.7 422.8 L794.2 427.1 L798.3 430.3 L802.4 433.5 L807.8 437.8 L811.9 441.0 L816.0 444.2 L821.4 448.5 L825.5 451.7 L829.6 455.0 L835.0 459.3 L838.9 462.7 L842.3 466.6 L846.8 471.9 L850.2 475.8 L853.6 479.7 L858.1 485.0 L861.3 489.1 L864.6 493.1 L868.9 498.5 L872.2 502.6 L875.4 506.7 L879.6 512.2 L882.2 516.5 L883.0 521.6 L884.1 528.4 L884.7 533.5 L885.3 538.6 L886.1 545.5 L886.7 550.6 M641.3 310.8 L645.0 314.1 L649.8 318.4 L653.4 321.7 L657.1 325.0 L661.9 329.3 L665.6 332.6 L669.2 336.0 L674.0 340.6 L677.6 344.1 L681.1 347.6 L685.9 352.3 L689.7 355.6 L693.5 358.9 L698.6 363.3 L702.4 366.6 L706.2 370.0 L711.2 374.4 L715.1 377.8 L718.9 381.1 L723.9 385.6 L727.7 388.9 L731.5 392.2 L736.6 396.7 L740.4 400.0 L744.2 403.3 L749.3 407.8 L753.0 411.3 L756.9 414.6 L762.2 418.8 L766.2 422.0 L770.2 425.2 L775.5 429.4 L779.5 432.6 L783.5 435.8 L788.8 440.0 L792.8 443.2 L796.8 446.4 L802.1 450.6 L806.1 453.8 L810.1 457.0 L815.4 461.3 L819.3 464.6 L822.6 468.5 L827.0 473.7 L830.3 477.6 L833.6 481.5 L837.9 486.7 L841.1 490.7 L844.3 494.7 L848.6 500.0 L851.8 504.0 L854.9 508.0 L859.1 513.4 L861.7 517.6 L862.4 522.6 L863.3 529.3 L863.8 534.4 L864.3 539.4 L865.0 546.2 L865.5 551.2 M627.5 311.5 L631.0 314.9 L635.6 319.5 L639.1 322.9 L642.6 326.3 L647.2 330.8 L650.7 334.2 L654.1 337.7 L658.7 342.4 L662.1 346.0 L665.6 349.5 L670.1 354.3 L673.7 357.7 L677.4 361.0 L682.3 365.5 L686.0 368.8 L689.7 372.2 L694.6 376.7 L698.2 380.1 L701.9 383.4 L706.8 387.9 L710.5 391.3 L714.2 394.6 L719.1 399.1 L722.7 402.5 L726.4 405.8 L731.3 410.3 L734.9 413.8 L738.7 417.0 L743.9 421.2 L747.8 424.4 L751.7 427.5 L756.9 431.7 L760.8 434.9 L764.7 438.0 L769.9 442.2 L773.8 445.4 L777.7 448.5 L782.9 452.7 L786.8 455.9 L790.7 459.1 L795.9 463.3 L799.6 466.6 L802.8 470.4 L807.1 475.5 L810.3 479.4 L813.5 483.2 L817.8 488.4 L820.9 492.3 L824.0 496.2 L828.2 501.5 L831.3 505.4 L834.5 509.3 L838.6 514.6 L841.1 518.7 L841.7 523.7 L842.4 530.2 L842.9 535.2 L843.3 540.2 L843.9 546.8 L844.4 551.8 M613.8 312.3 L617.1 315.8 L621.5 320.5 L624.8 324.1 L628.1 327.6 L632.5 332.3 L635.8 335.9 L639.1 339.4 L643.4 344.3 L646.7 347.9 L650.0 351.5 L654.4 356.3 L657.8 359.8 L661.3 363.1 L666.1 367.7 L669.6 371.0 L673.2 374.4 L677.9 378.9 L681.4 382.3 L685.0 385.7 L689.7 390.2 L693.2 393.6 L696.8 397.0 L701.5 401.5 L705.1 404.9 L708.6 408.3 L713.3 412.8 L716.8 416.3 L720.5 419.5 L725.6 423.7 L729.4 426.8 L733.2 429.9 L738.3 434.0 L742.1 437.2 L745.9 440.3 L751.0 444.5 L754.8 447.6 L758.6 450.7 L763.6 454.9 L767.4 458.0 L771.2 461.1 L776.3 465.3 L780.0 468.5 L783.1 472.3 L787.2 477.4 L790.4 481.2 L793.5 485.0 L797.6 490.1 L800.7 493.9 L803.7 497.8 L807.8 502.9 L810.9 506.7 L814.0 510.6 L818.1 515.7 L820.6 519.8 L821.0 524.7 L821.6 531.2 L822.0 536.1 L822.3 541.0 L822.8 547.5 L823.2 552.4 M600.0 313.0 L603.1 316.7 L607.3 321.6 L610.4 325.3 L613.6 328.9 L617.7 333.8 L620.9 337.5 L624.0 341.2 L628.2 346.1 L631.3 349.8 L634.4 353.4 L638.6 358.3 L641.9 361.9 L645.3 365.3 L649.8 369.8 L653.2 373.2 L656.7 376.7 L661.2 381.2 L664.6 384.6 L668.0 388.0 L672.6 392.6 L676.0 396.0 L679.4 399.4 L684.0 404.0 L687.4 407.4 L690.8 410.8 L695.3 415.3 L698.7 418.7 L702.3 422.0 L707.3 426.1 L711.0 429.2 L714.7 432.3 L719.6 436.4 L723.4 439.5 L727.1 442.6 L732.0 446.7 L735.7 449.8 L739.4 452.9 L744.4 457.0 L748.1 460.1 L751.8 463.2 L756.7 467.3 L760.4 470.4 L763.4 474.2 L767.4 479.2 L770.4 483.0 L773.4 486.8 L777.4 491.8 L780.5 495.6 L783.5 499.3 L787.5 504.4 L790.5 508.1 L793.5 511.9 L797.5 516.9 L800.1 520.9 L800.3 525.7 L800.7 532.1 L801.0 536.9 L801.3 541.8 L801.7 548.2 L802.0 553.0 M903.0 297.0 L877.8 298.3 L852.5 299.7 L827.2 301.0 L802.0 302.3 L776.8 303.7 L751.5 305.0 L726.2 306.3 L701.0 307.7 L675.8 309.0 L650.5 310.3 L625.2 311.7 L600.0 313.0 M921.3 298.8 L895.2 300.8 L869.2 302.8 L843.1 304.8 L817.0 306.8 L790.9 308.8 L764.8 310.8 L738.7 312.8 L712.7 314.8 L686.6 316.8 L660.5 318.8 L634.4 320.8 L608.3 322.8 M937.3 300.4 L910.5 303.0 L883.7 305.6 L856.9 308.2 L830.1 310.7 L803.3 313.3 L776.5 315.9 L749.7 318.5 L722.9 321.1 L696.1 323.6 L669.3 326.2 L642.4 328.8 L615.6 331.4 M955.5 302.9 L927.9 306.1 L900.3 309.3 L872.6 312.5 L845.0 315.7 L817.4 318.9 L789.7 322.0 L762.1 325.2 L734.5 328.4 L706.9 331.6 L679.2 334.8 L651.6 338.0 L624.0 341.2 M972.8 309.1 L944.4 312.6 L916.1 316.1 L887.7 319.6 L859.3 323.1 L830.9 326.6 L802.6 330.1 L774.2 333.5 L745.8 337.0 L717.4 340.5 L689.1 344.0 L660.7 347.5 L632.3 351.0 M988.0 314.6 L958.9 318.3 L929.9 322.1 L900.9 325.8 L871.9 329.6 L842.8 333.3 L813.8 337.1 L784.8 340.8 L755.7 344.6 L726.7 348.3 L697.7 352.1 L668.7 355.8 L639.6 359.6 M1005.2 321.0 L975.5 325.0 L945.8 329.0 L916.1 332.9 L886.4 336.9 L856.7 340.9 L827.0 344.9 L797.2 348.8 L767.5 352.8 L737.8 356.8 L708.1 360.7 L678.4 364.7 L648.7 368.7 M1021.9 328.7 L991.6 332.8 L961.2 336.9 L930.9 341.0 L900.6 345.1 L870.2 349.2 L839.9 353.2 L809.5 357.3 L779.2 361.4 L748.8 365.5 L718.5 369.6 L688.1 373.7 L657.8 377.8 M1038.7 336.4 L1007.7 340.6 L976.7 344.8 L945.7 349.0 L914.7 353.2 L883.8 357.4 L852.8 361.6 L821.8 365.9 L790.8 370.1 L759.8 374.3 L728.9 378.5 L697.9 382.7 L666.9 386.9 M1053.3 343.1 L1021.7 347.4 L990.2 351.7 L958.7 356.1 L927.1 360.4 L895.6 364.7 L864.1 369.0 L832.5 373.3 L801.0 377.6 L769.5 381.9 L737.9 386.2 L706.4 390.5 L674.9 394.9 M1070.1 350.6 L1037.9 355.0 L1005.8 359.5 L973.6 363.9 L941.4 368.4 L909.2 372.8 L877.0 377.3 L844.9 381.7 L812.7 386.2 L780.5 390.6 L748.3 395.1 L716.1 399.5 L684.0 404.0 M1087.0 358.0 L1054.1 362.6 L1021.3 367.2 L988.5 371.8 L955.7 376.3 L922.8 380.9 L890.0 385.5 L857.2 390.1 L824.4 394.7 L791.5 399.3 L758.7 403.9 L725.9 408.5 L693.1 413.1 M1100.5 366.7 L1067.2 371.2 L1034.0 375.7 L1000.7 380.2 L967.4 384.7 L934.1 389.3 L900.8 393.8 L867.5 398.3 L834.2 402.8 L801.0 407.4 L767.7 411.9 L734.4 416.4 L701.1 420.9 M1116.0 376.6 L1082.3 381.0 L1048.5 385.3 L1014.8 389.7 L981.0 394.1 L947.3 398.5 L913.5 402.9 L879.8 407.3 L846.0 411.6 L812.3 416.0 L778.5 420.4 L744.7 424.8 L711.0 429.2 M1131.5 386.5 L1097.3 390.7 L1063.1 395.0 L1028.9 399.2 L994.6 403.5 L960.4 407.7 L926.2 412.0 L892.0 416.2 L857.8 420.4 L823.5 424.7 L789.3 428.9 L755.1 433.2 L720.9 437.4 M1145.0 395.3 L1110.4 399.4 L1075.8 403.5 L1041.1 407.6 L1006.5 411.7 L971.9 415.8 L937.3 420.0 L902.7 424.1 L868.0 428.2 L833.4 432.3 L798.8 436.4 L764.2 440.5 L729.5 444.6 M1160.4 405.4 L1125.3 409.4 L1090.2 413.3 L1055.1 417.3 L1020.1 421.2 L985.0 425.2 L949.9 429.1 L914.8 433.1 L879.7 437.0 L844.7 441.0 L809.6 444.9 L774.5 448.9 L739.4 452.9 M1175.7 415.6 L1140.2 419.4 L1104.7 423.2 L1069.1 426.9 L1033.6 430.7 L998.1 434.5 L962.5 438.3 L927.0 442.1 L891.5 445.9 L855.9 449.7 L820.4 453.5 L784.8 457.3 L749.3 461.1 M1188.9 424.8 L1153.0 428.4 L1117.1 432.0 L1081.2 435.6 L1045.3 439.3 L1009.4 442.9 L973.4 446.5 L937.5 450.2 L901.6 453.8 L865.7 457.4 L829.8 461.0 L793.9 464.7 L758.0 468.3 M1202.6 437.1 L1166.2 440.5 L1129.9 443.9 L1093.5 447.3 L1057.2 450.8 L1020.8 454.2 L984.5 457.6 L948.1 461.0 L911.8 464.4 L875.4 467.8 L839.1 471.2 L802.7 474.6 L766.4 478.0 M1216.2 449.5 L1179.4 452.7 L1142.5 455.9 L1105.7 459.1 L1068.9 462.4 L1032.1 465.6 L995.3 468.8 L958.5 472.0 L921.7 475.2 L884.9 478.4 L848.0 481.6 L811.2 484.8 L774.4 488.0 M1228.2 463.4 L1191.1 466.3 L1153.9 469.1 L1116.8 472.0 L1079.6 474.9 L1042.5 477.8 L1005.3 480.7 L968.2 483.6 L931.0 486.5 L893.9 489.4 L856.8 492.3 L819.6 495.2 L782.5 498.1 M1238.2 476.0 L1200.8 478.5 L1163.4 481.1 L1126.1 483.7 L1088.7 486.3 L1051.3 488.8 L1013.9 491.4 L976.5 494.0 L939.1 496.6 L901.7 499.1 L864.3 501.7 L826.9 504.3 L789.5 506.9 M1248.9 490.9 L1211.3 493.0 L1173.7 495.2 L1136.1 497.4 L1098.5 499.5 L1060.9 501.7 L1023.2 503.9 L985.6 506.1 L948.0 508.2 L910.4 510.4 L872.8 512.6 L835.2 514.7 L797.5 516.9 M1257.2 507.3 L1219.1 509.1 L1181.1 510.9 L1143.0 512.7 L1105.0 514.5 L1066.9 516.3 L1028.9 518.1 L990.8 519.9 L952.7 521.7 L914.7 523.5 L876.6 525.3 L838.6 527.1 L800.5 528.9 M1262.8 522.4 L1224.3 523.8 L1185.8 525.3 L1147.4 526.8 L1108.9 528.3 L1070.5 529.8 L1032.0 531.3 L993.5 532.7 L955.1 534.2 L916.6 535.7 L878.1 537.2 L839.7 538.7 L801.2 540.2 M1268.0 540.0 L1229.2 541.1 L1190.3 542.2 L1151.5 543.2 L1112.7 544.3 L1073.8 545.4 L1035.0 546.5 L996.2 547.6 L957.3 548.7 L918.5 549.8 L879.7 550.8 L840.8 551.9 L802.0 553.0" fill="none" stroke="#ececec" stroke-width="0.6" opacity="0.35"/>
<path d="M802.0 553.0 L809.0 553.8 L818.3 554.9 L825.2 555.7 L832.2 556.5 L841.5 557.6 L848.5 558.4 L855.4 559.2 L864.7 560.3 L871.7 561.1 L878.7 561.9 L888.0 563.0 L895.0 563.0 L902.0 563.0 L911.3 563.0 L918.4 563.0 L925.4 563.0 L934.7 563.0 L941.7 563.0 L948.8 563.0 L958.1 563.0 L965.1 563.0 L972.1 563.0 L981.5 563.0 L988.5 563.0 L995.5 563.0 L1004.9 562.8 L1011.9 562.7 L1018.9 562.6 L1028.3 562.4 L1035.3 562.3 L1042.3 562.2 L1051.7 562.0 L1058.6 561.6 L1065.6 561.0 L1075.0 560.3 L1082.0 559.8 L1089.0 559.2 L1098.3 558.5 L1105.3 558.0 L1112.3 557.2 L1121.6 556.2 L1128.5 555.4 L1135.5 554.7 L1144.8 553.7 L1151.8 552.9 L1158.8 552.1 L1168.1 551.2 L1175.0 550.4 L1182.0 549.7 L1191.3 548.7 L1198.3 548.0 L1205.3 547.2 L1214.6 546.3 L1221.5 545.5 L1228.5 544.6 L1237.8 543.6 L1244.8 542.7 L1251.7 541.9 L1261.0 540.8 L1268.0 540.0 M801.8 544.9 L808.7 545.5 L817.9 546.4 L824.8 547.0 L831.8 547.7 L841.0 548.6 L847.9 549.2 L854.8 549.9 L864.1 550.7 L871.0 551.4 L877.9 552.0 L887.1 552.9 L894.1 552.8 L901.0 552.7 L910.3 552.6 L917.3 552.5 L924.2 552.4 L933.5 552.3 L940.5 552.2 L947.4 552.1 L956.7 551.9 L963.7 551.8 L970.6 551.7 L979.9 551.6 L986.8 551.4 L993.8 551.3 L1003.1 551.0 L1010.0 550.8 L1017.0 550.6 L1026.3 550.4 L1033.2 550.2 L1040.2 550.0 L1049.5 549.8 L1056.4 549.3 L1063.4 548.7 L1072.6 548.0 L1079.6 547.5 L1086.5 546.9 L1095.8 546.2 L1102.7 545.6 L1109.6 544.9 L1118.8 543.9 L1125.8 543.1 L1132.7 542.4 L1141.9 541.5 L1148.9 540.7 L1155.8 540.0 L1165.0 539.1 L1172.0 538.4 L1178.9 537.7 L1188.1 536.7 L1195.1 536.0 L1202.0 535.3 L1211.2 534.6 L1218.0 534.2 L1224.9 533.8 L1234.1 533.2 L1240.9 532.8 L1247.8 532.3 L1256.9 531.8 L1263.8 531.3 M801.6 536.8 L808.4 537.3 L817.6 537.9 L824.5 538.4 L831.3 538.9 L840.5 539.5 L847.4 540.0 L854.2 540.5 L863.4 541.1 L870.3 541.6 L877.1 542.1 L886.3 542.8 L893.2 542.6 L900.1 542.5 L909.3 542.3 L916.2 542.0 L923.1 541.8 L932.3 541.5 L939.2 541.3 L946.1 541.1 L955.3 540.8 L962.2 540.6 L969.1 540.4 L978.3 540.1 L985.2 539.9 L992.1 539.6 L1001.3 539.2 L1008.2 538.9 L1015.1 538.6 L1024.3 538.3 L1031.2 538.1 L1038.1 537.8 L1047.3 537.5 L1054.2 537.0 L1061.1 536.5 L1070.2 535.7 L1077.1 535.2 L1084.0 534.6 L1093.2 533.8 L1100.1 533.3 L1107.0 532.5 L1116.1 531.5 L1123.0 530.8 L1129.9 530.2 L1139.1 529.2 L1145.9 528.6 L1152.8 527.9 L1162.0 527.0 L1168.9 526.3 L1175.8 525.7 L1184.9 524.8 L1191.8 524.1 L1198.7 523.5 L1207.8 523.0 L1214.5 523.0 L1221.3 523.0 L1230.3 522.9 L1237.0 522.8 L1243.8 522.8 L1252.8 522.7 L1259.6 522.7 M801.3 528.7 L808.2 529.0 L817.2 529.4 L824.1 529.7 L830.9 530.1 L840.0 530.5 L846.8 530.8 L853.6 531.1 L862.7 531.6 L869.5 531.9 L876.3 532.2 L885.4 532.6 L892.3 532.4 L899.1 532.2 L908.3 531.9 L915.1 531.6 L922.0 531.2 L931.1 530.8 L937.9 530.5 L944.7 530.2 L953.9 529.7 L960.7 529.4 L967.5 529.1 L976.7 528.7 L983.5 528.3 L990.3 528.0 L999.4 527.4 L1006.3 527.0 L1013.1 526.7 L1022.3 526.3 L1029.1 526.0 L1036.0 525.7 L1045.1 525.3 L1051.9 524.8 L1058.8 524.2 L1067.9 523.4 L1074.7 522.8 L1081.6 522.3 L1090.7 521.5 L1097.5 520.9 L1104.3 520.2 L1113.4 519.2 L1120.3 518.5 L1127.1 517.9 L1136.2 517.0 L1143.0 516.4 L1149.9 515.8 L1159.0 514.9 L1165.8 514.3 L1172.6 513.7 L1181.7 512.8 L1188.6 512.2 L1195.4 511.6 L1204.4 511.4 L1211.0 511.8 L1217.7 512.1 L1226.5 512.6 L1233.2 512.9 L1239.8 513.2 L1248.7 513.7 L1255.3 514.0 M801.1 520.6 L807.9 520.7 L816.9 520.9 L823.7 521.1 L830.4 521.3 L839.5 521.5 L846.2 521.6 L853.0 521.8 L862.0 522.0 L868.8 522.2 L875.6 522.3 L884.6 522.5 L891.4 522.2 L898.2 522.0 L907.3 521.5 L914.0 521.1 L920.8 520.7 L929.8 520.1 L936.6 519.7 L943.4 519.2 L952.4 518.6 L959.2 518.2 L966.0 517.8 L975.0 517.2 L981.8 516.8 L988.6 516.3 L997.6 515.7 L1004.4 515.2 L1011.2 514.7 L1020.2 514.2 L1027.0 513.9 L1033.8 513.5 L1042.9 513.0 L1049.7 512.5 L1056.5 511.9 L1065.5 511.1 L1072.3 510.5 L1079.1 509.9 L1088.1 509.2 L1094.9 508.6 L1101.7 507.8 L1110.7 506.9 L1117.5 506.2 L1124.3 505.6 L1133.3 504.8 L1140.1 504.2 L1146.9 503.6 L1155.9 502.8 L1162.7 502.3 L1169.5 501.7 L1178.5 500.9 L1185.3 500.3 L1192.1 499.7 L1201.0 499.8 L1207.5 500.5 L1214.1 501.3 L1222.8 502.2 L1229.3 502.9 L1235.9 503.7 L1244.6 504.6 L1251.1 505.3 M800.9 512.4 L807.6 512.4 L816.6 512.4 L823.3 512.4 L830.0 512.4 L839.0 512.4 L845.7 512.4 L852.4 512.4 L861.4 512.4 L868.1 512.4 L874.8 512.4 L883.8 512.4 L890.5 512.1 L897.3 511.7 L906.2 511.2 L913.0 510.6 L919.7 510.1 L928.6 509.4 L935.3 508.8 L942.1 508.3 L951.0 507.6 L957.7 507.0 L964.5 506.5 L973.4 505.8 L980.1 505.2 L986.9 504.7 L995.8 503.9 L1002.5 503.3 L1009.3 502.7 L1018.2 502.2 L1025.0 501.8 L1031.7 501.3 L1040.7 500.8 L1047.4 500.2 L1054.2 499.6 L1063.2 498.8 L1069.9 498.2 L1076.6 497.6 L1085.6 496.8 L1092.3 496.2 L1099.0 495.5 L1108.0 494.6 L1114.7 494.0 L1121.5 493.4 L1130.5 492.6 L1137.2 492.1 L1143.9 491.5 L1152.9 490.8 L1159.6 490.2 L1166.4 489.7 L1175.3 488.9 L1182.1 488.4 L1188.8 487.8 L1197.6 488.2 L1204.0 489.3 L1210.5 490.4 L1219.0 491.9 L1225.5 493.0 L1231.9 494.1 L1240.5 495.6 L1246.9 496.7 M800.7 504.3 L807.3 504.2 L816.2 503.9 L822.9 503.8 L829.6 503.6 L838.5 503.4 L845.1 503.2 L851.8 503.1 L860.7 502.9 L867.4 502.7 L874.0 502.5 L882.9 502.3 L889.6 501.9 L896.3 501.4 L905.2 500.8 L911.9 500.1 L918.5 499.5 L927.4 498.6 L934.1 498.0 L940.7 497.3 L949.6 496.5 L956.3 495.8 L962.9 495.2 L971.8 494.3 L978.5 493.7 L985.1 493.0 L994.0 492.1 L1000.7 491.4 L1007.3 490.8 L1016.2 490.1 L1022.9 489.6 L1029.6 489.2 L1038.5 488.5 L1045.2 488.0 L1051.9 487.3 L1060.8 486.5 L1067.5 485.9 L1074.1 485.3 L1083.1 484.5 L1089.7 483.9 L1096.4 483.2 L1105.3 482.3 L1112.0 481.7 L1118.7 481.1 L1127.6 480.4 L1134.3 479.9 L1141.0 479.4 L1149.9 478.7 L1156.6 478.2 L1163.2 477.7 L1172.2 477.0 L1178.8 476.4 L1185.5 475.9 L1194.2 476.6 L1200.5 478.1 L1206.8 479.6 L1215.3 481.6 L1221.6 483.0 L1227.9 484.5 L1236.3 486.5 L1242.7 488.0 M800.4 496.2 L807.1 495.9 L815.9 495.5 L822.5 495.1 L829.1 494.8 L838.0 494.4 L844.6 494.0 L851.2 493.7 L860.0 493.3 L866.6 493.0 L873.3 492.6 L882.1 492.2 L888.7 491.7 L895.4 491.2 L904.2 490.4 L910.8 489.7 L917.4 488.9 L926.2 487.9 L932.8 487.1 L939.4 486.4 L948.2 485.4 L954.8 484.6 L961.4 483.9 L970.2 482.9 L976.8 482.1 L983.4 481.3 L992.2 480.3 L998.8 479.5 L1005.4 478.8 L1014.2 478.1 L1020.9 477.5 L1027.5 477.0 L1036.3 476.3 L1043.0 475.7 L1049.6 475.1 L1058.4 474.2 L1065.1 473.6 L1071.7 473.0 L1080.5 472.1 L1087.1 471.5 L1093.8 470.8 L1102.6 469.9 L1109.2 469.4 L1115.9 468.9 L1124.7 468.2 L1131.3 467.7 L1138.0 467.3 L1146.8 466.6 L1153.5 466.1 L1160.1 465.6 L1169.0 465.0 L1175.6 464.5 L1182.2 464.0 L1190.8 465.0 L1197.0 466.9 L1203.2 468.7 L1211.5 471.2 L1217.7 473.1 L1223.9 475.0 L1232.2 477.5 L1238.4 479.3 M800.2 488.1 L806.8 487.6 L815.6 487.0 L822.1 486.5 L828.7 486.0 L837.5 485.3 L844.0 484.8 L850.6 484.4 L859.4 483.7 L865.9 483.2 L872.5 482.7 L881.3 482.1 L887.8 481.5 L894.4 480.9 L903.2 480.0 L909.7 479.2 L916.3 478.3 L925.0 477.2 L931.5 476.3 L938.1 475.4 L946.8 474.3 L953.3 473.4 L959.9 472.6 L968.6 471.4 L975.1 470.5 L981.7 469.7 L990.4 468.5 L996.9 467.6 L1003.5 466.8 L1012.2 466.0 L1018.8 465.4 L1025.4 464.8 L1034.2 464.1 L1040.7 463.4 L1047.3 462.8 L1056.1 461.9 L1062.6 461.3 L1069.2 460.6 L1078.0 459.8 L1084.5 459.2 L1091.1 458.5 L1099.9 457.6 L1106.5 457.1 L1113.1 456.6 L1121.8 456.0 L1128.4 455.6 L1135.0 455.1 L1143.8 454.5 L1150.4 454.1 L1157.0 453.6 L1165.8 453.0 L1172.4 452.6 L1178.9 452.2 L1187.4 453.4 L1193.5 455.6 L1199.6 457.9 L1207.8 460.9 L1213.9 463.2 L1220.0 465.4 L1228.1 468.4 L1234.2 470.7 M800.0 480.0 L806.5 479.3 L815.2 478.5 L821.7 477.8 L828.3 477.2 L837.0 476.3 L843.5 475.7 L850.0 475.0 L858.7 474.1 L865.2 473.5 L871.7 472.8 L880.4 472.0 L886.9 471.3 L893.5 470.7 L902.1 469.7 L908.6 468.7 L915.1 467.7 L923.8 466.4 L930.2 465.5 L936.7 464.5 L945.4 463.2 L951.8 462.2 L958.3 461.3 L967.0 460.0 L973.4 459.0 L979.9 458.0 L988.6 456.7 L995.0 455.7 L1001.5 454.8 L1010.2 454.0 L1016.7 453.3 L1023.3 452.7 L1032.0 451.8 L1038.5 451.2 L1045.0 450.5 L1053.7 449.6 L1060.2 449.0 L1066.7 448.3 L1075.4 447.5 L1082.0 446.8 L1088.5 446.2 L1097.2 445.3 L1103.7 444.8 L1110.2 444.4 L1119.0 443.8 L1125.5 443.4 L1132.0 443.0 L1140.8 442.5 L1147.3 442.0 L1153.9 441.6 L1162.6 441.1 L1169.1 440.7 L1175.7 440.3 L1184.0 441.8 L1190.0 444.4 L1196.0 447.0 L1204.0 450.6 L1210.0 453.2 L1216.0 455.8 L1224.0 459.4 L1230.0 462.0 M802.0 553.0 L801.8 546.9 L801.7 540.8 L801.5 534.8 L801.3 528.7 L801.2 522.6 L801.0 516.5 L800.8 510.4 L800.7 504.3 L800.5 498.2 L800.3 492.2 L800.2 486.1 L800.0 480.0 M818.3 554.9 L818.0 548.5 L817.8 542.2 L817.5 535.8 L817.2 529.4 L817.0 523.1 L816.7 516.7 L816.5 510.3 L816.2 503.9 L816.0 497.6 L815.7 491.2 L815.5 484.8 L815.2 478.5 M834.5 556.8 L834.2 550.1 L833.8 543.5 L833.5 536.8 L833.2 530.2 L832.8 523.5 L832.5 516.9 L832.1 510.2 L831.8 503.6 L831.5 496.9 L831.1 490.3 L830.8 483.6 L830.4 477.0 M850.8 558.7 L850.4 551.7 L849.9 544.8 L849.5 537.9 L849.1 530.9 L848.6 524.0 L848.2 517.1 L847.8 510.1 L847.4 503.2 L846.9 496.2 L846.5 489.3 L846.1 482.4 L845.6 475.4 M869.4 560.8 L868.8 553.6 L868.3 546.3 L867.8 539.0 L867.3 531.8 L866.7 524.5 L866.2 517.3 L865.7 510.0 L865.1 502.7 L864.6 495.5 L864.1 488.2 L863.6 481.0 L863.0 473.7 M885.6 562.7 L885.0 555.2 L884.4 547.6 L883.8 540.1 L883.2 532.5 L882.6 525.0 L881.9 517.4 L881.3 509.9 L880.7 502.4 L880.1 494.8 L879.5 487.3 L878.9 479.7 L878.3 472.2 M902.0 563.0 L901.3 555.3 L900.6 547.6 L899.9 539.9 L899.1 532.2 L898.4 524.5 L897.7 516.8 L897.0 509.1 L896.3 501.4 L895.6 493.7 L894.9 486.0 L894.2 478.3 L893.5 470.7 M918.4 563.0 L917.5 555.1 L916.7 547.3 L915.9 539.4 L915.1 531.6 L914.3 523.7 L913.5 515.9 L912.7 508.0 L911.9 500.1 L911.1 492.3 L910.3 484.4 L909.4 476.6 L908.6 468.7 M934.7 563.0 L933.8 555.0 L932.9 546.9 L932.0 538.9 L931.1 530.8 L930.2 522.8 L929.2 514.7 L928.3 506.7 L927.4 498.6 L926.5 490.6 L925.6 482.5 L924.7 474.5 L923.8 466.4 M951.1 563.0 L950.1 554.8 L949.1 546.5 L948.0 538.3 L947.0 530.1 L946.0 521.8 L945.0 513.6 L944.0 505.3 L942.9 497.1 L941.9 488.9 L940.9 480.6 L939.9 472.4 L938.9 464.2 M967.5 563.0 L966.3 554.6 L965.2 546.2 L964.1 537.7 L963.0 529.3 L961.9 520.9 L960.7 512.5 L959.6 504.0 L958.5 495.6 L957.4 487.2 L956.2 478.8 L955.1 470.3 L954.0 461.9 M986.2 563.0 L984.9 554.4 L983.7 545.7 L982.5 537.1 L981.2 528.4 L980.0 519.8 L978.7 511.2 L977.5 502.5 L976.2 493.9 L975.0 485.2 L973.8 476.6 L972.5 467.9 L971.3 459.3 M1002.5 562.8 L1001.2 554.0 L999.9 545.2 L998.5 536.4 L997.2 527.6 L995.8 518.8 L994.5 509.9 L993.1 501.1 L991.8 492.3 L990.4 483.5 L989.1 474.7 L987.7 465.9 L986.4 457.0 M1018.9 562.6 L1017.5 553.6 L1016.0 544.6 L1014.6 535.6 L1013.1 526.7 L1011.7 517.7 L1010.2 508.7 L1008.8 499.7 L1007.3 490.8 L1005.9 481.8 L1004.4 472.8 L1003.0 463.8 L1001.5 454.8 M1035.3 562.3 L1033.7 553.2 L1032.2 544.1 L1030.6 535.1 L1029.1 526.0 L1027.6 516.9 L1026.0 507.8 L1024.5 498.7 L1022.9 489.6 L1021.4 480.6 L1019.8 471.5 L1018.3 462.4 L1016.7 453.3 M1051.7 562.0 L1050.0 552.8 L1048.4 543.7 L1046.7 534.5 L1045.1 525.3 L1043.4 516.1 L1041.8 506.9 L1040.2 497.7 L1038.5 488.5 L1036.9 479.4 L1035.2 470.2 L1033.6 461.0 L1032.0 451.8 M1068.0 560.8 L1066.2 551.6 L1064.5 542.4 L1062.8 533.2 L1061.0 524.0 L1059.3 514.8 L1057.6 505.6 L1055.8 496.4 L1054.1 487.1 L1052.4 477.9 L1050.6 468.7 L1048.9 459.5 L1047.2 450.3 M1084.3 559.6 L1082.5 550.4 L1080.6 541.1 L1078.8 531.9 L1077.0 522.6 L1075.2 513.4 L1073.3 504.2 L1071.5 494.9 L1069.7 485.7 L1067.9 476.5 L1066.0 467.2 L1064.2 458.0 L1062.4 448.8 M1103.0 558.2 L1101.0 548.9 L1099.1 539.6 L1097.2 530.4 L1095.2 521.1 L1093.3 511.9 L1091.4 502.6 L1089.4 493.3 L1087.5 484.1 L1085.6 474.8 L1083.6 465.5 L1081.7 456.3 L1079.8 447.0 M1119.2 556.4 L1117.2 547.2 L1115.2 538.0 L1113.2 528.7 L1111.2 519.5 L1109.1 510.2 L1107.1 501.0 L1105.1 491.7 L1103.1 482.5 L1101.1 473.2 L1099.0 464.0 L1097.0 454.7 L1095.0 445.5 M1135.5 554.7 L1133.4 545.5 L1131.3 536.3 L1129.2 527.1 L1127.1 517.9 L1125.0 508.7 L1122.9 499.5 L1120.8 490.3 L1118.7 481.1 L1116.6 471.9 L1114.5 462.7 L1112.4 453.6 L1110.2 444.4 M1151.8 552.9 L1149.6 543.8 L1147.4 534.6 L1145.2 525.5 L1143.0 516.4 L1140.8 507.3 L1138.6 498.2 L1136.5 489.0 L1134.3 479.9 L1132.1 470.8 L1129.9 461.7 L1127.7 452.5 L1125.5 443.4 M1168.1 551.2 L1165.8 542.1 L1163.5 533.0 L1161.2 524.0 L1159.0 514.9 L1156.7 505.9 L1154.4 496.8 L1152.1 487.7 L1149.9 478.7 L1147.6 469.6 L1145.3 460.6 L1143.0 451.5 L1140.8 442.5 M1184.3 549.4 L1182.0 540.4 L1179.6 531.4 L1177.3 522.5 L1174.9 513.5 L1172.5 504.5 L1170.2 495.5 L1167.8 486.5 L1165.5 477.5 L1163.1 468.5 L1160.7 459.5 L1158.4 450.5 L1156.0 441.5 M1200.6 547.7 L1198.2 538.8 L1195.7 529.9 L1193.3 520.9 L1190.8 512.0 L1188.4 503.1 L1186.0 494.1 L1183.5 485.2 L1181.1 476.3 L1178.6 467.3 L1176.2 458.4 L1173.7 449.5 L1171.3 440.5 M1219.2 545.7 L1216.6 537.2 L1214.0 528.7 L1211.4 520.2 L1208.8 511.7 L1206.2 503.1 L1203.6 494.6 L1201.0 486.1 L1198.4 477.6 L1195.8 469.1 L1193.2 460.6 L1190.6 452.0 L1188.0 443.5 M1235.5 543.8 L1232.7 536.0 L1229.9 528.1 L1227.1 520.3 L1224.3 512.4 L1221.5 504.6 L1218.7 496.8 L1216.0 488.9 L1213.2 481.1 L1210.4 473.2 L1207.6 465.4 L1204.8 457.5 L1202.0 449.7 M1251.7 541.9 L1248.8 534.7 L1245.8 527.6 L1242.8 520.4 L1239.8 513.2 L1236.9 506.0 L1233.9 498.9 L1230.9 491.7 L1227.9 484.5 L1224.9 477.4 L1222.0 470.2 L1219.0 463.0 L1216.0 455.8 M1268.0 540.0 L1264.8 533.5 L1261.7 527.0 L1258.5 520.5 L1255.3 514.0 L1252.2 507.5 L1249.0 501.0 L1245.8 494.5 L1242.7 488.0 L1239.5 481.5 L1236.3 475.0 L1233.2 468.5 L1230.0 462.0" fill="none" stroke="#f4f4f4" stroke-width="0.6" opacity="0.4"/>
<rect x="934" y="494" width="170" height="40" rx="19" ry="19" transform="rotate(-3 1018 514)" fill="#e2e2e2" stroke="#cdcdcd" stroke-width="1.2"/>
<rect x="940" y="499" width="158" height="30" rx="15" ry="15" transform="rotate(-3 1018 514)" fill="none" stroke="#d4d4d4" stroke-width="1"/>
<ellipse cx="1000" cy="522" rx="45" ry="5" fill="#f8f8f8" opacity="0.7" transform="rotate(-3 1000 522)"/>
<polygon points="833.0,400.0 953.0,393.0 1043.0,457.0 927.0,474.0" fill="#e2e2e2" opacity="0.55"/>
<polyline points="917.0,476.0 920.9,475.2 928.8,473.6 940.6,471.1 956.4,467.9 971.9,465.1 987.3,462.9 1002.5,461.1 1017.5,459.9 1034.4,458.5 1053.1,457.0 1073.8,455.4 1096.2,453.6 1117.8,452.0 1138.2,450.5 1157.8,449.1 1176.2,447.9 1190.1,446.9 1199.4,446.3 1204.0,446.0" fill="none" stroke="#ececec" stroke-width="1.2" opacity="0.8"/>
<polyline points="840.0,548.0 840.3,546.2 840.9,542.8 841.9,537.5 843.1,530.5 845.6,523.4 849.4,516.1 854.4,508.8 860.6,501.2 867.8,494.6 875.9,488.7 885.0,483.6 895.0,479.4 905.0,475.5 915.0,472.0 925.0,468.9 935.0,466.1 948.1,463.8 964.4,461.9 983.8,460.5 1006.2,459.5 1023.1,458.8 1034.4,458.2 1040.0,458.0" fill="none" stroke="#555" stroke-width="0.7" opacity="0.8"/>
<polyline points="960.0,393.0 1010.0,425.0 1043.0,458.0" fill="none" stroke="#555" stroke-width="0.8" />
<polyline points="720.0,345.0 760.0,362.0 830.0,400.0" fill="none" stroke="#666" stroke-width="0.6" stroke-dasharray="1 3"/>
<polyline points="610.0,315.0 720.0,345.0" fill="none" stroke="#777" stroke-width="0.6" stroke-dasharray="1 3"/>
<circle cx="838" cy="312" r="1.6" fill="#333"/>
<polygon points="580.6,177.5 598.0,171.5 619.0,167.6 667.0,162.7 718.0,158.7 770.0,155.7 785.5,155.7 904.0,296.3 817.0,302.0 738.0,308.0 678.6,310.0 597.0,312.0 587.5,268.6 579.6,229.0 577.6,195.0" fill="#000" />
<path d="M580.6 177.5 L583.5 176.5 L587.4 175.1 L590.4 174.1 L593.3 173.1 L597.2 171.8 L600.2 171.1 L603.3 170.5 L607.3 169.8 L610.4 169.2 L613.4 168.6 L617.5 167.9 L620.6 167.4 L623.7 167.1 L627.8 166.7 L630.9 166.4 L633.9 166.1 L638.1 165.7 L641.1 165.3 L644.2 165.0 L648.3 164.6 L651.4 164.3 L654.5 164.0 L658.6 163.6 L661.7 163.2 L664.8 162.9 L668.9 162.5 L672.0 162.3 L675.1 162.1 L679.2 161.7 L682.3 161.5 L685.4 161.3 L689.5 160.9 L692.6 160.7 L695.7 160.4 L699.8 160.1 L702.9 159.9 L706.0 159.6 L710.1 159.3 L713.2 159.1 L716.3 158.8 L720.5 158.6 L723.6 158.4 L726.6 158.2 L730.8 158.0 L733.9 157.8 L737.0 157.6 L741.1 157.4 L744.2 157.2 L747.3 157.0 L751.4 156.8 L754.5 156.6 L757.6 156.4 L761.7 156.2 L764.8 156.0 L767.9 155.8 L772.1 155.7 L775.2 155.7 L778.3 155.7 L782.4 155.7 L785.5 155.7 M583.3 199.9 L586.5 199.1 L590.8 197.9 L594.0 197.0 L597.3 196.2 L601.5 195.0 L604.8 194.4 L608.1 194.0 L612.5 193.3 L615.8 192.8 L619.2 192.3 L623.6 191.7 L626.9 191.3 L630.2 191.0 L634.7 190.6 L638.0 190.3 L641.4 190.1 L645.8 189.7 L649.2 189.4 L652.5 189.1 L656.9 188.7 L660.3 188.4 L663.6 188.1 L668.1 187.8 L671.4 187.5 L674.8 187.2 L679.2 186.8 L682.6 186.6 L685.9 186.4 L690.4 186.0 L693.7 185.8 L697.0 185.5 L701.5 185.1 L704.8 184.9 L708.2 184.6 L712.6 184.3 L716.0 184.0 L719.3 183.8 L723.8 183.4 L727.1 183.2 L730.5 182.9 L734.9 182.6 L738.3 182.4 L741.6 182.2 L746.1 181.9 L749.4 181.7 L752.8 181.5 L757.3 181.2 L760.6 181.0 L763.9 180.8 L768.4 180.6 L771.8 180.4 L775.1 180.2 L779.6 179.9 L782.9 179.7 L786.3 179.5 L790.7 179.4 L794.1 179.3 L797.4 179.3 L801.9 179.2 L805.2 179.1 M586.1 222.3 L589.6 221.6 L594.2 220.7 L597.7 220.0 L601.2 219.2 L605.9 218.3 L609.4 217.8 L613.0 217.4 L617.7 216.8 L621.3 216.4 L624.9 216.0 L629.6 215.5 L633.2 215.1 L636.8 214.9 L641.6 214.5 L645.2 214.3 L648.8 214.1 L653.6 213.7 L657.2 213.4 L660.8 213.2 L665.6 212.8 L669.1 212.6 L672.7 212.3 L677.5 212.0 L681.1 211.7 L684.7 211.4 L689.5 211.1 L693.1 210.9 L696.7 210.7 L701.5 210.3 L705.1 210.0 L708.7 209.7 L713.5 209.4 L717.1 209.1 L720.7 208.8 L725.5 208.4 L729.1 208.2 L732.6 207.9 L737.4 207.5 L741.0 207.2 L744.6 207.0 L749.4 206.6 L753.0 206.4 L756.6 206.1 L761.4 205.9 L765.0 205.6 L768.6 205.4 L773.4 205.1 L777.0 204.9 L780.6 204.7 L785.4 204.4 L789.0 204.2 L792.6 203.9 L797.4 203.7 L801.0 203.4 L804.6 203.2 L809.4 203.0 L813.0 202.9 L816.6 202.8 L821.4 202.7 L825.0 202.6 M588.8 244.8 L592.6 244.2 L597.6 243.4 L601.4 242.9 L605.1 242.3 L610.2 241.6 L614.0 241.2 L617.8 240.8 L622.9 240.4 L626.8 240.0 L630.6 239.7 L635.7 239.2 L639.5 239.0 L643.4 238.8 L648.5 238.5 L652.4 238.3 L656.2 238.0 L661.3 237.7 L665.2 237.5 L669.0 237.3 L674.2 236.9 L678.0 236.7 L681.9 236.5 L687.0 236.2 L690.8 235.9 L694.7 235.7 L699.8 235.4 L703.7 235.2 L707.5 235.0 L712.6 234.6 L716.5 234.3 L720.3 234.0 L725.5 233.6 L729.3 233.3 L733.1 233.0 L738.3 232.6 L742.1 232.3 L746.0 232.0 L751.1 231.6 L754.9 231.3 L758.8 231.0 L763.9 230.6 L767.8 230.4 L771.6 230.1 L776.7 229.8 L780.6 229.6 L784.4 229.3 L789.6 229.0 L793.4 228.8 L797.3 228.5 L802.4 228.2 L806.2 228.0 L810.1 227.7 L815.2 227.4 L819.1 227.2 L822.9 226.9 L828.1 226.7 L831.9 226.5 L835.8 226.4 L840.9 226.2 L844.8 226.0 M591.5 267.2 L595.6 266.8 L601.0 266.2 L605.0 265.8 L609.1 265.4 L614.5 264.8 L618.6 264.5 L622.7 264.3 L628.1 263.9 L632.2 263.6 L636.3 263.4 L641.7 263.0 L645.8 262.8 L649.9 262.6 L655.4 262.4 L659.5 262.2 L663.6 262.0 L669.1 261.7 L673.2 261.5 L677.3 261.3 L682.8 261.1 L686.9 260.8 L691.0 260.6 L696.4 260.4 L700.5 260.2 L704.6 259.9 L710.1 259.7 L714.2 259.5 L718.3 259.3 L723.8 258.8 L727.9 258.5 L732.0 258.2 L737.4 257.8 L741.5 257.5 L745.6 257.2 L751.1 256.7 L755.2 256.4 L759.3 256.1 L764.7 255.7 L768.8 255.4 L772.9 255.1 L778.4 254.7 L782.5 254.4 L786.6 254.1 L792.1 253.7 L796.2 253.5 L800.3 253.2 L805.7 252.9 L809.8 252.6 L813.9 252.3 L819.4 252.0 L823.5 251.7 L827.6 251.5 L833.1 251.1 L837.2 250.9 L841.3 250.6 L846.7 250.3 L850.8 250.1 L854.9 249.9 L860.4 249.6 L864.5 249.4 M594.3 289.6 L598.6 289.3 L604.4 289.0 L608.7 288.7 L613.0 288.4 L618.8 288.1 L623.2 287.9 L627.5 287.7 L633.3 287.4 L637.7 287.3 L642.0 287.1 L647.8 286.8 L652.2 286.7 L656.5 286.5 L662.3 286.3 L666.7 286.2 L671.0 286.0 L676.8 285.8 L681.2 285.6 L685.6 285.4 L691.4 285.2 L695.7 285.0 L700.1 284.8 L705.9 284.6 L710.2 284.4 L714.6 284.2 L720.4 284.0 L724.8 283.8 L729.1 283.6 L734.9 283.1 L739.3 282.8 L743.6 282.5 L749.4 282.0 L753.7 281.7 L758.1 281.3 L763.9 280.9 L768.2 280.6 L772.6 280.2 L778.4 279.8 L782.7 279.5 L787.1 279.1 L792.9 278.7 L797.2 278.4 L801.6 278.1 L807.4 277.7 L811.7 277.4 L816.1 277.1 L821.9 276.7 L826.2 276.5 L830.6 276.2 L836.4 275.8 L840.7 275.5 L845.1 275.2 L850.9 274.9 L855.2 274.6 L859.6 274.3 L865.4 274.0 L869.7 273.7 L874.1 273.5 L879.9 273.1 L884.2 272.9 M597.0 312.0 L601.6 311.9 L607.8 311.7 L612.4 311.6 L617.0 311.5 L623.1 311.4 L627.7 311.2 L632.3 311.1 L638.5 311.0 L643.1 310.9 L647.7 310.8 L653.9 310.6 L658.5 310.5 L663.1 310.4 L669.2 310.2 L673.8 310.1 L678.5 310.0 L684.6 309.8 L689.2 309.6 L693.8 309.5 L700.0 309.3 L704.6 309.1 L709.2 309.0 L715.3 308.8 L719.9 308.6 L724.6 308.5 L730.7 308.2 L735.3 308.1 L739.9 307.9 L746.0 307.4 L750.6 307.0 L755.2 306.7 L761.4 306.2 L766.0 305.9 L770.6 305.5 L776.7 305.1 L781.3 304.7 L785.9 304.4 L792.0 303.9 L796.6 303.5 L801.2 303.2 L807.4 302.7 L812.0 302.4 L816.6 302.0 L822.7 301.6 L827.3 301.3 L831.9 301.0 L838.0 300.6 L842.6 300.3 L847.2 300.0 L853.4 299.6 L858.0 299.3 L862.6 299.0 L868.7 298.6 L873.3 298.3 L877.9 298.0 L884.1 297.6 L888.7 297.3 L893.3 297.0 L899.4 296.6 L904.0 296.3 M580.6 177.5 L582.0 188.7 L583.3 199.9 L584.7 211.1 L586.1 222.3 L587.4 233.5 L588.8 244.8 L590.2 256.0 L591.5 267.2 L592.9 278.4 L594.3 289.6 L595.6 300.8 L597.0 312.0 M585.5 175.8 L587.1 187.1 L588.7 198.5 L590.3 209.8 L591.9 221.1 L593.5 232.5 L595.1 243.8 L596.7 255.1 L598.3 266.5 L599.9 277.8 L601.5 289.1 L603.1 300.5 L604.7 311.8 M591.4 173.8 L593.2 185.3 L595.1 196.8 L597.0 208.2 L598.9 219.7 L600.7 231.2 L602.6 242.7 L604.5 254.2 L606.4 265.7 L608.3 277.1 L610.1 288.6 L612.0 300.1 L613.9 311.6 M598.2 171.5 L600.4 183.1 L602.6 194.8 L604.8 206.4 L607.0 218.1 L609.2 229.7 L611.4 241.4 L613.6 253.0 L615.8 264.7 L618.0 276.4 L620.3 288.0 L622.5 299.7 L624.7 311.3 M608.4 169.6 L611.0 181.4 L613.6 193.1 L616.3 204.9 L618.9 216.7 L621.6 228.5 L624.2 240.3 L626.8 252.0 L629.5 263.8 L632.1 275.6 L634.8 287.4 L637.4 299.2 L640.0 310.9 M622.6 167.2 L625.9 179.2 L629.1 191.1 L632.4 203.0 L635.6 215.0 L638.8 226.9 L642.1 238.8 L645.3 250.8 L648.6 262.7 L651.8 274.6 L655.1 286.6 L658.3 298.5 L661.5 310.4 M641.1 165.3 L645.2 177.4 L649.2 189.4 L653.2 201.4 L657.2 213.4 L661.2 225.5 L665.2 237.5 L669.2 249.5 L673.2 261.5 L677.2 273.6 L681.2 285.6 L685.2 297.6 L689.2 309.6 M661.7 163.2 L666.6 175.4 L671.4 187.5 L676.3 199.6 L681.1 211.7 L686.0 223.8 L690.8 235.9 L695.7 248.0 L700.5 260.2 L705.4 272.3 L710.2 284.4 L715.1 296.5 L719.9 308.6 M683.3 161.4 L689.1 173.5 L694.8 185.7 L700.6 197.8 L706.3 209.9 L712.0 222.0 L717.8 234.2 L723.5 246.3 L729.2 258.4 L735.0 270.5 L740.7 282.7 L746.4 294.8 L752.2 306.9 M707.1 159.6 L713.8 171.6 L720.4 183.7 L727.1 195.7 L733.8 207.8 L740.5 219.8 L747.2 231.9 L753.9 244.0 L760.6 256.0 L767.3 268.1 L774.0 280.1 L780.7 292.2 L787.4 304.2 M730.8 158.0 L738.4 169.9 L746.1 181.9 L753.8 193.9 L761.4 205.9 L769.1 217.8 L776.7 229.8 L784.4 241.8 L792.1 253.7 L799.7 265.7 L807.4 277.7 L815.0 289.7 L822.7 301.6 M753.5 156.7 L762.1 168.5 L770.6 180.4 L779.2 192.3 L787.8 204.2 L796.4 216.1 L805.0 228.0 L813.5 239.9 L822.1 251.8 L830.7 263.7 L839.3 275.6 L847.9 287.5 L856.4 299.4 M773.1 155.7 L782.5 167.5 L791.8 179.3 L801.2 191.2 L810.6 203.0 L820.0 214.8 L829.3 226.6 L838.7 238.4 L848.1 250.2 L857.5 262.1 L866.8 273.9 L876.2 285.7 L885.6 297.5 M785.5 155.7 L795.4 167.4 L805.2 179.1 L815.1 190.8 L825.0 202.6 L834.9 214.3 L844.8 226.0 L854.6 237.7 L864.5 249.4 L874.4 261.1 L884.2 272.9 L894.1 284.6 L904.0 296.3" fill="none" stroke="#f4f4f4" stroke-width="0.95" opacity="1"/>
<defs><linearGradient id="gTopBand" gradientUnits="userSpaceOnUse" x1="560" y1="0" x2="790" y2="0"><stop offset="0" stop-color="#d0d0d0"/><stop offset="0.5" stop-color="#dedede"/><stop offset="1" stop-color="#f2f2f2"/></linearGradient><linearGradient id="gPil" gradientUnits="userSpaceOnUse" x1="553" y1="240" x2="584" y2="236"><stop offset="0" stop-color="#f0f0f0"/><stop offset="0.3" stop-color="#d2d2d2"/><stop offset="0.7" stop-color="#c6c6c6"/><stop offset="1" stop-color="#e0e0e0"/></linearGradient></defs>
<polygon points="548.0,190.0 550.0,183.5 558.0,176.0 576.0,167.0 619.0,155.0 698.0,144.0 770.0,139.5 785.5,156.0 785.5,155.7 770.0,155.7 718.0,158.7 667.0,162.7 619.0,167.6 598.0,171.5 580.6,177.5 577.6,195.0 579.6,229.0 587.5,268.6 597.0,312.0 577.6,312.5 567.7,272.6 557.8,229.0" fill="url(#gPil)" />
<polygon points="558.0,176.0 576.0,167.0 619.0,155.0 698.0,144.0 770.0,139.5 785.5,156.0 785.5,155.7 770.0,155.7 718.0,158.7 667.0,162.7 619.0,167.6 598.0,171.5 590.0,176.0" fill="url(#gTopBand)" />
<polyline points="548.0,190.0 550.0,183.5 558.0,176.0 576.0,167.0 619.0,155.0 698.0,144.0 770.0,139.5" fill="none" stroke="#f8f8f8" stroke-width="1.2" />
<polygon points="443.0,284.0 443.0,283.8 443.1,283.4 443.2,282.9 443.3,282.1 443.5,281.2 443.7,280.1 443.9,278.8 444.1,277.2 444.5,275.8 445.1,274.5 445.9,273.2 446.8,272.0 448.0,270.9 449.2,269.9 450.7,268.9 452.3,268.1 454.0,267.3 455.9,266.6 457.8,266.0 459.9,265.5 462.1,265.1 464.4,264.8 466.8,264.6 469.2,264.4 471.7,264.4 474.2,264.4 476.7,264.5 479.1,264.7 481.5,265.0 483.9,265.3 486.3,265.8 488.7,266.2 490.9,266.8 493.1,267.5 495.1,268.2 496.9,269.0 498.7,269.9 500.3,270.9 501.8,271.9 503.2,273.1 504.4,274.2 505.4,275.4 506.3,276.6 507.0,277.9 507.5,279.2 507.8,280.5 508.0,281.8 508.0,283.2 507.9,284.5 507.6,285.8 507.2,287.0 506.8,288.2 506.1,289.4 505.4,290.5 504.5,291.5 503.5,292.5 502.5,293.4 501.5,294.3 500.5,295.1 499.5,295.9 498.5,296.6 497.5,297.2 496.5,297.8 495.5,298.2 494.8,298.9 494.2,299.6 494.0,300.5 494.0,301.5 494.2,302.6 494.8,303.9 495.5,305.2 496.5,306.8 497.6,308.3 498.7,309.9 499.9,311.6 501.1,313.4 502.4,315.2 503.8,317.1 505.2,319.0 506.8,321.0 508.0,322.7 508.9,324.2 509.6,325.4 509.9,326.3 510.0,327.0 509.8,327.4 509.4,327.6 508.6,327.4 507.8,327.1 506.8,326.6 505.8,325.9 504.7,325.1 503.5,324.0 502.2,322.8 500.8,321.3 499.2,319.7 497.8,318.1 496.4,316.5 495.1,315.0 493.9,313.5 492.7,312.0 491.6,310.6 490.5,309.2 489.5,307.8 488.4,306.6 487.1,305.5 485.8,304.5 484.2,303.7 482.6,303.0 480.9,302.5 479.0,302.1 477.0,301.9 475.0,301.6 472.9,301.2 470.8,300.8 468.7,300.4 466.5,299.9 464.3,299.4 462.1,298.8 459.9,298.2 457.8,297.5 455.8,296.6 454.0,295.7 452.3,294.6 450.7,293.4 449.3,292.1 448.1,290.8 446.9,289.2 446.0,287.9 445.1,286.8 444.4,285.9 443.8,285.1 443.4,284.6 443.1,284.2 443.0,284.0" fill="url(#gMirror)" />
<clipPath id="cMir"><polygon points="443.0,284.0 443.0,283.8 443.1,283.4 443.2,282.9 443.3,282.1 443.5,281.2 443.7,280.1 443.9,278.8 444.1,277.2 444.5,275.8 445.1,274.5 445.9,273.2 446.8,272.0 448.0,270.9 449.2,269.9 450.7,268.9 452.3,268.1 454.0,267.3 455.9,266.6 457.8,266.0 459.9,265.5 462.1,265.1 464.4,264.8 466.8,264.6 469.2,264.4 471.7,264.4 474.2,264.4 476.7,264.5 479.1,264.7 481.5,265.0 483.9,265.3 486.3,265.8 488.7,266.2 490.9,266.8 493.1,267.5 495.1,268.2 496.9,269.0 498.7,269.9 500.3,270.9 501.8,271.9 503.2,273.1 504.4,274.2 505.4,275.4 506.3,276.6 507.0,277.9 507.5,279.2 507.8,280.5 508.0,281.8 508.0,283.2 507.9,284.5 507.6,285.8 507.2,287.0 506.8,288.2 506.1,289.4 505.4,290.5 504.5,291.5 503.5,292.5 502.5,293.4 501.5,294.3 500.5,295.1 499.5,295.9 498.5,296.6 497.5,297.2 496.5,297.8 495.5,298.2 494.8,298.9 494.2,299.6 494.0,300.5 494.0,301.5 494.2,302.6 494.8,303.9 495.5,305.2 496.5,306.8 497.6,308.3 498.7,309.9 499.9,311.6 501.1,313.4 502.4,315.2 503.8,317.1 505.2,319.0 506.8,321.0 508.0,322.7 508.9,324.2 509.6,325.4 509.9,326.3 510.0,327.0 509.8,327.4 509.4,327.6 508.6,327.4 507.8,327.1 506.8,326.6 505.8,325.9 504.7,325.1 503.5,324.0 502.2,322.8 500.8,321.3 499.2,319.7 497.8,318.1 496.4,316.5 495.1,315.0 493.9,313.5 492.7,312.0 491.6,310.6 490.5,309.2 489.5,307.8 488.4,306.6 487.1,305.5 485.8,304.5 484.2,303.7 482.6,303.0 480.9,302.5 479.0,302.1 477.0,301.9 475.0,301.6 472.9,301.2 470.8,300.8 468.7,300.4 466.5,299.9 464.3,299.4 462.1,298.8 459.9,298.2 457.8,297.5 455.8,296.6 454.0,295.7 452.3,294.6 450.7,293.4 449.3,292.1 448.1,290.8 446.9,289.2 446.0,287.9 445.1,286.8 444.4,285.9 443.8,285.1 443.4,284.6 443.1,284.2 443.0,284.0"/></clipPath>
<g clip-path="url(#cMir)" stroke="#f2f2f2" stroke-width="0.7" stroke-dasharray="0.8 1.4" fill="none" opacity="0.9">
<ellipse cx="476" cy="283.0" rx="34.0" ry="19.0"/>
<ellipse cx="476" cy="283.0" rx="31.2" ry="17.4"/>
<ellipse cx="476" cy="283.0" rx="28.4" ry="15.9"/>
<ellipse cx="476" cy="283.0" rx="25.6" ry="14.3"/>
<ellipse cx="476" cy="283.0" rx="22.8" ry="12.8"/>
<ellipse cx="476" cy="283.0" rx="20.0" ry="11.2"/>
<ellipse cx="476" cy="283.0" rx="17.2" ry="9.7"/>
<ellipse cx="476" cy="283.0" rx="14.4" ry="8.2"/>
<ellipse cx="476" cy="283.0" rx="11.6" ry="6.6"/>
<ellipse cx="476" cy="283.0" rx="8.8" ry="5.0"/>
<ellipse cx="476" cy="283.0" rx="6.0" ry="3.5"/>
<ellipse cx="476" cy="283.0" rx="3.2" ry="1.9"/>
</g>
<rect x="400" y="326" width="15" height="17" rx="3" fill="#d4d4d4" stroke="#f0f0f0" stroke-width="0.8" transform="rotate(12 407 334)"/>
<ellipse cx="588" cy="440" rx="6" ry="11" fill="#b8b8b8" stroke="#eee" stroke-width="0.8" transform="rotate(-12 588 440)"/>
<polyline points="595.0,440.0 604.0,440.0" fill="none" stroke="#e4e4e4" stroke-width="0.5" />
<polyline points="592.9,448.5 599.3,454.1" fill="none" stroke="#e4e4e4" stroke-width="0.5" />
<polyline points="588.0,452.0 588.0,460.0" fill="none" stroke="#e4e4e4" stroke-width="0.5" />
<polyline points="583.1,448.5 576.7,454.1" fill="none" stroke="#e4e4e4" stroke-width="0.5" />
<polyline points="581.0,440.0 572.0,440.0" fill="none" stroke="#e4e4e4" stroke-width="0.5" />
<polyline points="583.1,431.5 576.7,425.9" fill="none" stroke="#e4e4e4" stroke-width="0.5" />
<polyline points="588.0,428.0 588.0,420.0" fill="none" stroke="#e4e4e4" stroke-width="0.5" />
<polyline points="592.9,431.5 599.3,425.9" fill="none" stroke="#e4e4e4" stroke-width="0.5" />
<defs>
<linearGradient id="bR" gradientUnits="userSpaceOnUse" x1="737" y1="600" x2="1270" y2="600"><stop offset="0" stop-color="#a64141"/><stop offset="0.1" stop-color="#b24848"/><stop offset="0.3" stop-color="#b94e4e"/><stop offset="0.5" stop-color="#c45858"/><stop offset="1" stop-color="#c55656"/></linearGradient>
<radialGradient id="bHi" gradientUnits="userSpaceOnUse" cx="1020" cy="606" r="42"><stop offset="0" stop-color="#f0c8c4" stop-opacity="0.95"/><stop offset="0.35" stop-color="#d98580" stop-opacity="0.6"/><stop offset="1" stop-color="#c45858" stop-opacity="0"/></radialGradient>
<radialGradient id="bHi2" gradientUnits="userSpaceOnUse" cx="955" cy="735" r="45"><stop offset="0" stop-color="#de8a84" stop-opacity="0.9"/><stop offset="1" stop-color="#c45858" stop-opacity="0"/></radialGradient>
<linearGradient id="bShade" gradientUnits="userSpaceOnUse" x1="790" y1="600" x2="900" y2="700"><stop offset="0" stop-color="#7a2c2c" stop-opacity="0"/><stop offset="0.5" stop-color="#8c3434" stop-opacity="0.55"/><stop offset="1" stop-color="#8c3434" stop-opacity="0"/></linearGradient>
<linearGradient id="bTube" gradientUnits="userSpaceOnUse" x1="1046" y1="650" x2="1018" y2="690"><stop offset="0" stop-color="#1a0808"/><stop offset="0.5" stop-color="#6e2626"/><stop offset="1" stop-color="#b64c4c"/></linearGradient>
</defs>
<polygon points="736.7,541.7 801.7,553.3 845.0,560.7 888.3,563.3 935.0,564.3 994.0,563.3 1054.3,561.7 1105.0,558.3 1160.7,552.3 1216.7,546.0 1268.3,540.7 1269.0,568.3 1268.3,589.0 1192.7,599.3 1117.3,609.3 1106.7,618.3 1100.7,630.0 1098.3,646.7 1095.0,671.7 1093.3,683.3 1096.7,700.7 1146.7,696.7 1216.0,684.0 1249.0,695.7 1266.7,701.7 1266.0,730.0 1216.0,740.0 1160.0,749.0 1105.0,757.7 1037.3,764.3 985.0,767.3 939.0,766.0 895.0,765.0 852.7,760.0 811.7,752.3 760.0,741.7 753.3,740.0 753.3,726.7 753.3,695.0 753.3,656.7 753.3,625.0 748.3,591.7 742.7,571.7" fill="url(#bR)" />
<polygon points="736.7,541.7 801.7,553.3 845.0,560.7 888.3,563.3 935.0,564.3 994.0,563.3 1054.3,561.7 1105.0,558.3 1160.7,552.3 1216.7,546.0 1268.3,540.7 1269.0,568.3 1268.3,589.0 1192.7,599.3 1117.3,609.3 1106.7,618.3 1100.7,630.0 1098.3,646.7 1095.0,671.7 1093.3,683.3 1096.7,700.7 1146.7,696.7 1216.0,684.0 1249.0,695.7 1266.7,701.7 1266.0,730.0 1216.0,740.0 1160.0,749.0 1105.0,757.7 1037.3,764.3 985.0,767.3 939.0,766.0 895.0,765.0 852.7,760.0 811.7,752.3 760.0,741.7 753.3,740.0 753.3,726.7 753.3,695.0 753.3,656.7 753.3,625.0 748.3,591.7 742.7,571.7" fill="url(#bShade)" />
<polygon points="1096.7,700.7 1146.7,696.7 1216.0,684.0 1249.0,695.7 1266.7,701.7 1191.0,714.3 1140.0,722.3 1106.7,727.3 1099.0,708.3" fill="#b04a4a" />
<polygon points="1146.7,696.7 1216.0,684.0 1249.0,695.7 1176.0,709.0" fill="#a84545" />
<ellipse cx="1020" cy="608" rx="45" ry="16" fill="url(#bHi)" transform="rotate(-8 1020 608)"/>
<ellipse cx="962" cy="740" rx="30" ry="14" fill="url(#bHi2)" opacity="0.8"/>
<polygon points="736.7,541.7 750.7,542.7 760.7,595.0 760.0,741.7 753.3,740.0 753.3,625.0 748.3,591.7" fill="#a03c3c" />
<polygon points="1036.7,626.7 1048.3,636.7 1066.7,653.3 1068.3,670.0 1053.3,698.3 1038.3,716.7 1020.0,706.7 1036.7,690.0 1046.7,670.0 1050.7,653.3 1048.3,636.7" fill="url(#bTube)" />
<polygon points="970.0,686.7 971.7,670.0 983.3,650.0 1000.0,635.0 1020.0,626.7 1036.7,626.7 1048.3,636.7 1050.7,653.3 1046.7,670.0 1036.7,690.0 1020.0,706.7 1000.0,718.3 983.3,716.7 973.3,706.7" fill="#464646" />
<polygon points="977.3,656.7 983.3,650.0 1000.0,635.0 1020.0,626.7 1036.7,626.7 1048.3,636.7 1050.7,651.7 1045.0,651.7 1003.3,657.3 993.3,643.3" fill="#000" />
<polygon points="1100.7,625.0 1160.0,638.3 1099.0,646.7" fill="#000" />
<polygon points="953.3,681.7 968.3,680.0 970.0,686.7 973.3,706.7 963.3,716.7 946.7,710.7" fill="#7a2a2a" />
<polygon points="948.7,700.0 953.3,711.7 983.3,736.7 1018.3,747.3 986.7,733.3 960.0,716.7" fill="#1a0808" />
<path d="M736.7 542.7 L801.7 553.3 L845.0 560.7 L888.3 563.3 L935.0 564.3 L994.0 563.3 M742.7 571.7 L803.3 583.3 L845.0 590.0 L887.7 593.3 L932.7 596.0 L994.0 594.0 M748.3 591.7 L807.7 602.3 L846.7 609.0 L886.7 612.7 L932.0 614.3 L988.3 620.0 M753.3 625.0 L810.0 634.0 L849.0 639.3 L889.0 644.0 L933.3 645.0 L966.0 636.0 M753.3 656.7 L814.0 662.7 L852.3 667.7 L891.0 671.7 L936.7 675.0 L953.3 648.3 M753.3 695.0 L826.7 701.7 L855.7 705.7 L895.0 709.0 L939.3 696.7 M753.3 726.7 L811.7 740.0 L850.0 746.7 L890.0 750.0 L934.0 752.3 M753.3 740.0 L811.7 752.3 L852.7 760.0 L895.0 765.0 L939.0 766.0 L985.0 767.3 M736.7 542.7 L742.7 571.7 L748.3 591.7 L753.3 625.0 L753.3 656.7 L753.3 695.0 L753.3 726.7 L753.3 740.0 M801.7 553.3 L803.3 583.3 L807.7 602.3 L810.0 634.0 L814.0 662.7 L826.7 701.7 L811.7 740.0 L811.7 752.3 M845.0 560.7 L845.0 590.0 L846.7 609.0 L849.0 639.3 L852.3 667.7 L855.7 705.7 L850.0 746.7 L852.7 760.0 M888.3 563.3 L887.7 593.3 L886.7 612.7 L889.0 644.0 L891.0 671.7 L895.0 709.0 L890.0 750.0 L895.0 765.0 M935.0 564.3 L932.7 596.0 L932.0 614.3 L933.3 645.0 L936.7 675.0 L939.3 696.7 L934.0 752.3 L939.0 766.0 M994.0 563.3 L994.0 594.0 L988.3 620.0 M741.7 542.7 L748.3 573.3 L755.0 593.3 L758.3 626.7 L760.0 658.3 L760.0 697.7 L760.0 729.3 L760.0 741.7 M746.7 542.7 L755.0 574.0 L760.7 595.0 L772.7 627.3 L794.0 661.0 L826.7 701.7 L811.7 740.0 M750.7 542.7 L803.3 583.3 M753.3 625.0 L807.7 602.3 M753.3 656.7 L772.7 627.3 M772.7 627.3 L807.7 602.3 M772.7 627.3 L810.0 634.0 M794.0 661.0 L810.0 634.0 M794.0 661.0 L753.3 695.0 M794.0 661.0 L849.0 639.3 M826.7 701.7 L753.3 726.7 M826.7 701.7 L852.3 667.7 M826.7 701.7 L850.0 746.7 M814.0 662.7 L826.7 701.7 M855.7 705.7 L811.7 740.0 M855.7 705.7 L891.0 671.7 M895.0 709.0 L850.0 746.7 M895.0 709.0 L936.7 675.0 M939.3 696.7 L890.0 750.0 M946.7 710.7 L934.0 752.3 M946.7 710.7 L895.0 709.0 M932.0 614.3 L966.0 636.0 M933.3 645.0 L953.3 648.3 M936.7 675.0 L953.3 681.7 M994.0 563.3 L1008.3 593.3 M1008.3 593.3 L1011.7 612.7 M994.0 594.0 L1008.3 593.3 M1008.3 593.3 L1050.0 591.7 M994.0 594.0 L1011.7 612.7 M932.0 614.3 L988.3 620.0 M932.7 596.0 L988.3 620.0 M753.3 695.0 L794.0 661.0 M753.3 726.7 L760.0 729.3 M811.7 740.0 L753.3 740.0 M753.3 740.0 L811.7 752.3 M994.0 563.3 L1054.3 561.7 L1105.0 558.3 L1160.7 552.3 L1216.7 546.0 L1268.3 540.7 M1008.3 593.3 L1050.0 591.7 L1096.0 588.3 L1155.0 582.3 L1219.0 574.3 L1269.0 568.3 M1038.3 612.7 L1076.7 614.3 L1106.7 618.3 L1117.3 609.3 L1192.7 599.3 L1268.3 589.0 M1054.3 561.7 L1050.0 591.7 L1038.3 612.7 M1105.0 558.3 L1096.0 588.3 L1076.7 614.3 M1160.7 552.3 L1155.0 582.3 L1117.3 609.3 M1216.7 546.0 L1219.0 574.3 L1192.7 599.3 M1268.3 540.7 L1269.0 568.3 L1268.3 589.0 M1096.0 588.3 L1038.3 612.7 M1096.0 588.3 L1106.7 618.3 M1155.0 582.3 L1106.7 618.3 M1219.0 574.3 L1155.0 582.3 M1269.0 568.3 L1192.7 599.3 M1050.0 591.7 L1011.7 612.7 M1054.3 561.7 L1008.3 593.3 M1106.7 618.3 L1100.7 630.0 L1098.3 646.7 L1095.0 671.7 L1093.3 683.3 L1096.7 700.7 L1099.0 708.3 L1113.3 715.7 M970.0 686.7 L971.7 670.0 L983.3 650.0 L1000.0 635.0 L1020.0 626.7 L1036.7 626.7 L1048.3 636.7 L1050.7 653.3 L1046.7 670.0 L1036.7 690.0 L1020.0 706.7 L1000.0 718.3 L983.3 716.7 L973.3 706.7 L970.0 686.7 M1002.0 727.2 L991.0 725.5 L981.0 721.2 L972.6 714.4 L966.1 705.5 L962.0 695.1 L960.4 683.6 L961.4 671.7 L965.1 660.0 L971.1 649.2 L979.2 639.9 L988.9 632.5 L999.7 627.4 L1011.0 625.0 L1022.3 625.3 L1032.8 628.3 L1042.1 633.9 L1049.6 641.8 L1054.9 651.5 M1001.6 731.2 L989.7 729.3 L978.9 724.6 L969.7 717.2 L962.7 707.6 L958.2 696.3 L956.4 683.9 L957.5 671.1 L961.4 658.6 L967.8 646.9 L976.5 636.9 L987.0 629.0 L998.7 623.5 L1010.9 621.0 L1023.1 621.4 L1034.5 624.7 L1044.6 630.8 L1052.7 639.3 L1058.6 649.9 M1011.7 612.7 L988.3 620.0 L966.0 636.0 L953.3 648.3 L936.7 675.0 L939.3 696.7 L946.7 710.7 L963.3 716.7 L983.3 736.7 L993.3 737.3 L1017.7 745.7 L1026.7 730.7 L1043.3 723.3 L1063.3 722.7 L1068.3 730.7 L1099.0 708.3 L1093.3 683.3 L1095.0 671.7 L1098.3 646.7 L1100.7 630.0 L1106.7 618.3 L1076.7 614.3 L1038.3 612.7 L1016.7 616.0 L1011.7 612.7 M988.3 620.0 L1000.0 635.0 M966.0 636.0 L983.3 650.0 M953.3 648.3 L971.7 670.0 M953.3 681.7 L970.0 686.7 M946.7 710.7 L973.3 706.7 M963.3 716.7 L983.3 716.7 M1000.0 718.3 L993.3 737.3 M1020.0 706.7 L1026.7 730.7 M1036.7 690.0 L1063.3 722.7 M1046.7 670.0 L1073.3 690.0 M1050.7 653.3 L1079.3 668.3 M1048.3 636.7 L1080.0 648.3 M1036.7 626.7 L1071.7 631.0 M1038.3 612.7 L1035.0 626.0 M1016.7 616.0 L1020.0 626.7 M1073.3 690.0 L1093.3 683.3 M1079.3 668.3 L1095.0 671.7 M1080.0 648.3 L1098.3 646.7 M1071.7 631.0 L1100.7 630.0 M1071.7 631.0 L1076.7 614.3 M1061.7 639.3 L1068.3 653.3 L1070.0 670.0 L1063.3 685.7 L1055.0 698.3 L1040.0 716.7 L1035.0 690.7 L1020.0 708.3 M934.0 752.3 L979.3 753.3 L1017.7 745.7 L1037.3 746.0 L1068.3 730.7 L1106.7 727.3 M979.3 753.3 L985.0 767.3 M1037.3 746.0 L1037.3 764.3 M1106.7 727.3 L1105.0 757.7 M983.3 736.7 L979.3 753.3 M993.3 737.3 L1017.7 745.7 M1026.7 730.7 L1037.3 746.0 M1068.3 730.7 L1037.3 764.3 M1068.3 730.7 L1105.0 757.7 M939.0 766.0 L946.7 710.7 M985.0 767.3 L1037.3 764.3 L1105.0 757.7 L1160.0 749.0 L1216.0 740.0 L1266.0 730.0 M1096.7 700.7 L1146.7 696.7 L1216.0 684.0 L1249.0 695.7 L1266.7 701.7 L1266.0 730.0 M1106.7 727.3 L1140.0 722.3 L1191.0 714.3 L1266.7 701.7 M1113.3 715.7 L1176.0 709.0 L1249.0 695.7 M1146.7 696.7 L1140.0 722.3 L1160.0 749.0 M1176.0 709.0 L1191.0 714.3 L1216.0 740.0 M1140.0 722.3 L1105.0 757.7 M1191.0 714.3 L1160.0 749.0 M1266.7 701.7 L1216.0 740.0" fill="none" stroke="#f6eaea" stroke-width="0.9" stroke-linejoin="round"/>
<polygon points="736.7,541.7 801.7,553.3 845.0,560.7 888.3,563.3 935.0,564.3 994.0,563.3 1054.3,561.7 1105.0,558.3 1160.7,552.3 1216.7,546.0 1268.3,540.7 1269.0,568.3 1268.3,589.0 1192.7,599.3 1117.3,609.3 1106.7,618.3 1100.7,630.0 1098.3,646.7 1095.0,671.7 1093.3,683.3 1096.7,700.7 1146.7,696.7 1216.0,684.0 1249.0,695.7 1266.7,701.7 1266.0,730.0 1216.0,740.0 1160.0,749.0 1105.0,757.7 1037.3,764.3 985.0,767.3 939.0,766.0 895.0,765.0 852.7,760.0 811.7,752.3 760.0,741.7 753.3,740.0 753.3,726.7 753.3,695.0 753.3,656.7 753.3,625.0 748.3,591.7 742.7,571.7" fill="none" stroke="#ffffff" stroke-width="1.1"/>
<path d="M734.7 540.7h4v4h-4zM739.7 540.7h4v4h-4zM740.7 569.7h4v4h-4zM746.3 571.3h4v4h-4zM746.3 589.7h4v4h-4zM751.3 623.0h4v4h-4zM751.3 654.7h4v4h-4zM751.3 693.0h4v4h-4zM751.3 724.7h4v4h-4zM751.3 738.0h4v4h-4zM753.0 591.3h4v4h-4zM756.3 624.7h4v4h-4zM758.0 656.3h4v4h-4zM758.0 695.7h4v4h-4zM758.0 727.3h4v4h-4zM758.0 739.7h4v4h-4zM770.7 625.3h4v4h-4zM792.0 659.0h4v4h-4zM799.7 551.3h4v4h-4zM801.3 581.3h4v4h-4zM805.7 600.3h4v4h-4zM808.0 632.0h4v4h-4zM809.7 738.0h4v4h-4zM809.7 750.3h4v4h-4zM812.0 660.7h4v4h-4zM824.7 699.7h4v4h-4zM843.0 558.7h4v4h-4zM843.0 588.0h4v4h-4zM844.7 607.0h4v4h-4zM847.0 637.3h4v4h-4zM848.0 744.7h4v4h-4zM850.3 665.7h4v4h-4zM850.7 758.0h4v4h-4zM853.7 703.7h4v4h-4zM884.7 610.7h4v4h-4zM885.7 591.3h4v4h-4zM886.3 561.3h4v4h-4zM887.0 642.0h4v4h-4zM888.0 748.0h4v4h-4zM889.0 669.7h4v4h-4zM893.0 707.0h4v4h-4zM893.0 763.0h4v4h-4zM930.0 612.3h4v4h-4zM930.7 594.0h4v4h-4zM931.3 643.0h4v4h-4zM932.0 750.3h4v4h-4zM933.0 562.3h4v4h-4zM934.7 673.0h4v4h-4zM937.0 764.0h4v4h-4zM937.3 694.7h4v4h-4zM944.7 708.7h4v4h-4zM951.3 646.3h4v4h-4zM951.3 679.7h4v4h-4zM961.3 714.7h4v4h-4zM964.0 634.0h4v4h-4zM968.0 684.7h4v4h-4zM969.7 668.0h4v4h-4zM971.3 704.7h4v4h-4zM977.3 751.3h4v4h-4zM981.3 648.0h4v4h-4zM981.3 714.7h4v4h-4zM981.3 734.7h4v4h-4zM983.0 765.3h4v4h-4zM986.3 618.0h4v4h-4zM991.3 735.3h4v4h-4zM992.0 561.3h4v4h-4zM992.0 592.0h4v4h-4zM998.0 633.0h4v4h-4zM998.0 716.3h4v4h-4zM1006.3 591.3h4v4h-4zM1009.7 610.7h4v4h-4zM1014.7 614.0h4v4h-4zM1015.7 743.7h4v4h-4zM1018.0 624.7h4v4h-4zM1018.0 704.7h4v4h-4zM1018.0 706.3h4v4h-4zM1024.7 728.7h4v4h-4zM1033.0 624.0h4v4h-4zM1033.0 688.7h4v4h-4zM1034.7 624.7h4v4h-4zM1034.7 688.0h4v4h-4zM1035.3 744.0h4v4h-4zM1035.3 762.3h4v4h-4zM1036.3 610.7h4v4h-4zM1038.0 714.7h4v4h-4zM1041.3 721.3h4v4h-4zM1044.7 668.0h4v4h-4zM1046.3 634.7h4v4h-4zM1048.0 589.7h4v4h-4zM1048.7 651.3h4v4h-4zM1052.3 559.7h4v4h-4zM1053.0 696.3h4v4h-4zM1059.7 637.3h4v4h-4zM1061.3 683.7h4v4h-4zM1061.3 720.7h4v4h-4zM1066.3 651.3h4v4h-4zM1066.3 728.7h4v4h-4zM1068.0 668.0h4v4h-4zM1069.7 629.0h4v4h-4zM1071.3 688.0h4v4h-4zM1074.7 612.3h4v4h-4zM1077.3 666.3h4v4h-4zM1078.0 646.3h4v4h-4zM1091.3 681.3h4v4h-4zM1093.0 669.7h4v4h-4zM1094.0 586.3h4v4h-4zM1094.7 698.7h4v4h-4zM1096.3 644.7h4v4h-4zM1097.0 706.3h4v4h-4zM1098.7 628.0h4v4h-4zM1103.0 556.3h4v4h-4zM1103.0 755.7h4v4h-4zM1104.7 616.3h4v4h-4zM1104.7 725.3h4v4h-4zM1111.3 713.7h4v4h-4zM1115.3 607.3h4v4h-4zM1138.0 720.3h4v4h-4zM1144.7 694.7h4v4h-4zM1153.0 580.3h4v4h-4zM1158.0 747.0h4v4h-4zM1158.7 550.3h4v4h-4zM1174.0 707.0h4v4h-4zM1189.0 712.3h4v4h-4zM1190.7 597.3h4v4h-4zM1214.0 682.0h4v4h-4zM1214.0 738.0h4v4h-4zM1214.7 544.0h4v4h-4zM1217.0 572.3h4v4h-4zM1247.0 693.7h4v4h-4zM1264.0 728.0h4v4h-4zM1264.7 699.7h4v4h-4zM1266.3 538.7h4v4h-4zM1266.3 587.0h4v4h-4zM1267.0 566.3h4v4h-4z" fill="#4b4be6"/>
</svg><span class="t" style="left:3px;top:6px;font-size:11.5px;color:#e0e0e0;letter-spacing:0.10px;">[ + ]</span>
<span class="t" style="left:26px;top:6px;font-size:11.5px;color:#e0e0e0;letter-spacing:-0.26px;">[Perspective ]</span>
<span class="t" style="left:96px;top:6px;font-size:11.5px;color:#e0e0e0;letter-spacing:-0.11px;">[Standard ]</span>
<span class="t" style="left:155px;top:6px;font-size:11.5px;color:#e0e0e0;letter-spacing:-0.38px;">[Edged Faces ]</span>
<svg class="abs" style="left:235px;top:7px" width="14" height="13" viewBox="0 0 14 13"><path d="M0.500 1h12l-4.500 5v6l-3-2v-4z" fill="#6a6a6a"/></svg>
<svg class="abs" style="left:1603px;top:33px" width="90" height="55" viewBox="0 0 90 55"><ellipse cx="45" cy="39.500" rx="36" ry="8.500" fill="none" stroke="#82888d" stroke-width="3.200"/>
<ellipse cx="46" cy="39" rx="30" ry="6.500" fill="#1a1a1a"/>
<path d="M26 8l10-2 18 0 10 3 0 28-20 6-18-8z" fill="#8b8b8b"/>
<path d="M26 8l18 2 0 33-18-8z" fill="#868686"/><path d="M44 10l20-1 0 28-20 6z" fill="#8e8e8e"/><path d="M26 8l10-2 18 0 10 3-20 1z" fill="#949494"/>
<rect x="37" y="16" width="7" height="18" fill="#7a7f88"/>
<text x="53" y="27" font-family="Liberation Sans" font-size="5.500" fill="#5f6670" text-anchor="middle" transform="skewY(-6)">FRONT</text>
<text x="32" y="22" font-family="Liberation Sans" font-size="4.500" fill="#5f6670" text-anchor="middle">L</text></svg>
<svg class="abs" style="left:10px;top:768px" width="46" height="40" viewBox="0 0 46 40"><path d="M16 33V8" stroke="#2222c8" stroke-width="1.200"/><path d="M16 33l24-3" stroke="#b02020" stroke-width="1.200"/><path d="M16 33l-8-5" stroke="#208a20" stroke-width="1.200"/>
<text x="14" y="8" font-family="Liberation Sans" font-size="8" fill="#2a2ad0">z</text><text x="37" y="30" font-family="Liberation Sans" font-size="8" fill="#b02020">x</text><text x="3" y="29" font-family="Liberation Sans" font-size="8" fill="#208a20">y</text></svg>
<svg class="abs" style="left:1283px;top:278px" width="28" height="22" viewBox="0 0 28 22"><path d="M2.500 3.500h10v14h-10zM12.500 3.500l9 0.500 0 13.500-9 0M11 17.500l2-14" fill="none" stroke="#dcdcdc" stroke-width="1"/></svg></div>
<div id="panel" class="abs"><svg class="abs" style="left:7px;top:2px" width="204" height="3" viewBox="0 0 204 3"><defs><pattern id="pd1" width="2" height="2" patternUnits="userSpaceOnUse"><rect width="1" height="1" fill="#b0b0b0"/></pattern></defs><rect width="204" height="3" fill="url(#pd1)"/></svg>
<div class="abs" style="left:4px;top:10px;width:206px;height:26px;background:#3c3c3c;"></div>
<div class="abs" style="left:37px;top:10px;width:30px;height:28px;background:#444444;"></div>
<div class="abs" style="left:99px;top:15px;width:1px;height:16px;background:#505050;"></div>
<div class="abs" style="left:131px;top:15px;width:1px;height:16px;background:#505050;"></div>
<div class="abs" style="left:163px;top:15px;width:1px;height:16px;background:#505050;"></div>
<div class="abs" style="left:196px;top:15px;width:1px;height:16px;background:#505050;"></div>
<svg class="abs" style="left:8px;top:12px" width="24" height="22" viewBox="0 0 24 22"><path d="M12 3v16M4 11h16" stroke="#d6d6d6" stroke-width="2"/></svg>
<svg class="abs" style="left:40px;top:11px" width="24" height="24" viewBox="0 0 24 24"><path d="M5 19V5h14" fill="none" stroke="#45c3c4" stroke-width="1.200"/><path d="M5 5h14v14h-14z" fill="none" stroke="#45c3c4" stroke-width="1.200" stroke-dasharray="0"/><path d="M9 19a10 10 0 0 1 10-10" fill="none" stroke="#d6d6d6" stroke-width="2"/><path d="M3.500 3.500h3v3h-3zM17.500 3.500h3v3h-3zM3.500 17.500h3v3h-3zM17.500 17.500h3v3h-3z" fill="#444" stroke="#45c3c4" stroke-width="1"/></svg>
<svg class="abs" style="left:72px;top:12px" width="24" height="22" viewBox="0 0 24 22"><rect x="6" y="3" width="12" height="5" fill="#d6d6d6"/><path d="M12 8v4M6 17v-5h12v5" fill="none" stroke="#45c3c4" stroke-width="1.300" stroke-dasharray="2 1"/><rect x="4" y="16" width="4" height="4" fill="#45c3c4"/><rect x="16" y="16" width="4" height="4" fill="#45c3c4"/></svg>
<svg class="abs" style="left:104px;top:12px" width="26" height="22" viewBox="0 0 26 22"><circle cx="9" cy="11" r="7" fill="none" stroke="#45c3c4" stroke-width="1"/><circle cx="11" cy="11" r="7" fill="none" stroke="#45c3c4" stroke-width="1"/><circle cx="15" cy="11" r="7.500" fill="#c8c8c8"/></svg>
<svg class="abs" style="left:137px;top:12px" width="24" height="22" viewBox="0 0 24 22"><rect x="3" y="4" width="17" height="11" fill="#c8c8c8"/><path d="M7 18.500h9" stroke="#c8c8c8" stroke-width="1.500"/></svg>
<svg class="abs" style="left:169px;top:12px" width="24" height="22" viewBox="0 0 24 22"><path d="M5 4a4 4 0 0 1 6 4l9 9-2.500 2.500-9-9a4 4 0 0 1-5-5l2.500 2.500 2-2z" fill="#c8c8c8"/></svg>
<div class="abs" style="left:7px;top:42px;width:179px;height:20px;background:#646464;"></div>
<span class="t" style="left:12px;top:46px;font-size:11.5px;color:#f0f0f0;letter-spacing:-0.45px;">Plane001</span>
<div class="abs" style="left:191px;top:42px;width:19px;height:20px;background:#d95c5c;border:1px solid #2a2a2a;box-sizing:border-box;"></div>
<div class="abs" style="left:7px;top:68px;width:203px;height:20px;background:#646464;"></div>
<span class="t" style="left:11px;top:72px;font-size:11.5px;color:#e0e0e0;letter-spacing:-0.31px;">Modifier List</span>
<svg class="abs" style="left:197px;top:75px" width="8" height="6" viewBox="0 0 8 6"><path d="M0.500 0.500h6l-3 4z" fill="#e0e0e0"/></svg>
<div class="abs" style="left:7px;top:94px;width:204px;height:126px;background:#444444;border:1px solid #f2f2f2;box-sizing:border-box;"></div>
<div class="abs" style="left:39px;top:112px;width:171px;height:17px;background:#5f8ac7;"></div>
<div class="abs" style="left:9px;top:196px;width:200px;height:1px;background:#7a7a7a;"></div>
<svg class="abs" style="left:14px;top:99px" width="10" height="8" viewBox="0 0 10 8"><path d="M1 1h8l-4 6z" fill="#c8c8c8"/></svg>
<span class="t" style="left:30px;top:97px;font-size:11.5px;color:#f4f4f4;letter-spacing:-0.39px;">Editable Poly</span>
<span class="t" style="left:40px;top:114px;font-size:11.5px;color:#f4f4f4;letter-spacing:-0.10px;">Vertex</span>
<span class="t" style="left:40px;top:131px;font-size:11.5px;color:#f4f4f4;letter-spacing:-0.71px;">Edge</span>
<span class="t" style="left:40px;top:148px;font-size:11.5px;color:#f4f4f4;letter-spacing:-0.42px;">Border</span>
<span class="t" style="left:40px;top:165px;font-size:11.5px;color:#f4f4f4;letter-spacing:-0.51px;">Polygon</span>
<span class="t" style="left:40px;top:182px;font-size:11.5px;color:#f4f4f4;letter-spacing:-0.46px;">Element</span>
<svg class="abs" style="left:17px;top:110px" width="22" height="82" viewBox="0 0 22 82"><path d="M1.500 0v80M1.500 11h16M1.500 28h16M1.500 45h16M1.500 62h16M1.500 79h16" fill="none" stroke="#0e0e0e" stroke-width="1" stroke-dasharray="1 1"/></svg>
<svg class="abs" style="left:192px;top:97px" width="12" height="12" viewBox="0 0 12 12"><circle cx="3.500" cy="6" r="2.200" fill="#f0f0f0"/><circle cx="8.500" cy="2.800" r="2.200" fill="#f0f0f0"/><circle cx="8.500" cy="9.200" r="2.200" fill="#f0f0f0"/></svg>
<svg class="abs" style="left:192px;top:114px" width="12" height="12" viewBox="0 0 12 12"><circle cx="3.500" cy="6" r="2.500" fill="#f0f0f0" stroke="#222" stroke-width="0.800"/><circle cx="8.500" cy="2.800" r="2.500" fill="#f0f0f0" stroke="#222" stroke-width="0.800"/><circle cx="8.500" cy="9.200" r="2.500" fill="#f0f0f0" stroke="#222" stroke-width="0.800"/></svg>
<svg class="abs" style="left:10px;top:228px" width="20" height="20" viewBox="0 0 20 20"><path d="M11 3l6 6-2 0.500-3 3 0.500 3-7-7 3 0.500 3-3zM7.500 12.500l-5 5" fill="#d0d0d0" stroke="#d0d0d0" stroke-width="1"/></svg>
<div class="abs" style="left:37px;top:231px;width:1px;height:15px;background:#1e1e1e;"></div>
<svg class="abs" style="left:46px;top:228px" width="16" height="20" viewBox="0 0 16 20"><path d="M5.500 3h5M6.500 3v13a1.500 1.500 0 0 0 3 0v-13" fill="none" stroke="#e0e0e0" stroke-width="1.200"/><rect x="7" y="10" width="2" height="6" fill="#45c3c4"/></svg>
<div class="abs" style="left:73px;top:231px;width:1px;height:15px;background:#1e1e1e;"></div>
<svg class="abs" style="left:82px;top:228px" width="18" height="20" viewBox="0 0 18 20"><circle cx="5" cy="6" r="3.500" fill="none" stroke="#6a6a6a" stroke-width="1.200"/><circle cx="7" cy="14" r="3.500" fill="none" stroke="#6a6a6a" stroke-width="1.200"/><circle cx="13" cy="13" r="3.500" fill="none" stroke="#6a6a6a" stroke-width="1.200"/><path d="M9 5h6v4" fill="none" stroke="#6a6a6a" stroke-width="1.200"/></svg>
<svg class="abs" style="left:107px;top:228px" width="16" height="20" viewBox="0 0 16 20"><path d="M2.500 6h11M6 6v-2h4v2M4 7v10h8v-10M6.500 8.500v7M9.500 8.500v7" fill="none" stroke="#d0d0d0" stroke-width="1.200"/></svg>
<div class="abs" style="left:133px;top:231px;width:1px;height:15px;background:#1e1e1e;"></div>
<svg class="abs" style="left:142px;top:228px" width="18" height="20" viewBox="0 0 18 20"><rect x="2" y="5" width="12" height="12" fill="none" stroke="#e0e0e0" stroke-width="1.200"/><path d="M2 9h12M6 5v12M10 9v8M2 13h12" stroke="#e0e0e0" stroke-width="1"/><path d="M8 10l7-8 2 2-7 8-3 1z" fill="#f4a71d"/></svg>
<div class="abs" style="left:18px;top:259px;width:86px;height:1px;background:#5a5a5a;"></div>
<div class="abs" style="left:118px;top:259px;width:88px;height:1px;background:#5a5a5a;"></div>
<svg class="abs" style="left:105px;top:258px" width="12" height="3" viewBox="0 0 12 3"><defs><pattern id="pd2" width="2" height="2" patternUnits="userSpaceOnUse"><rect width="1" height="1" fill="#c8c8c8"/></pattern></defs><rect width="12" height="3" fill="url(#pd2)"/></svg>
<div class="abs" style="left:205px;top:267px;width:6px;height:563px;background:#3a3a3a;border-radius:3px;"></div>
<div class="abs" style="left:205px;top:267px;width:6px;height:156px;background:#5c5c5c;border-radius:3px;"></div>
<div class="abs" style="left:7px;top:267px;width:194px;height:260px;background:#515151;border-radius:3px;"></div>
<svg class="abs" style="left:13px;top:273px" width="8" height="8" viewBox="0 0 8 8"><path d="M0.500 1h6l-3 5z" fill="#b8b8b8"/></svg>
<span class="t" style="left:26px;top:270px;font-size:12px;color:#ffffff;font-weight:bold;letter-spacing:-0.26px;">Selection</span>
<svg class="abs" style="left:188px;top:273px" width="6" height="6" viewBox="0 0 6 6"><defs><pattern id="pd3" width="2" height="2" patternUnits="userSpaceOnUse"><rect width="1" height="1" fill="#8e8e8e"/></pattern></defs><rect width="6" height="6" fill="url(#pd3)"/></svg>
<div class="abs" style="left:65px;top:289px;width:96px;height:23px;background:#3e3e3e;"></div>
<div class="abs" style="left:42px;top:289px;width:22px;height:23px;background:#5a86c5;border-radius:3px;"></div>
<svg class="abs" style="left:42px;top:289px" width="22" height="23" viewBox="0 0 22 23"><circle cx="6" cy="10" r="2.500" fill="#45c3c4" stroke="#1d3d6a" stroke-width="0.800"/><circle cx="15.500" cy="6.500" r="2.500" fill="#45c3c4" stroke="#1d3d6a" stroke-width="0.800"/><circle cx="13" cy="16" r="2.500" fill="#45c3c4" stroke="#1d3d6a" stroke-width="0.800"/></svg>
<svg class="abs" style="left:67px;top:289px" width="22" height="23" viewBox="0 0 22 23"><path d="M4 11l12-6-3 13z" fill="none" stroke="#45c3c4" stroke-width="1.300"/></svg>
<svg class="abs" style="left:91px;top:289px" width="22" height="23" viewBox="0 0 22 23"><path d="M6 5a7 7 0 1 1 0 13a9 9 0 0 0 0-13z" fill="none" stroke="#45c3c4" stroke-width="1.300"/></svg>
<svg class="abs" style="left:115px;top:289px" width="22" height="23" viewBox="0 0 22 23"><rect x="4.500" y="6" width="12" height="12" fill="#45c3c4"/></svg>
<svg class="abs" style="left:139px;top:289px" width="22" height="23" viewBox="0 0 22 23"><path d="M11 5l7 3v8l-7 3-7-3v-8z" fill="#45c3c4"/><path d="M4 8l7 3 7-3M11 11v8" fill="none" stroke="#2a6f70" stroke-width="1"/></svg>
<div class="abs" style="left:34px;top:319px;width:13px;height:13px;background:#585858;border:1px solid #5e5e5e;box-sizing:border-box;"></div>
<span class="t" style="left:50px;top:319px;font-size:11.5px;color:#8c8c8c;letter-spacing:-0.25px;">By Vertex</span>
<div class="abs" style="left:23px;top:342px;width:159px;height:33px;background:transparent;border:1px solid #333;border-radius:3px;box-sizing:border-box;"></div>
<div class="abs" style="left:26px;top:341px;width:81px;height:4px;background:#515151;"></div>
<span class="t" style="left:28px;top:336px;font-size:11.5px;color:#f4f4f4;letter-spacing:-0.39px;">Optional Culling</span>
<div class="abs" style="left:29px;top:354px;width:72px;height:17px;background:#646464;border-radius:3px;"></div>
<span class="t" style="left:43.0px;top:355.5px;font-size:11.5px;color:#ececec;letter-spacing:-0.41px;">Backface</span>
<div class="abs" style="left:104px;top:354px;width:72px;height:17px;background:#646464;border-radius:3px;"></div>
<span class="t" style="left:117.5px;top:355.5px;font-size:11.5px;color:#ececec;letter-spacing:-0.45px;">Occluded</span>
<div class="abs" style="left:34px;top:381px;width:13px;height:13px;background:#585858;border:1px solid #5e5e5e;box-sizing:border-box;"></div>
<span class="t" style="left:50px;top:381px;font-size:11.5px;color:#8c8c8c;letter-spacing:-0.29px;">By Angle:</span>
<div class="abs" style="left:98px;top:379px;width:81px;height:16px;background:#585858;border:1px solid #5e5e5e;box-sizing:border-box;"></div>
<span class="t" style="left:102px;top:380px;font-size:11.5px;color:#8c8c8c;letter-spacing:-0.10px;">45,0</span>
<svg class="abs" style="left:169px;top:382px" width="6" height="10" viewBox="0 0 6 10"><path d="M0.500 4.0 l2.500-3 2.500 3zM0.500 6.0 l2.500 3 2.500-3z" fill="#9a9a9a"/></svg>
<div class="abs" style="left:31px;top:399px;width:72px;height:17px;background:#646464;border-radius:3px;"></div>
<span class="t" style="left:52.0px;top:400.5px;font-size:11.5px;color:#ececec;letter-spacing:-0.43px;">Shrink</span>
<div class="abs" style="left:109px;top:399px;width:72px;height:17px;background:#646464;border-radius:3px;"></div>
<span class="t" style="left:132.0px;top:400.5px;font-size:11.5px;color:#ececec;letter-spacing:-0.37px;">Grow</span>
<div class="abs" style="left:31px;top:420px;width:57px;height:17px;background:#565656;border-radius:3px;border:1px solid #5e5e5e;box-sizing:border-box;"></div>
<span class="t" style="left:49.0px;top:421.5px;font-size:11.5px;color:#8a8a8a;letter-spacing:-0.66px;">Ring</span>
<div class="abs" style="left:91px;top:420px;width:12px;height:17px;background:#565656;border-radius:2px;border:1px solid #5e5e5e;box-sizing:border-box;"></div>
<svg class="abs" style="left:94px;top:423px" width="6" height="10" viewBox="0 0 6 10"><path d="M0.500 4.0 l2.500-3 2.500 3zM0.500 6.0 l2.500 3 2.500-3z" fill="#9a9a9a"/></svg>
<div class="abs" style="left:109px;top:420px;width:59px;height:17px;background:#565656;border-radius:3px;border:1px solid #5e5e5e;box-sizing:border-box;"></div>
<span class="t" style="left:126.5px;top:421.5px;font-size:11.5px;color:#8a8a8a;letter-spacing:-0.40px;">Loop</span>
<div class="abs" style="left:169px;top:420px;width:12px;height:17px;background:#565656;border-radius:2px;border:1px solid #5e5e5e;box-sizing:border-box;"></div>
<svg class="abs" style="left:172px;top:423px" width="6" height="10" viewBox="0 0 6 10"><path d="M0.500 4.0 l2.500-3 2.500 3zM0.500 6.0 l2.500 3 2.500-3z" fill="#9a9a9a"/></svg>
<div class="abs" style="left:23px;top:448px;width:159px;height:33px;background:transparent;border:1px solid #333;border-radius:3px;box-sizing:border-box;"></div>
<div class="abs" style="left:26px;top:447px;width:91px;height:4px;background:#515151;"></div>
<span class="t" style="left:28px;top:442px;font-size:11.5px;color:#f4f4f4;letter-spacing:-0.38px;">Preview Selection</span>
<div class="abs" style="left:26px;top:460px;width:13px;height:13px;background:#6e6e6e;border-radius:7px;"></div>
<div class="abs" style="left:28.5px;top:462.5px;width:8px;height:8px;background:#e4e4e4;border-radius:4px;"></div>
<span class="t" style="left:43px;top:460px;font-size:11.5px;color:#f4f4f4;letter-spacing:0.62px;">Off</span>
<div class="abs" style="left:75px;top:460px;width:13px;height:13px;background:#6a6a6a;border-radius:7px;"></div>
<span class="t" style="left:92px;top:460px;font-size:11.5px;color:#f4f4f4;letter-spacing:-0.39px;">SubObj</span>
<div class="abs" style="left:137px;top:460px;width:13px;height:13px;background:#6a6a6a;border-radius:7px;"></div>
<span class="t" style="left:154px;top:460px;font-size:11.5px;color:#f4f4f4;letter-spacing:-0.26px;">Multi</span>
<span class="t" style="left:83px;top:488px;font-size:11.5px;color:#f4f4f4;letter-spacing:-0.34px;">0 Vertices Selected</span>
<div class="abs" style="left:7px;top:531px;width:194px;height:18px;background:#515151;border-radius:3px;"></div>
<svg class="abs" style="left:13px;top:536px" width="8" height="9" viewBox="0 0 8 9"><path d="M1.500 0.500v7l4.500-3.500z" fill="#b8b8b8"/></svg>
<span class="t" style="left:26px;top:534px;font-size:12px;color:#ffffff;font-weight:bold;letter-spacing:-0.14px;">Soft Selection</span>
<svg class="abs" style="left:188px;top:537px" width="6" height="6" viewBox="0 0 6 6"><defs><pattern id="pd4" width="2" height="2" patternUnits="userSpaceOnUse"><rect width="1" height="1" fill="#8e8e8e"/></pattern></defs><rect width="6" height="6" fill="url(#pd4)"/></svg>
<div class="abs" style="left:7px;top:553px;width:194px;height:219px;background:#515151;border-radius:3px;"></div>
<svg class="abs" style="left:13px;top:559px" width="8" height="8" viewBox="0 0 8 8"><path d="M0.500 1h6l-3 5z" fill="#b8b8b8"/></svg>
<span class="t" style="left:26px;top:556px;font-size:12px;color:#ffffff;font-weight:bold;letter-spacing:-0.16px;">Edit Vertices</span>
<svg class="abs" style="left:188px;top:559px" width="6" height="6" viewBox="0 0 6 6"><defs><pattern id="pd5" width="2" height="2" patternUnits="userSpaceOnUse"><rect width="1" height="1" fill="#8e8e8e"/></pattern></defs><rect width="6" height="6" fill="url(#pd5)"/></svg>
<div class="abs" style="left:30px;top:580px;width:70px;height:16px;background:#646464;border-radius:3px;"></div>
<span class="t" style="left:45.0px;top:582px;font-size:11.5px;color:#ececec;letter-spacing:-0.47px;">Remove</span>
<div class="abs" style="left:107px;top:580px;width:70px;height:16px;background:#646464;border-radius:3px;"></div>
<span class="t" style="left:127.5px;top:582px;font-size:11.5px;color:#ececec;letter-spacing:-0.21px;">Break</span>
<div class="abs" style="left:30px;top:602px;width:55px;height:16px;background:#646464;border-radius:3px;"></div>
<span class="t" style="left:38.0px;top:604px;font-size:11.5px;color:#ececec;letter-spacing:-0.09px;">Extrude</span>
<div class="abs" style="left:107px;top:602px;width:55px;height:16px;background:#646464;border-radius:3px;"></div>
<span class="t" style="left:122.5px;top:604px;font-size:11.5px;color:#ececec;letter-spacing:-0.50px;">Weld</span>
<div class="abs" style="left:30px;top:625px;width:55px;height:16px;background:#646464;border-radius:3px;"></div>
<span class="t" style="left:37.0px;top:627px;font-size:11.5px;color:#ececec;letter-spacing:-0.44px;">Chamfer</span>
<div class="abs" style="left:107px;top:625px;width:70px;height:16px;background:#646464;border-radius:3px;"></div>
<span class="t" style="left:112.0px;top:627px;font-size:11.5px;color:#ececec;letter-spacing:-0.10px;">Target Weld</span>
<div class="abs" style="left:87px;top:602px;width:12px;height:16px;background:#565656;border-radius:2px;"></div>
<svg class="abs" style="left:88px;top:605px" width="10" height="10" viewBox="0 0 10 10"><rect x="0.500" y="0.500" width="9" height="8" fill="#1a1a1a" stroke="#c8c8c8" stroke-width="1"/><path d="M0.500 1.500h9" stroke="#e0e0e0" stroke-width="2"/></svg>
<div class="abs" style="left:164px;top:602px;width:12px;height:16px;background:#565656;border-radius:2px;"></div>
<svg class="abs" style="left:165px;top:605px" width="10" height="10" viewBox="0 0 10 10"><rect x="0.500" y="0.500" width="9" height="8" fill="#1a1a1a" stroke="#c8c8c8" stroke-width="1"/><path d="M0.500 1.500h9" stroke="#e0e0e0" stroke-width="2"/></svg>
<div class="abs" style="left:87px;top:625px;width:12px;height:16px;background:#565656;border-radius:2px;"></div>
<svg class="abs" style="left:88px;top:628px" width="10" height="10" viewBox="0 0 10 10"><rect x="0.500" y="0.500" width="9" height="8" fill="#1a1a1a" stroke="#c8c8c8" stroke-width="1"/><path d="M0.500 1.500h9" stroke="#e0e0e0" stroke-width="2"/></svg>
<div class="abs" style="left:68px;top:648px;width:70px;height:16px;background:#646464;border-radius:3px;"></div>
<span class="t" style="left:82.5px;top:650px;font-size:11.5px;color:#ececec;letter-spacing:-0.26px;">Connect</span>
<div class="abs" style="left:30px;top:671px;width:147px;height:16px;background:#646464;border-radius:3px;"></div>
<span class="t" style="left:42.0px;top:673px;font-size:11.5px;color:#ececec;letter-spacing:-0.31px;">Remove Isolated Vertices</span>
<div class="abs" style="left:30px;top:693px;width:147px;height:16px;background:#646464;border-radius:3px;"></div>
<span class="t" style="left:38.5px;top:695px;font-size:11.5px;color:#ececec;letter-spacing:-0.46px;">Remove Unused Map Verts</span>
<div class="abs" style="left:28px;top:716px;width:152px;height:49px;background:transparent;border:1px solid #333;border-radius:3px;box-sizing:border-box;"></div>
<span class="t" style="left:42px;top:723px;font-size:11.5px;color:#f4f4f4;letter-spacing:-0.11px;">Weight:</span>
<div class="abs" style="left:87px;top:723px;width:70px;height:15px;background:#646464;"></div>
<svg class="abs" style="left:148px;top:725px" width="6" height="11" viewBox="0 0 6 11"><path d="M0.500 4.5 l2.500-3 2.500 3zM0.500 6.5 l2.500 3 2.500-3z" fill="#e0e0e0"/></svg>
<span class="t" style="left:42px;top:743px;font-size:11.5px;color:#f4f4f4;letter-spacing:-0.32px;">Crease:</span>
<div class="abs" style="left:87px;top:743px;width:70px;height:15px;background:#646464;"></div>
<svg class="abs" style="left:148px;top:745px" width="6" height="11" viewBox="0 0 6 11"><path d="M0.500 4.5 l2.500-3 2.500 3zM0.500 6.5 l2.500 3 2.500-3z" fill="#e0e0e0"/></svg>
<div class="abs" style="left:0;top:776px;width:214px;height:54px;overflow:hidden;">
<div class="abs" style="left:7px;top:0px;width:194px;height:80px;background:#515151;border-radius:3px;"></div>
<svg class="abs" style="left:13px;top:6px" width="8" height="8" viewBox="0 0 8 8"><path d="M0.500 1h6l-3 5z" fill="#b8b8b8"/></svg>
<span class="t" style="left:26px;top:3px;font-size:12px;color:#ffffff;font-weight:bold;letter-spacing:-0.00px;">Edit Geometry</span>
<svg class="abs" style="left:188px;top:6px" width="6" height="6" viewBox="0 0 6 6"><defs><pattern id="pd6" width="2" height="2" patternUnits="userSpaceOnUse"><rect width="1" height="1" fill="#8e8e8e"/></pattern></defs><rect width="6" height="6" fill="url(#pd6)"/></svg>
<div class="abs" style="left:30px;top:25px;width:147px;height:16px;background:#646464;border-radius:3px;"></div>
<span class="t" style="left:74.0px;top:27px;font-size:11.5px;color:#ececec;letter-spacing:-0.27px;">Repeat Last</span>
<div class="abs" style="left:28px;top:49px;width:152px;height:30px;background:transparent;border:1px solid #333;border-radius:3px;box-sizing:border-box;"></div>
<div class="abs" style="left:31px;top:47px;width:62px;height:6px;background:#515151;"></div>
<span class="t" style="left:33px;top:42px;font-size:11.5px;color:#f4f4f4;letter-spacing:-0.20px;">Constraints</span>
</div></div>
<div id="bottom" class="abs"><svg class="abs" style="left:2px;top:6px" width="4" height="58" viewBox="0 0 4 58"><defs><pattern id="d2_918" width="2" height="2" patternUnits="userSpaceOnUse"><rect width="1" height="1" fill="#a8a8a8"/></pattern></defs><rect width="4" height="58" fill="url(#d2_918)"/></svg>
<div class="abs" style="left:10px;top:6px;width:14px;height:15px;background:#5e5e5e;border-radius:2px;"></div>
<span class="t" style="left:13px;top:6px;font-size:11.5px;color:#e0e0e0;">&lt;</span>
<div class="abs" style="left:26px;top:6px;width:123px;height:15px;background:#646464;border-radius:3px;"></div>
<span class="t" style="left:69px;top:7px;font-size:11.5px;color:#f0f0f0;letter-spacing:-0.02px;">0 / 100</span>
<div class="abs" style="left:151px;top:6px;width:14px;height:15px;background:#5e5e5e;border-radius:2px;"></div>
<span class="t" style="left:154px;top:6px;font-size:11.5px;color:#e0e0e0;">&gt;</span>
<div class="abs" style="left:59px;top:26px;width:1811px;height:25px;background:#282828;"></div>
<div class="abs" style="left:59px;top:51px;width:1811px;height:1px;background:#3a3a3a;"></div>
<div class="abs" style="left:59px;top:52px;width:1811px;height:11px;background:#2a2a2a;"></div>
<svg class="abs" style="left:59px;top:26px" width="1811" height="25" viewBox="0 0 1811 25"><path d="M6.5 0v13M6.5 21v4M24.5 0v12M42.4 0v12M60.4 0v12M78.4 0v12M96.3 0v13M96.3 21v4M114.3 0v12M132.3 0v12M150.2 0v12M168.2 0v12M186.2 0v13M186.2 21v4M204.1 0v12M222.1 0v12M240.1 0v12M258.1 0v12M276.0 0v13M276.0 21v4M294.0 0v12M312.0 0v12M329.9 0v12M347.9 0v12M365.9 0v13M365.9 21v4M383.8 0v12M401.8 0v12M419.8 0v12M437.7 0v12M455.7 0v13M455.7 21v4M473.7 0v12M491.6 0v12M509.6 0v12M527.6 0v12M545.5 0v13M545.5 21v4M563.5 0v12M581.5 0v12M599.4 0v12M617.4 0v12M635.4 0v13M635.4 21v4M653.3 0v12M671.3 0v12M689.3 0v12M707.3 0v12M725.2 0v13M725.2 21v4M743.2 0v12M761.2 0v12M779.1 0v12M797.1 0v12M815.1 0v13M815.1 21v4M833.0 0v12M851.0 0v12M869.0 0v12M886.9 0v12M904.9 0v13M904.9 21v4M922.9 0v12M940.8 0v12M958.8 0v12M976.8 0v12M994.7 0v13M994.7 21v4M1012.7 0v12M1030.7 0v12M1048.6 0v12M1066.6 0v12M1084.6 0v13M1084.6 21v4M1102.5 0v12M1120.5 0v12M1138.5 0v12M1156.5 0v12M1174.4 0v13M1174.4 21v4M1192.4 0v12M1210.4 0v12M1228.3 0v12M1246.3 0v12M1264.3 0v13M1264.3 21v4M1282.2 0v12M1300.2 0v12M1318.2 0v12M1336.1 0v12M1354.1 0v13M1354.1 21v4M1372.1 0v12M1390.0 0v12M1408.0 0v12M1426.0 0v12M1443.9 0v13M1443.9 21v4M1461.9 0v12M1479.9 0v12M1497.8 0v12M1515.8 0v12M1533.8 0v13M1533.8 21v4M1551.7 0v12M1569.7 0v12M1587.7 0v12M1605.7 0v12M1623.6 0v13M1623.6 21v4M1641.6 0v12M1659.6 0v12M1677.5 0v12M1695.5 0v12M1713.5 0v13M1713.5 21v4M1731.4 0v12M1749.4 0v12M1767.4 0v12M1785.3 0v12M1803.3 0v13M1803.3 21v4" stroke="#9a9a9a" stroke-width="1" fill="none"/></svg>
<div class="abs" style="left:63px;top:28px;width:7px;height:22px;background:#8f8427;"></div>
<span class="t" style="left:62.44140625px;top:38px;font-size:11px;color:#d8d070;">0</span>
<span class="t" style="left:152.28140625px;top:38px;font-size:11px;color:#d8d8d8;">5</span>
<span class="t" style="left:239.0628125px;top:38px;font-size:11px;color:#d8d8d8;">10</span>
<span class="t" style="left:328.9028125px;top:38px;font-size:11px;color:#d8d8d8;">15</span>
<span class="t" style="left:418.7428125px;top:38px;font-size:11px;color:#d8d8d8;">20</span>
<span class="t" style="left:508.58281250000005px;top:38px;font-size:11px;color:#d8d8d8;">25</span>
<span class="t" style="left:598.4228125px;top:38px;font-size:11px;color:#d8d8d8;">30</span>
<span class="t" style="left:688.2628125px;top:38px;font-size:11px;color:#d8d8d8;">35</span>
<span class="t" style="left:778.1028125px;top:38px;font-size:11px;color:#d8d8d8;">40</span>
<span class="t" style="left:867.9428125px;top:38px;font-size:11px;color:#d8d8d8;">45</span>
<span class="t" style="left:957.7828125px;top:38px;font-size:11px;color:#d8d8d8;">50</span>
<span class="t" style="left:1047.6228125px;top:38px;font-size:11px;color:#d8d8d8;">55</span>
<span class="t" style="left:1137.4628125px;top:38px;font-size:11px;color:#d8d8d8;">60</span>
<span class="t" style="left:1227.3028125px;top:38px;font-size:11px;color:#d8d8d8;">65</span>
<span class="t" style="left:1317.1428125px;top:38px;font-size:11px;color:#d8d8d8;">70</span>
<span class="t" style="left:1406.9828125px;top:38px;font-size:11px;color:#d8d8d8;">75</span>
<span class="t" style="left:1496.8228125px;top:38px;font-size:11px;color:#d8d8d8;">80</span>
<span class="t" style="left:1586.6628125px;top:38px;font-size:11px;color:#d8d8d8;">85</span>
<span class="t" style="left:1676.5028125px;top:38px;font-size:11px;color:#d8d8d8;">90</span>
<span class="t" style="left:1766.3428125px;top:38px;font-size:11px;color:#d8d8d8;">95</span>
<span class="t" style="left:1853.12421875px;top:38px;font-size:11px;color:#d8d8d8;">100</span>
<svg class="abs" style="left:22px;top:32px" width="16" height="12" viewBox="0 0 16 12"><path d="M1 1v10M3 1v10" stroke="#cfcfcf" stroke-width="1" stroke-dasharray="1 1"/><path d="M4 8q2-9 5-2t5-3" fill="none" stroke="#45c3c4" stroke-width="1.500"/></svg>
<div class="abs" style="left:4px;top:69px;width:98px;height:46px;background:#f4f4f4;"></div>
<div class="abs" style="left:6px;top:71px;width:94px;height:20px;background:#dfc8c8;"></div>
<div class="abs" style="left:4px;top:91px;width:98px;height:2px;background:#5a5a5a;"></div>
<div class="abs" style="left:6px;top:94px;width:94px;height:19px;background:#ffffff;"></div>
<div class="abs" style="left:10px;top:94px;width:88px;height:16px;overflow:hidden;"><span class="t" style="left:0px;top:1px;font-size:11.5px;color:#111;font-family:'Liberation Mono',monospace;">Array modifie</span></div>
<div class="abs" style="left:106px;top:68px;width:2px;height:50px;background:#2c2c2c;"></div>
<span class="t" style="left:113px;top:75px;font-size:11.5px;color:#f4f4f4;letter-spacing:-0.40px;">1 Object Selected</span>
<svg class="abs" style="left:1024px;top:73px" width="20" height="18" viewBox="0 0 20 18"><path d="M2 5v-3h3M13 2h3v3M2 11v3h3M16 11v3h-3" fill="none" stroke="#e8e8e8" stroke-width="1.200"/><rect x="7" y="4" width="4" height="4" fill="#45c3c4"/><path d="M4 12l2-3h6l2 3z" fill="#d0d0d0"/><path d="M19 14v4h-4z" fill="#d0d0d0"/></svg>
<svg class="abs" style="left:1052px;top:73px" width="14" height="18" viewBox="0 0 14 18"><rect x="2" y="8" width="10" height="8" rx="1" fill="#e8e8e8"/><path d="M4.500 8v-3a2.500 2.500 0 0 1 5 0v3" fill="none" stroke="#e8e8e8" stroke-width="1.500"/><rect x="6.300" y="10" width="1.500" height="4" fill="#444"/></svg>
<svg class="abs" style="left:1078px;top:73px" width="16" height="18" viewBox="0 0 16 18"><rect x="1" y="2" width="14" height="14" fill="none" stroke="#e8e8e8" stroke-width="1.200"/><path d="M8 4l3 5-3 5-3-5z" fill="#e8e8e8"/><path d="M3 9h10M8 4v10" stroke="#444" stroke-width="1"/></svg>
<span class="t" style="left:1101px;top:75px;font-size:11.5px;color:#f0f0f0;">X:</span>
<div class="abs" style="left:1115px;top:73px;width:57px;height:17px;background:#5c5c5c;"></div>
<span class="t" style="left:1118px;top:76px;font-size:11.5px;color:#8e8e8e;">94,409</span>
<span class="t" style="left:1185px;top:75px;font-size:11.5px;color:#f0f0f0;">Y:</span>
<div class="abs" style="left:1199px;top:73px;width:57px;height:17px;background:#5c5c5c;"></div>
<span class="t" style="left:1202px;top:76px;font-size:11.5px;color:#8e8e8e;">-78,155</span>
<span class="t" style="left:1269px;top:75px;font-size:11.5px;color:#f0f0f0;">Z:</span>
<div class="abs" style="left:1283px;top:73px;width:57px;height:17px;background:#5c5c5c;"></div>
<span class="t" style="left:1286px;top:76px;font-size:11.5px;color:#8e8e8e;">0,0</span>
<span class="t" style="left:1355px;top:75px;font-size:11.5px;color:#f4f4f4;letter-spacing:-0.20px;">Grid = 10,0</span>
<div class="abs" style="left:1193px;top:98px;width:1px;height:16px;background:#1e1e1e;"></div>
<div class="abs" style="left:1200px;top:96px;width:18px;height:19px;background:#5e5e5e;border-radius:3px;"></div>
<svg class="abs" style="left:1203px;top:99px" width="12" height="14" viewBox="0 0 12 14"><path d="M6 1l5 2v4c0 3-2 5-5 6-3-1-5-3-5-6v-4z" fill="#e8e8e8"/><path d="M6 1v12M1 6.500h10" stroke="#444" stroke-width="1"/><path d="M6 1l5 2v3.500h-5z" fill="#555"/><path d="M1 6.500h5v6.500c-3-1-5-3-5-6z" fill="#555"/></svg>
<span class="t" style="left:1225px;top:99px;font-size:11.5px;color:#f4f4f4;letter-spacing:-0.42px;">Enabled:</span>
<div class="abs" style="left:1272px;top:101px;width:11px;height:11px;background:#3ed03e;border-radius:6px;"></div>
<div class="abs" style="left:1288px;top:96px;width:19px;height:20px;background:#2e2e2e;border-radius:4px;"></div>
<div class="abs" style="left:1291px;top:99px;width:14px;height:14px;background:#f0f0f0;border-radius:7px;"></div>
<span class="t" style="left:1295px;top:99px;font-size:11px;color:#222;font-weight:bold;">0</span>
<div class="abs" style="left:1315px;top:98px;width:1px;height:16px;background:#1e1e1e;"></div>
<svg class="abs" style="left:1322px;top:98px" width="16" height="16" viewBox="0 0 16 16"><path d="M8 2l5.500 3v6l-5.500 3-5.500-3v-6zM2.500 5l5.500 3 5.500-3M8 8v6" fill="none" stroke="#e0e0e0" stroke-width="1"/></svg>
<span class="t" style="left:1346px;top:100px;font-size:11.5px;color:#f4f4f4;letter-spacing:-0.51px;">Add Time Tag</span>
<svg class="abs" style="left:1466px;top:73px" width="120" height="18" viewBox="0 0 120 18"><path d="M3 3v12" stroke="#ececec" stroke-width="1.800"/><path d="M16 3v12l-9-6z M16 3" fill="#ececec"/><path d="M11 9l6-5v10z" fill="#ececec"/>
<path d="M21.500 1v16M61.500 1v16" stroke="#1e1e1e" stroke-width="1"/>
<path d="M27 9l8-5.500v11z" fill="#ececec"/><path d="M38 3.500v11M42 3.500v11" stroke="#ececec" stroke-width="2"/>
<path d="M51 1l14 8-14 8z" fill="#ececec"/><path d="M66 17v-3.500h-3.500z" fill="#ececec"/>
<path d="M75 3.500v11M79 3.500v11" stroke="#ececec" stroke-width="2"/><path d="M82 3.500l8 5.500-8 5.500z" fill="#ececec"/>
<path d="M93.500 1v16" stroke="#1e1e1e" stroke-width="1"/>
<path d="M99 3v12l9-6z" fill="#ececec"/><path d="M104 4l6 5-6 5z" fill="#ececec"/><path d="M113 3v12" stroke="#ececec" stroke-width="1.800"/></svg>
<svg class="abs" style="left:1468px;top:96px" width="16" height="14" viewBox="0 0 16 14"><path d="M1 7l6-5v10zM15 7l-6-5v10z" fill="#ececec"/></svg>
<div class="abs" style="left:1488px;top:97px;width:1px;height:17px;background:#1e1e1e;"></div>
<div class="abs" style="left:1490px;top:95px;width:70px;height:18px;background:#5c5c5c;"></div>
<span class="t" style="left:1495px;top:98px;font-size:11.5px;color:#f0f0f0;">0</span>
<svg class="abs" style="left:1551px;top:98px" width="6" height="12" viewBox="0 0 6 12"><path d="M0.500 5l2.500-3.500 2.500 3.500zM0.500 7l2.500 3.500 2.500-3.500z" fill="#dcdcdc"/></svg>
<div class="abs" style="left:1562px;top:97px;width:1px;height:17px;background:#1e1e1e;"></div>
<svg class="abs" style="left:1566px;top:95px" width="18" height="18" viewBox="0 0 18 18"><circle cx="7" cy="7" r="5.500" fill="#e0e0e0"/><path d="M7 3.500v3.500h3" stroke="#444" stroke-width="1.200" fill="none"/><circle cx="12" cy="12" r="4" fill="#f4a71d"/><circle cx="12" cy="12" r="1.500" fill="#444"/></svg>
<div class="abs" style="left:1597px;top:71px;width:42px;height:43px;background:#5e5e5e;border-radius:3px;"></div>
<svg class="abs" style="left:1603px;top:76px" width="32" height="34" viewBox="0 0 32 34"><path d="M12 1h5v10h10v5h-10v10h-5v-10h-10v-5h10z" fill="#ececec"/><circle cx="17" cy="25" r="3.500" fill="none" stroke="#45c3c4" stroke-width="2"/><path d="M19.500 22.500l7-7M24 18l2.500 2.500M26 16l2 2" stroke="#45c3c4" stroke-width="2" fill="none"/></svg>
<div class="abs" style="left:1644px;top:71px;width:46px;height:20px;background:#5e5e5e;border-radius:3px;"></div>
<span class="t" style="left:1645.5px;top:74.5px;font-size:11.5px;color:#ececec;letter-spacing:-0.46px;">Auto Key</span>
<div class="abs" style="left:1644px;top:94px;width:46px;height:20px;background:#5e5e5e;border-radius:3px;"></div>
<span class="t" style="left:1648.5px;top:97.5px;font-size:11.5px;color:#ececec;letter-spacing:-0.47px;">Set Key</span>
<div class="abs" style="left:1695px;top:71px;width:114px;height:19px;background:#5c5c5c;"></div>
<span class="t" style="left:1700px;top:74px;font-size:11.5px;color:#e8e8e8;letter-spacing:-0.59px;">Selected</span>
<svg class="abs" style="left:1795px;top:78px" width="8" height="6" viewBox="0 0 8 6"><path d="M0.500 0.500h6l-3 4z" fill="#e0e0e0"/></svg>
<svg class="abs" style="left:1697px;top:95px" width="20" height="20" viewBox="0 0 20 20"><path d="M4 3h3v3h-3zM11 3h3v3h-3z" fill="none" stroke="#e0e0e0" stroke-width="1"/><path d="M5.500 6q-1 6-3 12M5.500 6q4 2 7 0q1 6 3 12" fill="none" stroke="#45c3c4" stroke-width="1.600"/><path d="M19 16v4h-4z" fill="#d0d0d0"/></svg>
<div class="abs" style="left:1721px;top:94px;width:88px;height:20px;background:#5e5e5e;border-radius:3px;"></div>
<span class="t" style="left:1734.0px;top:97.5px;font-size:11.5px;color:#ececec;letter-spacing:-0.14px;">Key Filters...</span>
<svg class="abs" style="left:1819px;top:71px" width="22" height="22" viewBox="0 0 22 22"><circle cx="12" cy="8" r="5" fill="none" stroke="#e0e0e0" stroke-width="1.800"/><path d="M8.500 11.500l-6 7" stroke="#e0e0e0" stroke-width="2.200"/></svg>
<svg class="abs" style="left:1842px;top:71px" width="22" height="22" viewBox="0 0 22 22"><circle cx="10" cy="10" r="4" fill="none" stroke="#e0e0e0" stroke-width="1.500"/><path d="M7 13l-5 6" stroke="#e0e0e0" stroke-width="2"/><rect x="12" y="2" width="4" height="4" fill="#45c3c4"/><rect x="17" y="2" width="4" height="4" fill="#45c3c4"/><rect x="14" y="8" width="5" height="5" fill="#45c3c4"/></svg>
<svg class="abs" style="left:1865px;top:71px" width="22" height="22" viewBox="0 0 22 22"><path d="M2 6v-4h4M16 2h4v4M2 14v4h4M20 14v4h-4" fill="none" stroke="#e0e0e0" stroke-width="1.400"/><path d="M11 5l5 2v6l-5 2-5-2v-6z" fill="#45c3c4"/><path d="M21 17v4h-4z" fill="#d0d0d0"/></svg>
<svg class="abs" style="left:1888px;top:71px" width="22" height="22" viewBox="0 0 22 22"><path d="M14 3l5 2v7l-5 2-5-2v-7z" fill="#45c3c4"/><path d="M2 12l4-3v2h4v2h-4v2z" fill="#e0e0e0"/><path d="M6 5l1 2M4 17l2-1" stroke="#e0e0e0"/><path d="M21 17v4h-4z" fill="#d0d0d0"/></svg>
<svg class="abs" style="left:1819px;top:94px" width="22" height="22" viewBox="0 0 22 22"><path d="M3 3l13 7-13 7" fill="none" stroke="#e0e0e0" stroke-width="1.600"/><path d="M7 7l6 3-6 3" fill="none" stroke="#e0e0e0" stroke-width="1"/><path d="M21 17v4h-4z" fill="#d0d0d0"/></svg>
<svg class="abs" style="left:1842px;top:94px" width="22" height="22" viewBox="0 0 22 22"><path d="M6 18c-3-3-4-6-3-7s2 0 3 2v-8c0-1.500 2-1.500 2 0v-2c0-1.500 2-1.500 2 0v1c0-1.500 2-1.500 2 0v2c0-1.500 2-1.500 2 0v7c0 3-1 4-2 5z" fill="#e8e8e8"/><path d="M21 17v4h-4z" fill="#d0d0d0"/></svg>
<svg class="abs" style="left:1865px;top:94px" width="22" height="22" viewBox="0 0 22 22"><ellipse cx="10" cy="11" rx="9" ry="4" fill="none" stroke="#e0e0e0" stroke-width="1.500" transform="rotate(-25 10 11)"/><path d="M10 4a6 6 0 0 1 6 6l-6 1z" fill="#45c3c4"/><circle cx="10" cy="10" r="6" fill="none" stroke="#cfcfcf" stroke-width="1"/><path d="M21 17v4h-4z" fill="#d0d0d0"/></svg>
<svg class="abs" style="left:1888px;top:94px" width="22" height="22" viewBox="0 0 22 22"><rect x="2" y="2" width="17" height="17" fill="none" stroke="#e8e8e8" stroke-width="1.600"/><rect x="2" y="11" width="8" height="8" fill="#e8e8e8"/><path d="M10 11l7-7m0 5v-5h-5" fill="none" stroke="#e8e8e8" stroke-width="1.800"/></svg></div>
<div id="taskbar" class="abs"><svg class="abs" style="left:20px;top:10px" width="26" height="24" viewBox="0 0 26 24"><circle cx="10" cy="11" r="9" fill="#f59a23"/><path d="M10 22a5 5 0 0 1 1-9.500a6 6 0 0 1 10 2a4 4 0 0 1 0 7.500z" fill="#e8eef8" stroke="#b8c8e0" stroke-width="0.600"/></svg>
<span class="t" style="left:50px;top:8px;font-size:12px;color:#1e1e1e;letter-spacing:-0.70px;">31°C</span>
<span class="t" style="left:50px;top:24px;font-size:12px;color:#5a5a5a;letter-spacing:-0.34px;">Cerah</span>
<svg class="abs" style="left:419px;top:12px" width="24" height="24" viewBox="0 0 24 24"><rect x="0" y="0" width="11" height="11" fill="#1a8fe8"/><rect x="12" y="0" width="11" height="11" fill="#1a8fe8"/><rect x="0" y="12" width="11" height="11" fill="#1a8fe8"/><rect x="12" y="12" width="11" height="11" fill="#1a8fe8"/></svg>
<div class="abs" style="left:456px;top:7px;width:217px;height:32px;background:#f8f6f6;border-radius:16px;border:1px solid #e0d8d8;box-sizing:border-box;"></div>
<svg class="abs" style="left:466px;top:15px" width="16" height="16" viewBox="0 0 16 16"><circle cx="7" cy="7" r="5" fill="none" stroke="#222" stroke-width="1.600"/><path d="M10.500 10.500l4.500 4.500" stroke="#222" stroke-width="1.600"/></svg>
<span class="t" style="left:492px;top:16px;font-size:13px;color:#5a5a5a;letter-spacing:-0.03px;">Search</span>
<svg class="abs" style="left:625px;top:11px" width="14" height="22" viewBox="0 0 14 22"><rect x="2" y="6" width="10" height="14" rx="2" fill="#8a8e94"/><rect x="5" y="2" width="4" height="5" fill="none" stroke="#6a6e74" stroke-width="1.200"/><path d="M4 20v2M10 20v2" stroke="#555" stroke-width="1.500"/></svg>
<svg class="abs" style="left:645px;top:12px" width="22" height="20" viewBox="0 0 22 20"><path d="M1 3l6-2 7 2 7-2v16l-7 2-7-2-6 2z" fill="#5aa7e8"/><path d="M7 1v16M14 3v16" stroke="#cfe4f8" stroke-width="1"/><path d="M3 8q3-3 4 1t4 0 4 2 4-3v8l-5 2-7-2-4 1z" fill="#58b05a"/></svg>
<svg class="abs" style="left:686px;top:10px" width="26" height="26" viewBox="0 0 26 26"><path d="M5 6q8-6 16 2q-2 6-8 5q-5 0-8-7z" fill="#3aa0f0"/><path d="M3 12q4-2 9 1q6 2 10-3q0 7-8 8q-8 0-11-6z" fill="#b55ae0"/><path d="M6 6q3 0 5 5q-4 2-8 0q0-4 3-5z" fill="#38c878"/><rect x="8" y="18" width="14" height="7" rx="1" fill="#f0b020"/><text x="15" y="24" font-family="Liberation Sans" font-weight="bold" font-size="6" fill="#222" text-anchor="middle">PRE</text></svg>
<svg class="abs" style="left:729px;top:10px" width="26" height="26" viewBox="0 0 26 26"><rect x="3" y="8" width="15" height="14" fill="#1c1c1c"/><rect x="9" y="3" width="15" height="14" fill="#e4e4e4" stroke="#f8f8f8" stroke-width="1"/></svg>
<svg class="abs" style="left:774px;top:10px" width="26" height="26" viewBox="0 0 26 26"><rect x="8" y="3" width="16" height="18" rx="2" fill="#1a78d0"/><path d="M8 8l8 5 8-5v12h-16z" fill="#3aa0f0"/><rect x="2" y="7" width="12" height="13" rx="2" fill="#0f5cb0"/><circle cx="8" cy="13.500" r="3.500" fill="none" stroke="#fff" stroke-width="1.600"/><rect x="10" y="18" width="15" height="7" rx="1" fill="#30c8e8"/><text x="17.500" y="24" font-family="Liberation Sans" font-weight="bold" font-size="6" fill="#111" text-anchor="middle">NEW</text></svg>
<svg class="abs" style="left:817px;top:10px" width="26" height="26" viewBox="0 0 26 26"><path d="M3 8h20v13a3 3 0 0 1-3 3h-14a3 3 0 0 1-3-3z" fill="#1a68c8"/><path d="M9 8v-3a2 2 0 0 1 2-2h4a2 2 0 0 1 2 2v3" fill="none" stroke="#1a68c8" stroke-width="1.800"/><rect x="9" y="11" width="3.500" height="3.500" fill="#f25022"/><rect x="13.500" y="11" width="3.500" height="3.500" fill="#7fba00"/><rect x="9" y="15.500" width="3.500" height="3.500" fill="#00a4ef"/><rect x="13.500" y="15.500" width="3.500" height="3.500" fill="#ffb900"/></svg>
<svg class="abs" style="left:862px;top:10px" width="26" height="26" viewBox="0 0 26 26"><path d="M1 5a2 2 0 0 1 2-2h6l3 3h11a2 2 0 0 1 2 2v3h-24z" fill="#e8a820"/><rect x="1" y="8" width="24" height="15" rx="2" fill="#f8cc40"/><rect x="7" y="17" width="12" height="6" rx="1" fill="#2878d0"/></svg>
<div class="abs" style="left:872px;top:40px;width:6px;height:2.5px;background:#8a8686;border-radius:1.5px;"></div>
<svg class="abs" style="left:905px;top:10px" width="26" height="26" viewBox="0 0 26 26"><circle cx="13" cy="13" r="11.500" fill="#1a88d8"/><path d="M3 16a10 10 0 0 1 19-6q1 5-5 5h-6q0 5 7 6a11.500 11.500 0 0 1-15-5z" fill="#38d0b0"/><path d="M8 15a5 5 0 0 1 9-3q0 2-3 2h-3q0 4 5 5q-7 2-8-4z" fill="#f0f8ff"/></svg>
<div class="abs" style="left:915px;top:40px;width:6px;height:2.5px;background:#8a8686;border-radius:1.5px;"></div>
<svg class="abs" style="left:950px;top:10px" width="26" height="26" viewBox="0 0 26 26"><circle cx="13" cy="13" r="11" fill="#28c060"/><path d="M3 24l2-6" stroke="#28c060" stroke-width="3"/><circle cx="13" cy="13" r="8.500" fill="none" stroke="#fff" stroke-width="1.600"/><path d="M9 9q-1 3 3 6t5 1l-2-2-1 1q-3-1-3-4l1-1z" fill="#fff"/></svg>
<div class="abs" style="left:960px;top:40px;width:6px;height:2.5px;background:#8a8686;border-radius:1.5px;"></div>
<div class="abs" style="left:964px;top:6px;width:20px;height:15px;background:#1a70d0;border-radius:8px;"></div>
<span class="t" style="left:968px;top:6px;font-size:10.5px;color:#fff;">22</span>
<svg class="abs" style="left:994px;top:10px" width="26" height="26" viewBox="0 0 26 26"><circle cx="13" cy="13" r="11.500" fill="#5a68f0"/><path d="M6 9q7-3 14 0q3 5 2 9q-2 2-4 2l-1-2q-4 1-8 0l-1 2q-2 0-4-2q-1-4 2-9z" fill="#fff"/><circle cx="10" cy="14" r="1.800" fill="#5a68f0"/><circle cx="16" cy="14" r="1.800" fill="#5a68f0"/></svg>
<div class="abs" style="left:1004px;top:40px;width:6px;height:2.5px;background:#8a8686;border-radius:1.5px;"></div>
<div class="abs" style="left:1009px;top:6px;width:17px;height:15px;background:#e84848;border-radius:8px;"></div>
<span class="t" style="left:1011px;top:6px;font-size:10px;color:#fff;">9+</span>
<svg class="abs" style="left:1038px;top:10px" width="26" height="26" viewBox="0 0 26 26"><circle cx="13" cy="13" r="12" fill="#1ed760"/><path d="M6 9q8-2 14 1.500M7 13q6-1.500 11 1.500M8 17q5-1 9 1" fill="none" stroke="#111" stroke-width="2" stroke-linecap="round"/></svg>
<div class="abs" style="left:1048px;top:40px;width:6px;height:2.5px;background:#8a8686;border-radius:1.5px;"></div>
<svg class="abs" style="left:1082px;top:10px" width="26" height="26" viewBox="0 0 26 26"><rect x="2" y="2" width="22" height="22" fill="#050505"/><path d="M5 11l3 5 3-5 3 5 3-5 3 5" fill="none" stroke="#20c0c0" stroke-width="1.500"/></svg>
<div class="abs" style="left:1092px;top:40px;width:6px;height:2.5px;background:#8a8686;border-radius:1.5px;"></div>
<svg class="abs" style="left:1126px;top:10px" width="26" height="26" viewBox="0 0 26 26"><rect x="2" y="4" width="22" height="17" fill="#e8f0f8" stroke="#7aa8d0" stroke-width="1.500"/><path d="M3 18l3-6 2 3 3-8 3 9 3-5 2 3 4-4v8h-20z" fill="#78b8e8"/></svg>
<div class="abs" style="left:1136px;top:40px;width:6px;height:2.5px;background:#8a8686;border-radius:1.5px;"></div>
<svg class="abs" style="left:1170px;top:10px" width="26" height="26" viewBox="0 0 26 26"><path d="M20 4l-9-2-8 11 8 11 9-2-5-3-7-6 7-6z" fill="#1850b0"/><path d="M20 4l-6 4 3 2h7zM20 22l-6-4 3-2h7z" fill="#38b8f0"/><path d="M11 9l-4 4 4 4 3-2-2-2 2-2z" fill="#fff"/></svg>
<div class="abs" style="left:1180px;top:40px;width:6px;height:2.5px;background:#8a8686;border-radius:1.5px;"></div>
<svg class="abs" style="left:1214px;top:10px" width="26" height="26" viewBox="0 0 26 26"><circle cx="13" cy="13" r="7" fill="none" stroke="#707880" stroke-width="5" stroke-dasharray="3.500 2"/><circle cx="13" cy="13" r="7" fill="#8a929a"/><circle cx="13" cy="13" r="4" fill="#2a78d8" stroke="#e8eef4" stroke-width="1.500"/></svg>
<div class="abs" style="left:1224px;top:40px;width:6px;height:2.5px;background:#8a8686;border-radius:1.5px;"></div>
<svg class="abs" style="left:1257px;top:10px" width="26" height="26" viewBox="0 0 26 26"><rect x="4" y="2" width="18" height="23" rx="2" fill="#3a4048"/><rect x="7" y="5" width="12" height="4" fill="#78b0e0"/><path d="M7 12h3v3h-3zM11.500 12h3v3h-3zM16 12h3v3h-3zM7 16h3v3h-3zM11.500 16h3v3h-3zM16 16h3v3h-3zM7 20h3v3h-3zM11.500 20h3v3h-3zM16 20h3v3h-3z" fill="#a8c8e8"/></svg>
<div class="abs" style="left:1267px;top:40px;width:6px;height:2.5px;background:#8a8686;border-radius:1.5px;"></div>
<svg class="abs" style="left:1302px;top:10px" width="26" height="26" viewBox="0 0 26 26"><rect x="1" y="1" width="24" height="24" rx="6" fill="#1a2a98"/><text x="13" y="19" font-family="Liberation Sans" font-weight="bold" font-style="italic" font-size="15" fill="#e8e8f8" text-anchor="middle" stroke="#f0c020" stroke-width="0.600">LfS</text></svg>
<div class="abs" style="left:1312px;top:40px;width:6px;height:2.5px;background:#8a8686;border-radius:1.5px;"></div>
<svg class="abs" style="left:1346px;top:10px" width="26" height="26" viewBox="0 0 26 26"><rect x="1" y="1" width="24" height="24" rx="6" fill="#181818"/><text x="13" y="19" font-family="Liberation Sans" font-weight="bold" font-style="italic" font-size="15" fill="#d8d8e8" text-anchor="middle" stroke="#f0c020" stroke-width="0.600">LfS</text></svg>
<div class="abs" style="left:1356px;top:40px;width:6px;height:2.5px;background:#8a8686;border-radius:1.5px;"></div>
<svg class="abs" style="left:1390px;top:10px" width="26" height="26" viewBox="0 0 26 26"><rect x="2" y="3" width="22" height="21" rx="3" fill="#a8b0b8"/><circle cx="13" cy="14" r="8.500" fill="#f4f4f4" stroke="#333" stroke-width="1.500"/><path d="M13 14v-6M13 14l5 3M13 14l-3 4" stroke="#222" stroke-width="1.500"/><circle cx="13" cy="14" r="1.500" fill="#d03030"/></svg>
<div class="abs" style="left:1400px;top:40px;width:6px;height:2.5px;background:#8a8686;border-radius:1.5px;"></div>
<div class="abs" style="left:1403px;top:6px;width:17px;height:17px;background:#1a78e0;border-radius:9px;"></div>
<svg class="abs" style="left:1406px;top:9px" width="11" height="11" viewBox="0 0 11 11"><path d="M5.500 1a3 3 0 0 1 3 3v3l1.500 1.500h-9l1.500-1.500v-3a3 3 0 0 1 3-3zM4.500 9.500h2" fill="none" stroke="#fff" stroke-width="1.200"/></svg>
<svg class="abs" style="left:1434px;top:10px" width="26" height="26" viewBox="0 0 26 26"><rect x="2" y="2" width="22" height="22" rx="4" fill="#2a90e8"/><path d="M2 20l8-10 6 7 3-3 5 6a4 4 0 0 1-4 4h-14a4 4 0 0 1-4-4z" fill="#58d0f8"/><circle cx="18" cy="8" r="2.500" fill="#c8f0ff"/></svg>
<div class="abs" style="left:1444px;top:40px;width:6px;height:2.5px;background:#8a8686;border-radius:1.5px;"></div>
<svg class="abs" style="left:1478px;top:10px" width="26" height="26" viewBox="0 0 26 26"><path d="M5 1h16l3 3v17h-19z" fill="#2aa6c9"/><path d="M2 4h3v17h19v4h-19l-3-3z" fill="#1d7d9a"/><rect x="5" y="18" width="19" height="7" fill="#156a84"/><text x="14" y="15" font-family="Liberation Sans" font-weight="bold" font-size="14" fill="#fff" text-anchor="middle">3</text><text x="14.500" y="24" font-family="Liberation Sans" font-weight="bold" font-size="5.500" fill="#cfe" text-anchor="middle">MAX</text></svg>
<div class="abs" style="left:1488px;top:40px;width:6px;height:2.5px;background:#8a8686;border-radius:1.5px;"></div>
<svg class="abs" style="left:1638px;top:17px" width="16" height="12" viewBox="0 0 16 12"><path d="M3 9l5-5 5 5" fill="none" stroke="#222" stroke-width="1.500"/></svg>
<svg class="abs" style="left:1667px;top:13px" width="22" height="20" viewBox="0 0 22 20"><path d="M5 14a4 4 0 0 1 1-8a6 6 0 0 1 11 2a3.500 3.500 0 0 1 0 6z" fill="#8a8e94" stroke="#555" stroke-width="1"/><circle cx="15" cy="14" r="4" fill="#f8d020"/><rect x="14.500" y="11.500" width="1" height="3" fill="#222"/><rect x="14.500" y="15.500" width="1" height="1" fill="#222"/></svg>
<svg class="abs" style="left:1702px;top:12px" width="16" height="22" viewBox="0 0 16 22"><rect x="5" y="1" width="6" height="12" rx="3" fill="#2a78d8"/><path d="M2.500 10a5.500 5.500 0 0 0 11 0M8 15.500v4" fill="none" stroke="#2a78d8" stroke-width="1.300"/></svg>
<svg class="abs" style="left:1732px;top:14px" width="20" height="18" viewBox="0 0 20 18"><path d="M2 7a12 12 0 0 1 16 0M5 10.500a8 8 0 0 1 10 0" fill="none" stroke="#aaa" stroke-width="1.300"/><path d="M7.500 13.500a4 4 0 0 1 5 0" fill="none" stroke="#222" stroke-width="1.300"/><circle cx="10" cy="16" r="1.300" fill="#222"/></svg>
<svg class="abs" style="left:1757px;top:14px" width="20" height="18" viewBox="0 0 20 18"><path d="M2 7h3l4-4v12l-4-4h-3z" fill="none" stroke="#222" stroke-width="1.200"/><path d="M12 6a4 4 0 0 1 0 6M14.500 4a7 7 0 0 1 0 10M17 2a10 10 0 0 1 0 14" fill="none" stroke="#222" stroke-width="1.100"/></svg>
<svg class="abs" style="left:1780px;top:14px" width="22" height="18" viewBox="0 0 22 18"><rect x="2" y="3" width="16" height="9" rx="2" fill="#222"/><rect x="18" y="6" width="2" height="3" fill="#222"/><path d="M6 5l-2 3h3l-2 3" stroke="#fff" stroke-width="1" fill="none"/><path d="M14 16l-3.500-3.500a2.200 2.200 0 0 1 3.500-2.500a2.200 2.200 0 0 1 3.500 2.500z" fill="#222" stroke="#efe6e4" stroke-width="0.800"/></svg>
<span class="t" style="left:1849px;top:8px;font-size:12px;color:#1e1e1e;letter-spacing:-0.41px;">18:21</span>
<span class="t" style="left:1816px;top:24px;font-size:12px;color:#1e1e1e;letter-spacing:0.09px;">13/04/2024</span>
<svg class="abs" style="left:1884px;top:13px" width="22" height="20" viewBox="0 0 22 20"><path d="M8 3a5 5 0 0 1 5 5v4l2 2.500h-14l2-2.500v-4a5 5 0 0 1 5-5z" fill="#222"/><path d="M6 16a2 2 0 0 0 4 0" fill="#222"/><text x="6" y="12" font-family="Liberation Sans" font-weight="bold" font-size="6" fill="#fff">z</text><text x="14" y="6" font-family="Liberation Sans" font-weight="bold" font-size="6" fill="#222">z</text></svg></div>
</body></html>
